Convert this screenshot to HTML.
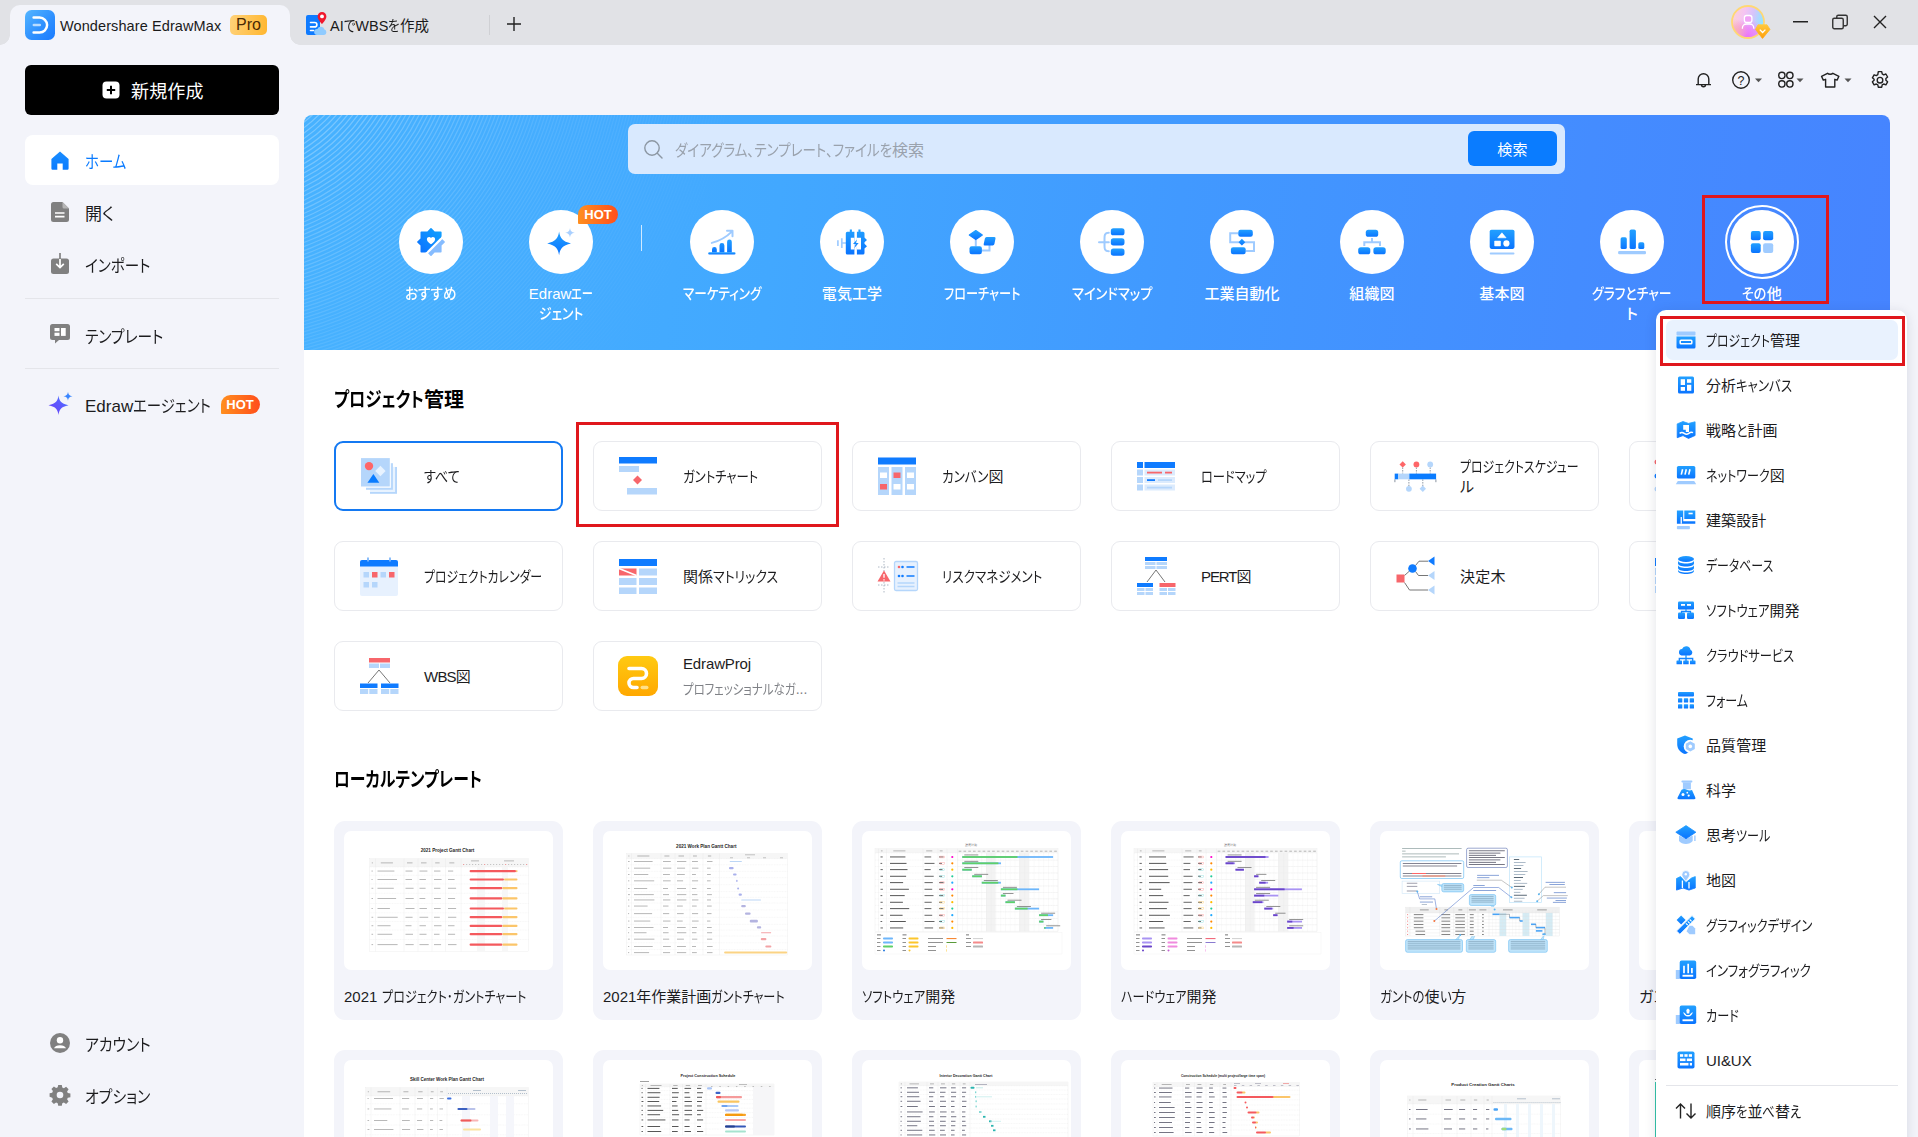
<!DOCTYPE html>
<html lang="ja">
<head>
<meta charset="utf-8">
<title>EdrawMax</title>
<style>
*{box-sizing:border-box;margin:0;padding:0}
html,body{width:1918px;height:1137px;overflow:hidden}
body{background:#f3f4fa;font-family:"Liberation Sans","Noto Sans CJK JP",sans-serif;color:#1c1c1e;position:relative;font-feature-settings:"palt" 1;-webkit-font-smoothing:antialiased}
.abs{position:absolute}
.jp{font-family:"Noto Sans CJK JP","Liberation Sans",sans-serif}
svg{display:block;overflow:visible}

/* ---------- title bar ---------- */
#titlebar{position:absolute;left:0;top:0;width:1918px;height:45px;background:#e1e2e6}
#tab1{position:absolute;left:10px;top:5px;width:280px;height:40px;background:#f3f4fa;border-radius:10px 10px 0 0}
#tab1:before,#tab1:after{content:"";position:absolute;bottom:0;width:10px;height:10px}
#tab1:before{left:-10px;background:radial-gradient(circle at 0 0,rgba(243,244,250,0) 9.5px,#f3f4fa 10px)}
#tab1:after{right:-10px;background:radial-gradient(circle at 100% 0,rgba(243,244,250,0) 9.5px,#f3f4fa 10px)}
.ttext{position:absolute;font-size:14.5px;line-height:20px;color:#1a1a1a;white-space:nowrap}
#pro{position:absolute;left:230px;top:15px;width:37px;height:20px;border-radius:5px;background:linear-gradient(100deg,#ffd27a,#ffb62e);color:#4a2a05;font-size:16px;line-height:20px;text-align:center}

/* ---------- sidebar ---------- */
#newbtn{position:absolute;left:25px;top:65px;width:254px;height:50px;background:#000;border-radius:6px;color:#fff}
#newbtn .nb{position:absolute;left:106px;top:15px;font-size:18px;line-height:24px;white-space:nowrap}
.nav{position:absolute;left:25px;width:254px;height:50px;border-radius:8px}
.nav.on{background:#fff}
.nav .lbl{position:absolute;left:60px;top:16px;font-size:17px;line-height:24px;white-space:nowrap;color:#1c1c1e}
.nav.on .lbl{color:#0a7bff}
.nav svg{position:absolute;left:24px;top:14px}
.sep{position:absolute;left:25px;width:254px;height:1px;background:#e4e5ea}
.hot{display:inline-block;background:linear-gradient(90deg,#ff8f1f,#ff4e1a);color:#fff;font-weight:bold;font-size:12px;line-height:18px;height:18px;border-radius:9px 9px 9px 2px;padding:0 6px;letter-spacing:0}

/* ---------- main ---------- */
#panel{position:absolute;left:304px;top:115px;width:1586px;height:1040px;background:#fff;border-radius:8px 8px 0 0}
#banner{position:absolute;left:304px;top:115px;width:1586px;height:235px;border-radius:8px 8px 0 0;overflow:hidden;
 background:linear-gradient(97deg,#47b2ff 0%,#42a8ff 30%,#4199ff 55%,#448cff 80%,#4684ff 100%)}
#search{position:absolute;left:628px;top:124px;width:937px;height:50px;border-radius:7px;background:#d9e9fe}
#search .ph{position:absolute;left:47px;top:15px;font-size:16px;line-height:24px;color:#9aa2ad;white-space:nowrap}
#sbtn{position:absolute;left:1468px;top:131px;width:89px;height:35px;border-radius:6px;background:#0a7cff;color:#fff;font-size:15px;line-height:38px;text-align:center}
.cat{position:absolute;top:210px;width:64px;height:64px;border-radius:50%;background:#fff}
.cat svg{position:absolute;left:16px;top:16px}
.clbl{position:absolute;top:284px;width:120px;text-align:center;color:#fff;font-size:15px;line-height:20px;font-weight:500}
.redbox{position:absolute;border:3px solid #e0171c}

h2{position:absolute;left:334px;font-size:20px;line-height:28px;font-weight:700;color:#000;white-space:nowrap}
.card{position:absolute;width:229px;height:70px;border:1px solid #e9eaee;border-radius:9px;background:#fff}
.card.sel{border:2px solid #1479f2}
.card .ic{position:absolute;left:23.500px;top:13.500px;width:40px;height:40px}
.card.sel .ic{left:21px;top:11px}
.card .t{position:absolute;left:89px;top:1px;height:68px;width:128px;display:flex;align-items:center;font-size:15px;line-height:20px;color:#1c1c1e}
.card.sel .t{left:88px;top:0}
.tpl{position:absolute;width:229px;height:199px;background:#f3f4fa;border-radius:11px}
.tpl .th{position:absolute;left:10px;top:10px;width:209px;height:139px;background:#fff;border-radius:7px;overflow:hidden}
.tpl .n{position:absolute;left:10px;top:163.5px;font-size:15px;line-height:24px;white-space:nowrap;color:#1c1c1e}

/* ---------- dropdown ---------- */
#dd{position:absolute;left:1656px;top:310px;width:251px;height:840px;background:#fff;border-radius:10px;box-shadow:0 2px 12px rgba(30,40,70,.13)}
.mi{position:absolute;left:1666px;width:232px;height:40px;border-radius:7px}
.mi.on{background:#e9f2fe}
.mi svg{position:absolute;left:9px;top:9px}
.mi .t{position:absolute;left:40px;top:9px;font-size:15px;line-height:24px;white-space:nowrap;color:#1c1c1e}
</style>
</head>
<body>
<!-- TITLEBAR -->
<div id="titlebar">
  <div id="tab1"></div>
</div>

<svg class="abs" style="left:25px;top:10px" width="30" height="30" viewBox="0 0 30 30">
  <defs><linearGradient id="lg1" x1="0" y1="0" x2="1" y2="1"><stop offset="0" stop-color="#55b6ff"/><stop offset=".55" stop-color="#2f91ff"/><stop offset="1" stop-color="#1a7bff"/></linearGradient></defs>
  <rect width="30" height="30" rx="6.5" fill="url(#lg1)"/>
  <path d="M8.6 7.6H14.6A7.5 7.5 0 0 1 14.6 22.6H8.6" fill="none" stroke="#fff" stroke-width="2.5" stroke-linecap="round"/>
  <path d="M8.8 15.1H14.8" stroke="#b9dcff" stroke-width="2.5" stroke-linecap="round"/>
</svg>
<div class="ttext" style="left:60px;top:16px"><span style="white-space:nowrap"><span style="letter-spacing:0.10px">Wondershare EdrawMax</span></span></div>
<div id="pro">Pro</div>
<svg class="abs" style="left:305px;top:11px" width="24" height="25" viewBox="0 0 24 25">
  <rect x="1" y="4" width="14" height="20" rx="2" fill="#0f7bff"/>
  <path d="M5.5 11.5h4.2a2.2 2.2 0 0 1 0 4.4H5.5M5.5 15.9h5.2M5.5 19.5h3" stroke="#fff" stroke-width="1.6" fill="none" stroke-linecap="round"/>
  <path d="M12 24a3 3 0 0 1 .3-6 3.8 3.8 0 0 1 7.2.6 2.8 2.8 0 0 1-.4 5.4z" fill="#8fcbff"/>
  <path d="M17 1a4.4 4.4 0 0 1 4.4 4.4c0 3-4.4 7.6-4.4 7.6s-4.4-4.6-4.4-7.6A4.400 4.400 0 0 1 17 1z" fill="#f0182d"/>
  <circle cx="17" cy="5.400" r="1.900" fill="#fff"/>
</svg>
<div class="ttext" style="left:330px;top:16px"><span style="white-space:nowrap">AI<span style="display:inline-block;white-space:nowrap;width:11.59px;transform:scaleX(0.864);transform-origin:0 50%">で</span>WBS<span style="display:inline-block;white-space:nowrap;width:11.58px;transform:scaleX(0.864);transform-origin:0 50%">を</span>作成</span></div>
<div class="abs" style="left:489px;top:15px;width:1px;height:20px;background:#cfd0d4"></div>
<svg class="abs" style="left:506px;top:16px" width="16" height="16" viewBox="0 0 16 16"><path d="M8 1v14M1 8h14" stroke="#222" stroke-width="1.400"/></svg>

<!-- avatar -->
<svg class="abs" style="left:1731px;top:5px" width="40" height="36" viewBox="0 0 40 36">
  <defs><linearGradient id="av" x1="0" y1="0.300" x2="1" y2="0.550"><stop offset="0" stop-color="#fdd3d6"/><stop offset=".35" stop-color="#f4c4f3"/><stop offset=".62" stop-color="#d6c4fb"/><stop offset=".85" stop-color="#a4dcff"/><stop offset="1" stop-color="#8fe6ff"/></linearGradient>
  <radialGradient id="av2" cx=".47" cy="1" r=".62"><stop offset="0" stop-color="#ea70f9"/><stop offset=".55" stop-color="#ee86f8" stop-opacity=".85"/><stop offset="1" stop-color="#f0a0f8" stop-opacity="0"/></radialGradient>
  <radialGradient id="av3" cx=".1" cy=".8" r=".4"><stop offset="0" stop-color="#fbb0b0"/><stop offset="1" stop-color="#fbb0b0" stop-opacity="0"/></radialGradient>
  <linearGradient id="dm" x1="0" y1="0" x2="0" y2="1"><stop offset="0" stop-color="#ffc93c"/><stop offset="1" stop-color="#ff9f0a"/></linearGradient></defs>
  <circle cx="17" cy="17" r="16" fill="url(#av)"/><circle cx="17" cy="17" r="16" fill="url(#av2)"/><circle cx="17" cy="17" r="16" fill="url(#av3)"/>
  <circle cx="17" cy="17" r="16" fill="none" stroke="#ffd874" stroke-width="1.800"/>
  <rect x="13.400" y="10.500" width="7.500" height="7" rx="2.200" fill="#f0a4f6" stroke="#fff" stroke-width="1.300"/>
  <path d="M11.400 23.800v-.8a4 4 0 0 1 4-4h3.400a4 4 0 0 1 4 4v.8" fill="none" stroke="#fff" stroke-width="1.300"/>
  <path d="M27 19.800h9l3 4.600-7.500 9-7-9z" fill="url(#dm)" stroke="url(#dm)" stroke-width=".8" stroke-linejoin="round"/>
  <path d="M28.800 24.600l2.800 2.900 2.800-2.900" fill="none" stroke="#fff" stroke-width="1.300"/>
</svg>
<svg class="abs" style="left:1793px;top:21px" width="15" height="2"><rect width="15" height="1.500" fill="#222"/></svg>
<svg class="abs" style="left:1832px;top:14px" width="16" height="16" viewBox="0 0 16 16"><rect x=".75" y="4.250" width="10.500" height="10.500" rx="1.500" fill="none" stroke="#333" stroke-width="1.400"/><path d="M4.750 4V2.700a1.500 1.500 0 0 1 1.500-1.500h7.500a1.500 1.500 0 0 1 1.500 1.500v7.500a1.500 1.500 0 0 1-1.500 1.500H11.500" fill="none" stroke="#333" stroke-width="1.400"/></svg>
<svg class="abs" style="left:1873px;top:15px" width="14" height="14" viewBox="0 0 14 14"><path d="M1 1l12 12M13 1L1 13" stroke="#222" stroke-width="1.400"/></svg>

<!-- toolbar icons -->
<svg class="abs" style="left:1694px;top:70px" width="20" height="20" viewBox="0 0 20 20"><path d="M4.200 14.500V9a5.300 5.300 0 0 1 10.600 0v5.500M2 14.600h15M7.500 14.800a2 2 0 0 0 4 0" fill="none" stroke="#222" stroke-width="1.400" stroke-linejoin="round"/></svg>
<svg class="abs" style="left:1731px;top:70px" width="34" height="20" viewBox="0 0 34 20"><circle cx="10" cy="10" r="8.300" fill="none" stroke="#222" stroke-width="1.400"/><text x="10" y="14.500" font-size="12.500" text-anchor="middle" fill="#222" font-family="Liberation Sans,sans-serif">?</text><path d="M24 8.500h7l-3.500 3.800z" fill="#555"/></svg>
<svg class="abs" style="left:1777px;top:70px" width="30" height="20" viewBox="0 0 30 20"><g fill="none" stroke="#222" stroke-width="1.400"><rect x="1.700" y="2.300" width="6.300" height="6.300" rx="3"/><rect x="9.700" y="2.300" width="6.300" height="6.300" rx="3"/><rect x="1.700" y="10.800" width="6.300" height="6.300" rx="3"/><rect x="9.700" y="10.800" width="6.300" height="6.300" rx="3"/></g><path d="M19.500 8.500h7l-3.500 3.800z" fill="#555"/></svg>
<svg class="abs" style="left:1820px;top:70px" width="34" height="20" viewBox="0 0 34 20"><path d="M6.300 2.800c1.200 1.300 4.200 1.300 5.400 0l6 3-1.800 3.800-2.300-.8v7.700H4.400V8.800l-2.300.8L.3 5.800z" transform="translate(1.200,.5)" fill="none" stroke="#222" stroke-width="1.400" stroke-linejoin="round"/><path d="M24.500 8.500h7l-3.500 3.800z" fill="#555"/></svg>
<svg class="abs" style="left:1870px;top:70px" width="20" height="20" viewBox="0 0 20 20"><path d="M8.300 1.600h3.400l.5 2.300 1.500.9 2.200-.8 1.700 3-1.700 1.500v1.800l1.700 1.500-1.700 3-2.200-.8-1.500.9-.5 2.300H8.300l-.5-2.300-1.500-.9-2.200.8-1.700-3 1.700-1.500V9.300L2.400 7.800l1.700-3 2.200.8 1.500-.9z" fill="none" stroke="#222" stroke-width="1.400" stroke-linejoin="round"/><circle cx="10" cy="10.200" r="2.800" fill="none" stroke="#222" stroke-width="1.400"/></svg>
<!--TB-CONTENT-->

<!-- SIDEBAR -->

<div id="newbtn">
  <svg class="abs" style="left:77px;top:16px" width="18" height="18" viewBox="0 0 18 18"><rect x=".5" y=".5" width="17" height="17" rx="4" fill="#fff"/><path d="M9 4.800v8.400M4.800 9h8.400" stroke="#000" stroke-width="2"/></svg>
  <div class="nb"><span style="white-space:nowrap"><span style="letter-spacing:0.18px">新規作成</span></span></div>
</div>
<div class="nav on" style="top:135px">
  <svg style="left:26px;top:16px" width="18" height="19" viewBox="0 0 18 19"><defs><linearGradient id="hm" x1="0" y1="0" x2="0" y2="1"><stop offset="0" stop-color="#1a8dff"/><stop offset="1" stop-color="#0a7bff"/></linearGradient></defs><path d="M9 .4L17.600 8V17.500a1.200 1.200 0 0 1-1.200 1.200H11.700V12.500H6.300V18.700H1.600A1.200 1.200 0 0 1 .4 17.500V8z" fill="url(#hm)"/></svg>
  <div class="lbl"><span style="white-space:nowrap"><span style="display:inline-block;white-space:nowrap;width:41.40px;transform:scaleX(0.851);transform-origin:0 50%">ホーム</span></span></div>
</div>
<div class="nav" style="top:187px">
  <svg style="left:26px;top:15px" width="18" height="20" viewBox="0 0 18 20"><path d="M2.500 0H11.500L18 6.500V17.500A2.500 2.500 0 0 1 15.500 20H2.500A2.500 2.500 0 0 1 0 17.500V2.500A2.500 2.500 0 0 1 2.500 0z" fill="#808080"/><path d="M11.500 0L18 6.500H13A1.500 1.500 0 0 1 11.500 5z" fill="#b5b5b5"/><path d="M4 11h9.500M4 14.700h9.500" stroke="#fff" stroke-width="1.700"/></svg>
  <div class="lbl"><span style="white-space:nowrap">開<span style="display:inline-block;white-space:nowrap;width:12.40px;transform:scaleX(1.061);transform-origin:0 50%">く</span></span></div>
</div>
<div class="nav" style="top:239px">
  <svg style="left:26px;top:14px" width="18" height="21" viewBox="0 0 18 21"><rect x="0" y="5.500" width="18" height="15.500" rx="2.500" fill="#808080"/><path d="M9 0v14.500" stroke="#808080" stroke-width="1.700"/><path d="M9 6v8.200M5.200 10.800L9 14.500l3.800-3.700" fill="none" stroke="#fff" stroke-width="1.700"/></svg>
  <div class="lbl"><span style="white-space:nowrap"><span style="display:inline-block;white-space:nowrap;width:65.40px;transform:scaleX(0.857);transform-origin:0 50%">インポート</span></span></div>
</div>
<div class="sep" style="top:298px"></div>
<div class="nav" style="top:310px">
  <svg style="left:25px;top:14px" width="20" height="20" viewBox="0 0 20 20"><path d="M2.500 0H17.500A2.500 2.500 0 0 1 20 2.500V13.500A2.500 2.500 0 0 1 17.500 16H9L5 19.500V16H2.500A2.500 2.500 0 0 1 0 13.500V2.500A2.500 2.500 0 0 1 2.500 0z" fill="#808080"/><rect x="4.500" y="4" width="5" height="3.200" fill="#fff"/><rect x="4.500" y="8.700" width="5" height="3.200" fill="#fff"/><rect x="11" y="4" width="4.700" height="7.900" fill="#fff"/></svg>
  <div class="lbl"><span style="white-space:nowrap"><span style="display:inline-block;white-space:nowrap;width:78.40px;transform:scaleX(0.866);transform-origin:0 50%">テンプレート</span></span></div>
</div>
<div class="sep" style="top:368px"></div>
<div class="nav" style="top:380px">
  <svg style="left:23px;top:11px" width="26" height="26" viewBox="0 0 26 26"><defs><linearGradient id="ag" x1="0" y1="1" x2="1" y2="0"><stop offset="0" stop-color="#6a3cf5"/><stop offset=".6" stop-color="#5b5cff"/><stop offset="1" stop-color="#2f8bff"/></linearGradient></defs><path d="M10.500 4.500C11.300 10 12.800 12.500 20.500 14.200 12.800 15.900 11.300 18.400 10.500 24 9.700 18.400 8.200 15.900 .5 14.200 8.200 12.500 9.700 10 10.500 4.500z" fill="url(#ag)"/><path d="M20 .8C20.400 3.500 21.200 4.600 24.500 5.300 21.200 6 20.400 7.100 20 9.800 19.600 7.100 18.800 6 15.500 5.300 18.800 4.600 19.600 3.500 20 .8z" fill="#3a86ff"/></svg>
  <div class="lbl" style="top:15px"><span style="white-space:nowrap">Edraw<span style="display:inline-block;white-space:nowrap;width:77.71px;transform:scaleX(0.849);transform-origin:0 50%">エージェント</span></span></div>
  <div class="hot" style="position:absolute;left:195.500px;top:14.500px;width:39px;height:19px;line-height:19px;font-size:13px;padding:0;text-align:center;border-radius:10px 10px 10px 1px">HOT</div>
</div>
<div class="nav" style="top:1018px">
  <svg style="left:25px;top:15px" width="20" height="20" viewBox="0 0 20 20"><circle cx="10" cy="10" r="10" fill="#808080"/><circle cx="10" cy="7.200" r="3.200" fill="#fff"/><path d="M4 15.200a6.300 4.200 0 0 1 12 0z" fill="#fff"/></svg>
  <div class="lbl" style="top:15.500px"><span style="white-space:nowrap"><span style="display:inline-block;white-space:nowrap;width:65.70px;transform:scaleX(0.875);transform-origin:0 50%">アカウント</span></span></div>
</div>
<div class="nav" style="top:1070px">
  <svg style="left:25px;top:15px" width="20" height="20" viewBox="0 0 20 20"><path d="M8.200 0h3.600l.5 2.600 1.600.7 2.200-1.500 2.500 2.500-1.500 2.200.7 1.600 2.600.5v3.600l-2.600.5-.7 1.600 1.500 2.200-2.500 2.500-2.200-1.500-1.600.7-.5 2.600H8.200l-.5-2.600-1.600-.7-2.200 1.500-2.500-2.500 1.500-2.200-.7-1.600L-.4 11.800V8.200l2.600-.5.7-1.600L1.400 3.900 3.900 1.400l2.200 1.500 1.600-.7z" fill="#808080"/><circle cx="10" cy="10" r="3.300" fill="#f3f4fa"/></svg>
  <div class="lbl"><span style="white-space:nowrap"><span style="display:inline-block;white-space:nowrap;width:65.40px;transform:scaleX(0.875);transform-origin:0 50%">オプション</span></span></div>
</div>


<!-- MAIN -->
<div id="panel"></div>
<div id="banner"></div>

<!--B0-->
<svg class="abs" style="left:304px;top:115px" width="1586" height="235" viewBox="0 0 1586 235">
 <defs>
  <linearGradient id="ib" x1="0" y1="0" x2="0" y2="1"><stop offset="0" stop-color="#22a0ff"/><stop offset="1" stop-color="#0a74ff"/></linearGradient>
  <clipPath id="bc"><path d="M0 235V8A8 8 0 0 1 8 0H1578A8 8 0 0 1 1586 8V235z"/></clipPath>
  <radialGradient id="rg" gradientUnits="userSpaceOnUse" cx="-85" cy="-100" r="540"><stop offset="0" stop-color="#fff"/><stop offset=".3" stop-color="#fff"/><stop offset=".62" stop-color="#555"/><stop offset="1" stop-color="#000"/></radialGradient>
  <mask id="rm"><rect width="1586" height="235" fill="url(#rg)"/></mask>
 </defs>
 <g clip-path="url(#bc)"><g mask="url(#rm)" fill="none" stroke="#fff" stroke-opacity=".27" stroke-width="1.250">
<circle cx="-85" cy="-100" r="128.0"/><circle cx="-85" cy="-100" r="132.4"/><circle cx="-85" cy="-100" r="136.8"/><circle cx="-85" cy="-100" r="141.2"/><circle cx="-85" cy="-100" r="145.5"/><circle cx="-85" cy="-100" r="149.8"/><circle cx="-85" cy="-100" r="154.1"/><circle cx="-85" cy="-100" r="158.4"/><circle cx="-85" cy="-100" r="162.7"/><circle cx="-85" cy="-100" r="166.9"/><circle cx="-85" cy="-100" r="171.1"/><circle cx="-85" cy="-100" r="175.3"/><circle cx="-85" cy="-100" r="179.4"/><circle cx="-85" cy="-100" r="183.5"/><circle cx="-85" cy="-100" r="187.6"/><circle cx="-85" cy="-100" r="191.7"/><circle cx="-85" cy="-100" r="195.8"/><circle cx="-85" cy="-100" r="199.8"/><circle cx="-85" cy="-100" r="203.9"/><circle cx="-85" cy="-100" r="207.9"/><circle cx="-85" cy="-100" r="211.8"/><circle cx="-85" cy="-100" r="215.8"/><circle cx="-85" cy="-100" r="219.7"/><circle cx="-85" cy="-100" r="223.6"/><circle cx="-85" cy="-100" r="227.5"/><circle cx="-85" cy="-100" r="231.4"/><circle cx="-85" cy="-100" r="235.2"/><circle cx="-85" cy="-100" r="239.0"/><circle cx="-85" cy="-100" r="242.8"/><circle cx="-85" cy="-100" r="246.6"/><circle cx="-85" cy="-100" r="250.4"/><circle cx="-85" cy="-100" r="254.1"/><circle cx="-85" cy="-100" r="257.8"/><circle cx="-85" cy="-100" r="261.5"/><circle cx="-85" cy="-100" r="265.2"/><circle cx="-85" cy="-100" r="268.8"/><circle cx="-85" cy="-100" r="272.5"/><circle cx="-85" cy="-100" r="276.1"/><circle cx="-85" cy="-100" r="279.7"/><circle cx="-85" cy="-100" r="283.3"/><circle cx="-85" cy="-100" r="286.8"/><circle cx="-85" cy="-100" r="290.3"/><circle cx="-85" cy="-100" r="293.9"/><circle cx="-85" cy="-100" r="297.4"/><circle cx="-85" cy="-100" r="300.8"/><circle cx="-85" cy="-100" r="304.3"/><circle cx="-85" cy="-100" r="307.7"/><circle cx="-85" cy="-100" r="311.1"/><circle cx="-85" cy="-100" r="314.5"/><circle cx="-85" cy="-100" r="317.9"/><circle cx="-85" cy="-100" r="321.3"/><circle cx="-85" cy="-100" r="324.6"/><circle cx="-85" cy="-100" r="327.9"/><circle cx="-85" cy="-100" r="331.3"/><circle cx="-85" cy="-100" r="334.5"/><circle cx="-85" cy="-100" r="337.8"/><circle cx="-85" cy="-100" r="341.1"/><circle cx="-85" cy="-100" r="344.3"/><circle cx="-85" cy="-100" r="347.5"/><circle cx="-85" cy="-100" r="350.7"/><circle cx="-85" cy="-100" r="353.9"/><circle cx="-85" cy="-100" r="357.0"/><circle cx="-85" cy="-100" r="360.2"/><circle cx="-85" cy="-100" r="363.3"/><circle cx="-85" cy="-100" r="366.4"/><circle cx="-85" cy="-100" r="369.5"/><circle cx="-85" cy="-100" r="372.6"/><circle cx="-85" cy="-100" r="375.7"/><circle cx="-85" cy="-100" r="378.7"/><circle cx="-85" cy="-100" r="381.7"/><circle cx="-85" cy="-100" r="384.7"/><circle cx="-85" cy="-100" r="387.7"/><circle cx="-85" cy="-100" r="390.7"/><circle cx="-85" cy="-100" r="393.6"/><circle cx="-85" cy="-100" r="396.6"/><circle cx="-85" cy="-100" r="399.5"/><circle cx="-85" cy="-100" r="402.4"/><circle cx="-85" cy="-100" r="405.3"/><circle cx="-85" cy="-100" r="408.2"/><circle cx="-85" cy="-100" r="411.1"/><circle cx="-85" cy="-100" r="414.0"/><circle cx="-85" cy="-100" r="416.9"/><circle cx="-85" cy="-100" r="419.8"/><circle cx="-85" cy="-100" r="422.7"/><circle cx="-85" cy="-100" r="425.6"/><circle cx="-85" cy="-100" r="428.5"/><circle cx="-85" cy="-100" r="431.4"/><circle cx="-85" cy="-100" r="434.3"/><circle cx="-85" cy="-100" r="437.2"/><circle cx="-85" cy="-100" r="440.1"/><circle cx="-85" cy="-100" r="443.0"/><circle cx="-85" cy="-100" r="445.9"/><circle cx="-85" cy="-100" r="448.8"/><circle cx="-85" cy="-100" r="451.7"/><circle cx="-85" cy="-100" r="454.6"/><circle cx="-85" cy="-100" r="457.5"/><circle cx="-85" cy="-100" r="460.4"/><circle cx="-85" cy="-100" r="463.3"/><circle cx="-85" cy="-100" r="466.2"/><circle cx="-85" cy="-100" r="469.1"/><circle cx="-85" cy="-100" r="472.0"/><circle cx="-85" cy="-100" r="474.9"/><circle cx="-85" cy="-100" r="477.8"/><circle cx="-85" cy="-100" r="480.7"/><circle cx="-85" cy="-100" r="483.6"/><circle cx="-85" cy="-100" r="486.5"/><circle cx="-85" cy="-100" r="489.4"/><circle cx="-85" cy="-100" r="492.3"/><circle cx="-85" cy="-100" r="495.2"/><circle cx="-85" cy="-100" r="498.1"/><circle cx="-85" cy="-100" r="501.0"/><circle cx="-85" cy="-100" r="503.9"/><circle cx="-85" cy="-100" r="506.8"/><circle cx="-85" cy="-100" r="509.7"/><circle cx="-85" cy="-100" r="512.6"/><circle cx="-85" cy="-100" r="515.5"/><circle cx="-85" cy="-100" r="518.4"/><circle cx="-85" cy="-100" r="521.3"/><circle cx="-85" cy="-100" r="524.2"/><circle cx="-85" cy="-100" r="527.1"/><circle cx="-85" cy="-100" r="530.0"/><circle cx="-85" cy="-100" r="532.9"/><circle cx="-85" cy="-100" r="535.8"/><circle cx="-85" cy="-100" r="538.7"/><circle cx="-85" cy="-100" r="541.6"/><circle cx="-85" cy="-100" r="544.5"/>
 </g></g>
</svg>
<div id="search">
  <svg class="abs" style="left:16px;top:16px" width="19" height="19" viewBox="0 0 19 19"><circle cx="8" cy="8" r="7.200" fill="none" stroke="#8c97a3" stroke-width="1.400"/><path d="M13.300 13.300L18 18" stroke="#8c97a3" stroke-width="1.400" stroke-linecap="round"/></svg>
  <div class="ph"><span style="white-space:nowrap"><span style="display:inline-block;white-space:nowrap;width:217.08px;transform:scaleX(0.846);transform-origin:0 50%">ダイアグラム、テンプレート、ファイルを</span>検索</span></div>
</div>
<div id="sbtn"><span style="white-space:nowrap"><span style="letter-spacing:0.19px">検索</span></span></div>
<div class="abs" style="left:641px;top:225px;width:1px;height:26px;background:rgba(255,255,255,.75)"></div>
<div class="cat" style="left:399px"><svg width="32" height="32" viewBox="0 0 32 32"><defs><clipPath id="ca"><path d="M-5 -5H42.300L-5 42.300z"/></clipPath><clipPath id="cb"><path d="M45.500 -5V45.500H-5z"/></clipPath><linearGradient id="ig2" x1="1" y1="0" x2="0" y2="1"><stop offset="0" stop-color="#12a6ff"/><stop offset="1" stop-color="#0a6cff"/></linearGradient></defs><path d="M16 2.900L19.400 6.300H25.800V12.700L29.100 16 25.800 19.300V25.800H19.300L16 29.100 12.700 25.800H6.300V19.300L2.900 16 6.300 12.700V6.300H12.700z" fill="url(#ig2)" stroke="url(#ig2)" stroke-width="1.600" stroke-linejoin="round" clip-path="url(#ca)"/><path d="M16 2.900L19.400 6.300H25.800V12.700L29.100 16 25.800 19.300V25.800H19.300L16 29.100 12.700 25.800H6.300V19.300L2.900 16 6.300 12.700V6.300H12.700z" fill="#86bcff" stroke="#86bcff" stroke-width="1.600" stroke-linejoin="round" clip-path="url(#cb)"/><path d="M16 18.300c-3.300-2.400-4.100-3.600-4.100-5 0-1.300 1-2.200 2.200-2.200.8 0 1.500.4 1.900 1 .4-.6 1.100-1 1.900-1 1.200 0 2.200.9 2.200 2.200 0 1.400-.8 2.600-4.100 5z" fill="#fff"/></svg></div>
<div class="clbl" style="left:371px"><span style="white-space:nowrap"><span style="display:inline-block;white-space:nowrap;width:51.40px;transform:scaleX(0.910);transform-origin:0 50%">おすすめ</span></span></div>
<div class="cat" style="left:529px"><svg width="32" height="32" viewBox="0 0 32 32"><path d="M14.100 5.600C15.200 12.800 17.500 15.400 26 17.400 17.500 19.400 15.200 22 14.100 29.200 13 22 10.700 19.400 2.200 17.400 10.700 15.400 13 12.800 14.100 5.600z" fill="url(#ib)"/><path d="M25 2C25.500 5.200 26.500 6.200 29.800 6.800 26.500 7.400 25.500 8.400 25 11.600 24.500 8.400 23.500 7.400 20.200 6.800 23.500 6.200 24.500 5.200 25 2z" fill="#a9d0ff"/></svg></div>
<div class="clbl" style="left:501px"><span style="white-space:nowrap">Edraw<span style="display:inline-block;white-space:nowrap;width:21.87px;transform:scaleX(0.749);transform-origin:0 50%">エー</span></span><br><span style="white-space:nowrap"><span style="display:inline-block;white-space:nowrap;width:44.40px;transform:scaleX(0.856);transform-origin:0 50%">ジェント</span></span></div>
<div class="cat" style="left:690px"><svg width="32" height="32" viewBox="0 0 32 32"><path d="M6 26.500v-3a2.400 2.400 0 0 1 4.800 0v3zM13.500 26.500v-7a2.450 2.450 0 0 1 4.900 0v7zM21.100 26.500V15.800a2.350 2.350 0 0 1 4.700 0v10.700z" fill="url(#ib)"/><rect x="2.2" y="26.3" width="27.3" height="2.2" rx="1.1" fill="url(#ib)"/><path d="M5.800 16.900C13 15 20 11.500 25.800 5.600M21 4.700h5.500v5.500" fill="none" stroke="#9fcbff" stroke-width="2" stroke-linecap="round" stroke-linejoin="round"/></svg></div>
<div class="clbl" style="left:662px"><span style="white-space:nowrap"><span style="display:inline-block;white-space:nowrap;width:78.40px;transform:scaleX(0.842);transform-origin:0 50%">マーケティング</span></span></div>
<div class="cat" style="left:820px"><svg width="32" height="32" viewBox="0 0 32 32"><path d="M1.900 14.300v5.600M5.800 12.300v9.600M6.500 17h3.500" stroke="#9fcbff" stroke-width="1.700" fill="none"/><path d="M11.300 5.700h2.500V3.500h2.100v2.200h2.500V28.500h-7.100a1.500 1.500 0 0 1-1.500-1.500V7.200a1.500 1.500 0 0 1 1.500-1.500z" fill="url(#ib)"/><path d="M20.900 5.700h1.500V3.500h2.100v2.200H27a1.500 1.500 0 0 1 1.500 1.500v4.300l2.500 2.500-2.500 2.200v1.600l2.500 2.400-2.500 2.300V27a1.500 1.500 0 0 1-1.500 1.500h-6.100z" fill="url(#ib)"/><path d="M14.800 11.800h3.600v11.600h-3.600zM20.900 11.800H25v11.600h-4.100z" fill="#fff"/><path d="M21 13.500l-4 4.600h2.600l-1.200 3.800 4.300-5h-2.700z" fill="url(#ib)"/></svg></div>
<div class="clbl" style="left:792px"><span style="white-space:nowrap"><span style="letter-spacing:0.10px">電気工学</span></span></div>
<div class="cat" style="left:950px"><svg width="32" height="32" viewBox="0 0 32 32"><path d="M9.800 14v6.500M15.900 24.500h7.600v-5.500" fill="none" stroke="#9fcbff" stroke-width="2"/><path d="M9.800 4.600l6.500 4.500-6.500 4.500-6.500-4.500z" fill="url(#ib)" stroke="url(#ib)" stroke-width="1.200" stroke-linejoin="round"/><rect x="3.5" y="20.2" width="12.4" height="8.1" rx="2.2" fill="url(#ib)"/><path d="M20.700 11.100h7.600a1.200 1.200 0 0 1 1.200 1.500l-1.100 5.300a1.900 1.900 0 0 1-1.800 1.500h-7.700a1.200 1.200 0 0 1-1.200-1.500l1.200-5.300a1.900 1.900 0 0 1 1.800-1.500z" fill="url(#ib)"/></svg></div>
<div class="clbl" style="left:922px"><span style="white-space:nowrap"><span style="display:inline-block;white-space:nowrap;width:76.40px;transform:scaleX(0.812);transform-origin:0 50%">フローチャート</span></span></div>
<div class="cat" style="left:1080px"><svg width="32" height="32" viewBox="0 0 32 32"><path d="M3 16.200h9.800M12.800 6.700C8.500 6.700 8.500 9.500 8.500 12.500v7c0 3 0 5.800 4.300 5.800" fill="none" stroke="#9fcbff" stroke-width="2" stroke-linecap="round"/><rect x="14.8" y="2.2" width="13.7" height="7.1" rx="2.6" fill="url(#ib)"/><rect x="14.8" y="12.3" width="13.7" height="7.1" rx="2.6" fill="url(#ib)"/><rect x="14.8" y="22.4" width="13.7" height="7.3" rx="2.6" fill="url(#ib)"/></svg></div>
<div class="clbl" style="left:1052px"><span style="white-space:nowrap"><span style="display:inline-block;white-space:nowrap;width:80.40px;transform:scaleX(0.885);transform-origin:0 50%">マインドマップ</span></span></div>
<div class="cat" style="left:1210px"><svg width="32" height="32" viewBox="0 0 32 32"><path d="M12.300 7.200H4.200v9h23.800v8.800H19.700" fill="none" stroke="#9fcbff" stroke-width="2"/><rect x="12.3" y="3.7" width="14.5" height="7.1" rx="2.2" fill="url(#ib)"/><rect x="4.9" y="21.2" width="14.8" height="7.1" rx="2.2" fill="url(#ib)"/><path d="M15.900 12.800l3.400 3.400-3.400 3.400-3.400-3.400z" fill="url(#ib)"/></svg></div>
<div class="clbl" style="left:1182px"><span style="white-space:nowrap"><span style="letter-spacing:-0.02px">工業自動化</span></span></div>
<div class="cat" style="left:1340px"><svg width="32" height="32" viewBox="0 0 32 32"><path d="M16 12v4.200M8.300 20v-3.800H24V20" fill="none" stroke="#9fcbff" stroke-width="2"/><rect x="9.8" y="3.7" width="12.4" height="7.1" rx="2.6" fill="url(#ib)"/><rect x="2.2" y="21.2" width="12.1" height="7.1" rx="2.6" fill="url(#ib)"/><rect x="17.4" y="21.2" width="12.3" height="7.1" rx="2.6" fill="url(#ib)"/></svg></div>
<div class="clbl" style="left:1312px"><span style="white-space:nowrap"><span style="letter-spacing:0.13px">組織図</span></span></div>
<div class="cat" style="left:1470px"><svg width="32" height="32" viewBox="0 0 32 32"><rect x="3.7" y="3.7" width="24.8" height="19.2" rx="1.8" fill="url(#ib)"/><path d="M15.900 6.800l4.200 5h-8.400z" fill="#fff" stroke="#fff" stroke-width=".6" stroke-linejoin="round"/><rect x="8.3" y="14.8" width="6.5" height="5.4" rx="0.6" fill="#fff"/><circle cx="20.400" cy="17.400" r="3.100" fill="#fff"/><rect x="3.7" y="26.5" width="24.8" height="2.0" rx="1" fill="#9fcbff"/></svg></div>
<div class="clbl" style="left:1442px"><span style="white-space:nowrap"><span style="letter-spacing:0.13px">基本図</span></span></div>
<div class="cat" style="left:1600px"><svg width="32" height="32" viewBox="0 0 32 32"><rect x="4.6" y="11.3" width="6.2" height="11.8" rx="1.7" fill="url(#ib)"/><rect x="13.6" y="3.6" width="6.3" height="19.5" rx="1.7" fill="url(#ib)"/><rect x="22.3" y="16.2" width="6.0" height="6.9" rx="1.7" fill="url(#ib)"/><rect x="2.1" y="25" width="27.9" height="3.2" rx="1.2" fill="#9fcbff"/></svg></div>
<div class="clbl" style="left:1572px"><span style="white-space:nowrap"><span style="display:inline-block;white-space:nowrap;width:79.40px;transform:scaleX(0.855);transform-origin:0 50%">グラフとチャー</span></span><br>ト</div>
<div class="cat" style="left:1730px"><svg width="32" height="32" viewBox="0 0 32 32"><rect x="4.9" y="5" width="9.8" height="9.3" rx="2" fill="url(#ib)"/><rect x="17.1" y="5" width="10.1" height="9.3" rx="2" fill="url(#ib)"/><rect x="4.9" y="17.2" width="9.8" height="9.7" rx="2" fill="url(#ib)"/><rect x="17.1" y="17.2" width="10.1" height="9.7" rx="2" fill="#9fcbff"/></svg></div>
<div class="clbl" style="left:1702px"><span style="white-space:nowrap"><span style="display:inline-block;white-space:nowrap;width:24.38px;transform:scaleX(0.870);transform-origin:0 50%">その</span>他</span></div>
<div class="hot" style="position:absolute;left:578px;top:205px;width:40px;height:19px;line-height:19px;font-size:13px;padding:0;text-align:center;border-radius:10px 10px 10px 1px">HOT</div>
<div class="abs" style="left:1725px;top:205px;width:74px;height:74px;border-radius:50%;border:2px solid #fff"></div>
<div class="redbox" style="left:1702px;top:195px;width:127px;height:109px"></div>
<!--B1-->


<h2 style="top:385.5px"><span style="white-space:nowrap"><span style="display:inline-block;white-space:nowrap;width:89.90px;transform:scaleX(0.811);transform-origin:0 50%">プロジェクト</span>管理</span></h2>
<div class="card sel" style="left:334px;top:441px"><svg class="ic" viewBox="0 0 40 40"><path d="M13 12.900H40V39.800H13z" fill="#e8f3ff"/><path d="M38.100 12.900H40V39.800H13V38H38.100z" fill="#b5d6fb"/><path d="M9 9.200H35.900V35.800H9z" fill="#e8f3ff"/><path d="M34.100 9.200H35.900V35.800H9V34H34.100z" fill="#b5d6fb"/><path d="M3.300 3.400H33.500V33.200H3.300z" fill="#fff"/><rect x="4" y="4.100" width="28.800" height="28.400" fill="#b5d6fb"/><circle cx="12" cy="12.100" r="4.200" fill="#fe6668"/><path d="M23.400 11.800l5.200 5.200-5.200 5.200-5.200-5.200z" fill="#e8f3ff"/><path d="M16.400 20.100l5.900 8.700H10.400z" fill="#0a7cff"/></svg><div class="t"><div><span style="white-space:nowrap"><span style="display:inline-block;white-space:nowrap;width:35.80px;transform:scaleX(0.873);transform-origin:0 50%">すべて</span></span></div></div></div>
<div class="card" style="left:593px;top:441px"><svg class="ic" viewBox="0 0 40 40"><rect x="1" y="1" width="38" height="6.500" fill="#0f7bff"/><rect x="1" y="10" width="20" height="6" fill="#b5d6fb"/><path d="M19.500 19.500l4.500 4.500-4.500 4.500-4.500-4.500z" fill="#f7666b"/><rect x="9" y="32" width="30" height="6.500" fill="#b5d6fb"/></svg><div class="t"><div><span style="white-space:nowrap"><span style="display:inline-block;white-space:nowrap;width:75.20px;transform:scaleX(0.823);transform-origin:0 50%">ガントチャート</span></span></div></div></div>
<div class="card" style="left:852px;top:441px"><svg class="ic" viewBox="0 0 40 40"><rect x="1" y="1.500" width="38" height="7" fill="#0f7bff"/><rect x="1" y="11" width="11" height="28" fill="#b5d6fb"/><rect x="14.500" y="11" width="11" height="28" fill="#b5d6fb"/><rect x="28" y="11" width="11" height="28" fill="#b5d6fb"/><rect x="3" y="16.500" width="7" height="5.500" fill="#fff"/><rect x="3" y="28" width="7" height="5.500" fill="#f7666b"/><rect x="16.500" y="16.500" width="7" height="5.500" fill="#f7666b"/><rect x="16.500" y="28" width="7" height="5.500" fill="#fff"/><rect x="30" y="16.500" width="7" height="5.500" fill="#fff"/><rect x="30" y="28" width="7" height="5.500" fill="#fff"/></svg><div class="t"><div><span style="white-space:nowrap"><span style="display:inline-block;white-space:nowrap;width:46.38px;transform:scaleX(0.836);transform-origin:0 50%">カンバン</span>図</span></div></div></div>
<div class="card" style="left:1111px;top:441px"><svg class="ic" viewBox="0 0 40 40"><rect x="1" y="6" width="6" height="6" fill="#0f7bff"/><rect x="8.500" y="6" width="30.500" height="6" fill="#0f7bff"/><rect x="1" y="13.500" width="6" height="6" fill="#b5d6fb"/><rect x="8.500" y="13.500" width="30.500" height="6" fill="#dcebfd"/><rect x="1" y="21" width="6" height="6" fill="#b5d6fb"/><rect x="8.500" y="21" width="30.500" height="6" fill="#dcebfd"/><rect x="1" y="28.500" width="6" height="6" fill="#b5d6fb"/><rect x="8.500" y="28.500" width="30.500" height="6" fill="#dcebfd"/><rect x="11" y="15.700" width="15" height="1.800" fill="#f7666b"/><rect x="29" y="15.700" width="7" height="1.800" fill="#f7666b"/><rect x="11" y="23.200" width="8" height="1.800" fill="#0f7bff"/><rect x="22" y="23.200" width="14" height="1.800" fill="#b5d6fb"/><rect x="11" y="30.700" width="25" height="1.800" fill="#b5d6fb"/></svg><div class="t"><div><span style="white-space:nowrap"><span style="display:inline-block;white-space:nowrap;width:65.60px;transform:scaleX(0.817);transform-origin:0 50%">ロードマップ</span></span></div></div></div>
<div class="card" style="left:1370px;top:441px"><svg class="ic" viewBox="0 0 40 40"><path d="M7.700 11.500v6M21.400 11.500v6M35.200 11.500v6M13.900 23.500v6.500M27.800 23.500v6.500" stroke="#7a8694" stroke-width=".9" stroke-dasharray="1.400 1.200"/><path d="M-.100 23.400v2.800M40.900 23.400v2.800" stroke="#7a8694" stroke-width=".9"/><rect x="-.3" y="17.600" width="3.600" height="5.700" fill="#0a7cff"/><rect x="3.300" y="17.600" width="11" height="5.700" fill="#b5d6fb"/><rect x="14.300" y="17.600" width="26.800" height="5.700" fill="#0a7cff"/><path d="M7.700 5.200l3.200 3.200-3.200 3.200-3.200-3.200z" fill="#fe6668"/><circle cx="21.400" cy="8.400" r="2.900" fill="#fe6668"/><circle cx="35.200" cy="8.400" r="2.900" fill="#b5d6fb"/><circle cx="13.900" cy="32.800" r="2.900" fill="#b5d6fb"/><path d="M27.800 29.600l3.200 3.200-3.200 3.200-3.200-3.200z" fill="#b5d6fb"/></svg><div class="t"><div><span style="white-space:nowrap"><span style="display:inline-block;white-space:nowrap;width:118.40px;transform:scaleX(0.795);transform-origin:0 50%">プロジェクトスケジュー</span></span><br>ル</div></div></div>
<div class="card" style="left:1629px;top:441px"><svg class="ic" viewBox="0 0 40 40"><circle cx="3" cy="6" r="2.500" fill="#f7666b"/><circle cx="3" cy="20" r="2.500" fill="#0f7bff"/><circle cx="3" cy="33" r="2.500" fill="#b5d6fb"/></svg><div class="t"><div></div></div></div>
<div class="card" style="left:334px;top:541px"><svg class="ic" viewBox="0 0 40 40"><rect x="1" y="4" width="38" height="36" rx="2" fill="#e7f1fe"/><path d="M1 6a2 2 0 0 1 2-2h34a2 2 0 0 1 2 2v4.500H1z" fill="#0f7bff"/><path d="M9 1.500v4M31 1.500v4" stroke="#7db6fa" stroke-width="1.800"/><rect x="4.500" y="16" width="5.500" height="5.500" fill="#b5d6fb"/><rect x="13" y="16" width="5.500" height="5.500" fill="#f7666b"/><rect x="21.500" y="16" width="5.500" height="5.500" fill="#b5d6fb"/><rect x="30" y="16" width="5.500" height="5.500" fill="#f7666b"/><rect x="4.500" y="26" width="5.500" height="5.500" fill="#b5d6fb"/><rect x="13" y="26" width="5.500" height="5.500" fill="#b5d6fb"/></svg><div class="t"><div><span style="white-space:nowrap"><span style="display:inline-block;white-space:nowrap;width:118.10px;transform:scaleX(0.791);transform-origin:0 50%">プロジェクトカレンダー</span></span></div></div></div>
<div class="card" style="left:593px;top:541px"><svg class="ic" viewBox="0 0 40 40"><rect x="1" y="3" width="38" height="7" fill="#0f7bff"/><rect x="1" y="12.500" width="17.500" height="7" fill="#f7666b"/><path d="M1 12.500L18.500 19.500" stroke="#fff" stroke-width="1.600"/><rect x="21" y="12.500" width="18" height="7" fill="#b5d6fb"/><rect x="1" y="22" width="17.500" height="7" fill="#b5d6fb"/><rect x="21" y="22" width="18" height="7" fill="#b5d6fb"/><rect x="1" y="31.500" width="17.500" height="6.500" fill="#b5d6fb"/><rect x="21" y="31.500" width="18" height="6.500" fill="#b5d6fb"/></svg><div class="t"><div><span style="white-space:nowrap">関係<span style="display:inline-block;white-space:nowrap;width:65.18px;transform:scaleX(0.862);transform-origin:0 50%">マトリックス</span></span></div></div></div>
<div class="card" style="left:852px;top:541px"><svg class="ic" viewBox="0 0 40 40"><path d="M7 2v36M1 11h12M1 29h12" stroke="#9aa6b5" stroke-width=".8" stroke-dasharray="1.500 1.500" fill="none"/><rect x="17.500" y="5.500" width="23" height="29" rx="1.500" fill="#e7f1fe" stroke="#b5d6fb" stroke-width="1.300"/><circle cx="22" cy="11" r="1.300" fill="#f7666b"/><circle cx="25.500" cy="11" r="1.300" fill="#0f7bff"/><path d="M29.500 11h8" stroke="#0f7bff" stroke-width="1.500"/><circle cx="22" cy="20" r="1.300" fill="#0f7bff"/><circle cx="25.500" cy="20" r="1.300" fill="#0f7bff"/><path d="M29.500 20h8" stroke="#0f7bff" stroke-width="1.500"/><path d="M20.500 27h17M20.500 30.500h17" stroke="#b5d6fb" stroke-width="1.300"/><path d="M7 14.500l6.500 11h-13z" fill="#f7666b"/><path d="M7 18v3.800M7 23.200v1.300" stroke="#fff" stroke-width="1.300"/></svg><div class="t"><div><span style="white-space:nowrap"><span style="display:inline-block;white-space:nowrap;width:100.40px;transform:scaleX(0.839);transform-origin:0 50%">リスクマネジメント</span></span></div></div></div>
<div class="card" style="left:1111px;top:541px"><svg class="ic" viewBox="0 0 40 40"><path d="M20 14l-9 12M20 14l9 12" stroke="#666" stroke-width=".9" fill="none"/><rect x="9" y="1" width="22" height="4" fill="#0f7bff"/><g fill="#b5d6fb"><rect x="9" y="6" width="10.500" height="3"/><rect x="20.500" y="6" width="10.500" height="3"/><rect x="9" y="10" width="10.500" height="3"/><rect x="20.500" y="10" width="10.500" height="3"/></g><rect x="1" y="27" width="16" height="4" fill="#0f7bff"/><g fill="#b5d6fb"><rect x="1" y="32" width="7.500" height="3"/><rect x="9.500" y="32" width="7.500" height="3"/><rect x="1" y="36" width="7.500" height="3"/><rect x="9.500" y="36" width="7.500" height="3"/></g><rect x="23.500" y="27" width="16" height="4" fill="#f7666b"/><g fill="#b5d6fb"><rect x="23.500" y="32" width="7.500" height="3"/><rect x="32" y="32" width="7.500" height="3"/><rect x="23.500" y="36" width="7.500" height="3"/><rect x="32" y="36" width="7.500" height="3"/></g></svg><div class="t"><div><span style="white-space:nowrap"><span style="letter-spacing:-1.07px">PERT図</span></span></div></div></div>
<div class="card" style="left:1370px;top:541px"><svg class="ic" viewBox="0 0 40 40"><path d="M9.500 19.500L14.500 15M20.500 9.500L24 5.200H33M20.500 15.500L23.500 19.500H33M9.500 26.500L14.500 34H33" stroke="#666" stroke-width=".9" fill="none"/><rect x="1.500" y="18.500" width="8" height="8" fill="#f7666b"/><circle cx="17.500" cy="12.500" r="4.300" fill="#0f7bff"/><path d="M39.500 .5v9l-6.500-4.500z" fill="#0f7bff"/><path d="M39.500 15v9L33 19.500z" fill="#b5d6fb"/><path d="M39.500 29.500v9L33 34z" fill="#b5d6fb"/></svg><div class="t"><div><span style="white-space:nowrap"><span style="letter-spacing:0.23px">決定木</span></span></div></div></div>
<div class="card" style="left:1629px;top:541px"><svg class="ic" viewBox="0 0 40 40"><rect x="1" y="2" width="4" height="8" fill="#0f7bff"/><rect x="1" y="12" width="4" height="7" fill="#b5d6fb"/><rect x="1" y="21" width="4" height="7" fill="#b5d6fb"/><rect x="1" y="30" width="4" height="7" fill="#b5d6fb"/></svg><div class="t"><div></div></div></div>
<div class="card" style="left:334px;top:641px"><svg class="ic" viewBox="0 0 40 40"><path d="M20 14l-11 13M20 14l11 13" stroke="#666" stroke-width=".9" fill="none"/><rect x="10" y="2" width="21" height="4.500" fill="#f7666b"/><g fill="#b5d6fb"><rect x="10" y="7.500" width="10" height="4.500"/><rect x="21" y="7.500" width="10" height="4.500"/></g><rect x="1" y="27.500" width="17.500" height="4.500" fill="#0f7bff"/><g fill="#b5d6fb"><rect x="1" y="33" width="8.200" height="5"/><rect x="10.300" y="33" width="8.200" height="5"/></g><rect x="22" y="27.500" width="17.500" height="4.500" fill="#0f7bff"/><g fill="#b5d6fb"><rect x="22" y="33" width="8.200" height="5"/><rect x="31.300" y="33" width="8.200" height="5"/></g></svg><div class="t"><div><span style="white-space:nowrap"><span style="letter-spacing:-0.77px">WBS図</span></span></div></div></div>
<div class="card" style="left:593px;top:641px"><svg class="ic" viewBox="0 0 40 40"><defs><linearGradient id="pj" x1="0" y1="0" x2="0" y2="1"><stop offset="0" stop-color="#ffca12"/><stop offset="1" stop-color="#ffa800"/></linearGradient></defs><rect width="40" height="40" rx="9" fill="url(#pj)"/><path d="M11 12.500h12.500a5 5 0 0 1 0 10H15.500a4.500 4.500 0 0 0 0 9H19" fill="none" stroke="#fff" stroke-width="3.600" stroke-linecap="round"/><rect x="22.500" y="29.700" width="8" height="3.600" rx="1.800" fill="#ffe08a"/></svg><div class="abs" style="left:89px;top:12px;font-size:15px;line-height:20px;white-space:nowrap"><span style="white-space:nowrap"><span style="letter-spacing:-0.13px">EdrawProj</span></span></div><div class="abs" style="left:89px;top:37px;font-size:14px;line-height:20px;white-space:nowrap;color:#7f8186"><span style="white-space:nowrap"><span style="display:inline-block;white-space:nowrap;width:112.73px;transform:scaleX(0.819);transform-origin:0 50%">プロフェッショナルなガ</span>...</span></div></div>
<div class="redbox" style="left:576px;top:422px;width:263px;height:105px"></div>


<!--T0-->
<h2 style="top:765.5px"><span style="white-space:nowrap"><span style="display:inline-block;white-space:nowrap;width:148.00px;transform:scaleX(0.791);transform-origin:0 50%">ローカルテンプレート</span></span></h2>
<div class="tpl" style="left:334px;top:821px"><div class="th"><svg width="209" height="139" viewBox="0 0 209 139"><text x="103.5" y="20.5" font-size="4.6" font-weight="bold" text-anchor="middle" fill="#1f1f1f" font-family="Liberation Sans,sans-serif">2021 Project Gantt Chart</text><rect x="25.6" y="27.7" width="159.0" height="92.6" fill="#fff" stroke="#e3e3e3" stroke-width=".3"/><rect x="25.6" y="27.7" width="159.0" height="8.3" fill="#f6f6f6"/><path d="M31.5 27.7L31.5 120.3" stroke="#e3e3e3" stroke-width="0.3"/><path d="M60.0 27.7L60.0 120.3" stroke="#e3e3e3" stroke-width="0.3"/><path d="M74.0 27.7L74.0 120.3" stroke="#e3e3e3" stroke-width="0.3"/><path d="M88.0 27.7L88.0 120.3" stroke="#e3e3e3" stroke-width="0.3"/><path d="M101.5 27.7L101.5 120.3" stroke="#e3e3e3" stroke-width="0.3"/><path d="M117.2 27.7L117.2 120.3" stroke="#e3e3e3" stroke-width="0.3"/><path d="M25.6 36.0L184.6 36.0" stroke="#e3e3e3" stroke-width="0.3" stroke-dasharray="1 .6"/><path d="M25.6 44.3L184.6 44.3" stroke="#e3e3e3" stroke-width="0.3" stroke-dasharray="1 .6"/><path d="M25.6 52.9L184.6 52.9" stroke="#e3e3e3" stroke-width="0.3" stroke-dasharray="1 .6"/><path d="M25.6 62.3L184.6 62.3" stroke="#e3e3e3" stroke-width="0.3" stroke-dasharray="1 .6"/><path d="M25.6 72.5L184.6 72.5" stroke="#e3e3e3" stroke-width="0.3" stroke-dasharray="1 .6"/><path d="M25.6 81.8L184.6 81.8" stroke="#e3e3e3" stroke-width="0.3" stroke-dasharray="1 .6"/><path d="M25.6 90.5L184.6 90.5" stroke="#e3e3e3" stroke-width="0.3" stroke-dasharray="1 .6"/><path d="M25.6 99.0L184.6 99.0" stroke="#e3e3e3" stroke-width="0.3" stroke-dasharray="1 .6"/><path d="M25.6 108.5L184.6 108.5" stroke="#e3e3e3" stroke-width="0.3" stroke-dasharray="1 .6"/><rect x="27.8" y="31.5" width="1.1" height="0.8" fill="#a5a5a5"/><rect x="36.8" y="31.5" width="12.1" height="0.8" fill="#a5a5a5"/><rect x="63.0" y="31.5" width="5.5" height="0.8" fill="#a5a5a5"/><rect x="77.0" y="31.5" width="5.5" height="0.8" fill="#a5a5a5"/><rect x="91.2" y="31.5" width="4.4" height="0.8" fill="#a5a5a5"/><rect x="105.3" y="31.5" width="5.0" height="0.8" fill="#a5a5a5"/><rect x="27.5" y="39.6" width="1.3" height="0.9" fill="#b0b0b0"/><rect x="33.5" y="39.6" width="16.9" height="0.9" fill="#b0b0b0"/><rect x="61.5" y="39.6" width="7.0" height="0.9" fill="#b0b0b0"/><rect x="75.5" y="39.6" width="7.9" height="0.9" fill="#b0b0b0"/><rect x="90.0" y="39.6" width="6.4" height="0.9" fill="#b0b0b0"/><rect x="104.0" y="39.6" width="5.2" height="0.9" fill="#b0b0b0"/><rect x="27.5" y="48.0" width="1.1" height="0.9" fill="#b0b0b0"/><rect x="33.5" y="48.0" width="19.5" height="0.9" fill="#b0b0b0"/><rect x="61.5" y="48.0" width="6.5" height="0.9" fill="#b0b0b0"/><rect x="75.5" y="48.0" width="6.4" height="0.9" fill="#b0b0b0"/><rect x="90.0" y="48.0" width="7.6" height="0.9" fill="#b0b0b0"/><rect x="104.0" y="48.0" width="6.6" height="0.9" fill="#b0b0b0"/><rect x="27.5" y="56.8" width="1.8" height="0.9" fill="#b0b0b0"/><rect x="33.5" y="56.8" width="16.3" height="0.9" fill="#b0b0b0"/><rect x="61.5" y="56.8" width="8.1" height="0.9" fill="#b0b0b0"/><rect x="75.5" y="56.8" width="6.1" height="0.9" fill="#b0b0b0"/><rect x="90.0" y="56.8" width="6.4" height="0.9" fill="#b0b0b0"/><rect x="104.0" y="56.8" width="8.1" height="0.9" fill="#b0b0b0"/><rect x="27.5" y="67.0" width="1.5" height="0.9" fill="#b0b0b0"/><rect x="33.5" y="67.0" width="18.6" height="0.9" fill="#b0b0b0"/><rect x="61.5" y="67.0" width="8.2" height="0.9" fill="#b0b0b0"/><rect x="75.5" y="67.0" width="5.8" height="0.9" fill="#b0b0b0"/><rect x="90.0" y="67.0" width="6.8" height="0.9" fill="#b0b0b0"/><rect x="104.0" y="67.0" width="7.1" height="0.9" fill="#b0b0b0"/><rect x="27.5" y="77.0" width="1.3" height="0.9" fill="#b0b0b0"/><rect x="33.5" y="77.0" width="12.4" height="0.9" fill="#b0b0b0"/><rect x="61.5" y="77.0" width="9.0" height="0.9" fill="#b0b0b0"/><rect x="75.5" y="77.0" width="7.4" height="0.9" fill="#b0b0b0"/><rect x="90.0" y="77.0" width="6.7" height="0.9" fill="#b0b0b0"/><rect x="104.0" y="77.0" width="8.1" height="0.9" fill="#b0b0b0"/><rect x="27.5" y="85.8" width="1.7" height="0.9" fill="#b0b0b0"/><rect x="33.5" y="85.8" width="20.2" height="0.9" fill="#b0b0b0"/><rect x="61.5" y="85.8" width="7.1" height="0.9" fill="#b0b0b0"/><rect x="75.5" y="85.8" width="8.7" height="0.9" fill="#b0b0b0"/><rect x="90.0" y="85.8" width="5.8" height="0.9" fill="#b0b0b0"/><rect x="104.0" y="85.8" width="8.3" height="0.9" fill="#b0b0b0"/><rect x="27.5" y="94.3" width="1.8" height="0.9" fill="#b0b0b0"/><rect x="33.5" y="94.3" width="13.0" height="0.9" fill="#b0b0b0"/><rect x="61.5" y="94.3" width="6.0" height="0.9" fill="#b0b0b0"/><rect x="75.5" y="94.3" width="6.4" height="0.9" fill="#b0b0b0"/><rect x="90.0" y="94.3" width="7.5" height="0.9" fill="#b0b0b0"/><rect x="104.0" y="94.3" width="6.5" height="0.9" fill="#b0b0b0"/><rect x="27.5" y="102.8" width="1.6" height="0.9" fill="#b0b0b0"/><rect x="33.5" y="102.8" width="14.7" height="0.9" fill="#b0b0b0"/><rect x="61.5" y="102.8" width="7.5" height="0.9" fill="#b0b0b0"/><rect x="75.5" y="102.8" width="7.0" height="0.9" fill="#b0b0b0"/><rect x="90.0" y="102.8" width="5.5" height="0.9" fill="#b0b0b0"/><rect x="104.0" y="102.8" width="7.1" height="0.9" fill="#b0b0b0"/><rect x="27.5" y="113.2" width="1.6" height="0.9" fill="#b0b0b0"/><rect x="33.5" y="113.2" width="20.1" height="0.9" fill="#b0b0b0"/><rect x="61.5" y="113.2" width="8.2" height="0.9" fill="#b0b0b0"/><rect x="75.5" y="113.2" width="9.2" height="0.9" fill="#b0b0b0"/><rect x="90.0" y="113.2" width="7.1" height="0.9" fill="#b0b0b0"/><rect x="104.0" y="113.2" width="8.5" height="0.9" fill="#b0b0b0"/><rect x="119.0" y="33.2" width="1.2" height="0.8" fill="#e88"/><rect x="122.0" y="33.2" width="1.2" height="0.8" fill="#b9b9b9"/><rect x="125.0" y="33.2" width="1.2" height="0.8" fill="#b9b9b9"/><rect x="128.0" y="33.2" width="1.2" height="0.8" fill="#b9b9b9"/><rect x="131.0" y="33.2" width="1.2" height="0.8" fill="#b9b9b9"/><rect x="134.0" y="33.2" width="1.2" height="0.8" fill="#b9b9b9"/><rect x="137.0" y="33.2" width="1.2" height="0.8" fill="#b9b9b9"/><rect x="140.0" y="33.2" width="1.2" height="0.8" fill="#e88"/><rect x="143.0" y="33.2" width="1.2" height="0.8" fill="#b9b9b9"/><rect x="146.0" y="33.2" width="1.2" height="0.8" fill="#b9b9b9"/><rect x="149.0" y="33.2" width="1.2" height="0.8" fill="#b9b9b9"/><rect x="152.0" y="33.2" width="1.2" height="0.8" fill="#b9b9b9"/><rect x="155.0" y="33.2" width="1.2" height="0.8" fill="#b9b9b9"/><rect x="158.0" y="33.2" width="1.2" height="0.8" fill="#b9b9b9"/><rect x="161.0" y="33.2" width="1.2" height="0.8" fill="#e88"/><rect x="164.0" y="33.2" width="1.2" height="0.8" fill="#b9b9b9"/><rect x="167.0" y="33.2" width="1.2" height="0.8" fill="#b9b9b9"/><rect x="170.0" y="33.2" width="1.2" height="0.8" fill="#b9b9b9"/><rect x="173.0" y="33.2" width="1.2" height="0.8" fill="#b9b9b9"/><rect x="176.0" y="33.2" width="1.2" height="0.8" fill="#b9b9b9"/><rect x="179.0" y="33.2" width="1.2" height="0.8" fill="#b9b9b9"/><rect x="182.0" y="33.2" width="1.2" height="0.8" fill="#e88"/><rect x="127.0" y="29.5" width="8.0" height="0.8" fill="#aaa"/><rect x="160.0" y="29.5" width="10.0" height="0.8" fill="#aaa"/><rect x="133.0" y="36.0" width="8.0" height="84.0" fill="#f7f7f7"/><rect x="158.0" y="36.0" width="6.0" height="84.0" fill="#f7f7f7"/><rect x="125.6" y="39.0" width="46.4" height="2.2" rx="1" fill="#f4595d"/><rect x="172.0" y="39.0" width="1.5" height="2.2" rx="1" fill="#fbc56a"/><rect x="125.6" y="47.4" width="34.4" height="2.2" rx="1" fill="#f4595d"/><rect x="160.0" y="47.4" width="13.5" height="2.2" rx="1" fill="#fbc56a"/><rect x="125.6" y="56.1" width="32.8" height="2.2" rx="1" fill="#f4595d"/><rect x="158.4" y="56.1" width="15.1" height="2.2" rx="1" fill="#fbc56a"/><rect x="125.6" y="66.3" width="32.8" height="2.2" rx="1" fill="#f4595d"/><rect x="158.4" y="66.3" width="15.1" height="2.2" rx="1" fill="#fbc56a"/><rect x="125.6" y="76.4" width="34.4" height="2.2" rx="1" fill="#f4595d"/><rect x="160.0" y="76.4" width="13.5" height="2.2" rx="1" fill="#fbc56a"/><rect x="125.6" y="85.1" width="32.8" height="2.2" rx="1" fill="#f4595d"/><rect x="158.4" y="85.1" width="15.1" height="2.2" rx="1" fill="#fbc56a"/><rect x="125.6" y="93.7" width="32.8" height="2.2" rx="1" fill="#f4595d"/><rect x="158.4" y="93.7" width="15.1" height="2.2" rx="1" fill="#fbc56a"/><rect x="125.6" y="102.1" width="32.8" height="2.2" rx="1" fill="#f4595d"/><rect x="158.4" y="102.1" width="15.1" height="2.2" rx="1" fill="#fbc56a"/><rect x="125.6" y="112.6" width="32.8" height="2.2" rx="1" fill="#f4595d"/><rect x="158.4" y="112.6" width="15.1" height="2.2" rx="1" fill="#fbc56a"/></svg></div><div class="n"><span style="white-space:nowrap">2021 <span style="display:inline-block;white-space:nowrap;width:144.45px;transform:scaleX(0.806);transform-origin:0 50%">プロジェクト･ガントチャート</span></span></div></div>
<div class="tpl" style="left:593px;top:821px"><div class="th"><svg width="209" height="139" viewBox="0 0 209 139"><text x="103.3" y="17.2" font-size="4.6" font-weight="bold" text-anchor="middle" fill="#1f1f1f" font-family="Liberation Sans,sans-serif">2021 Work Plan Gantt Chart</text><rect x="23.7" y="22.4" width="160.8" height="101.6" fill="#fff" stroke="#e3e3e3" stroke-width=".3"/><rect x="23.7" y="22.4" width="160.8" height="5.3" fill="#f6f6f6"/><path d="M28.5 22.4L28.5 124.0" stroke="#e3e3e3" stroke-width="0.3"/><path d="M58.0 22.4L58.0 124.0" stroke="#e3e3e3" stroke-width="0.3"/><path d="M72.0 22.4L72.0 124.0" stroke="#e3e3e3" stroke-width="0.3"/><path d="M87.0 22.4L87.0 124.0" stroke="#e3e3e3" stroke-width="0.3"/><path d="M100.0 22.4L100.0 124.0" stroke="#e3e3e3" stroke-width="0.3"/><path d="M116.5 22.4L116.5 124.0" stroke="#e3e3e3" stroke-width="0.3"/><path d="M23.7 27.7L184.5 27.7" stroke="#e3e3e3" stroke-width="0.3" stroke-dasharray="1 .6"/><path d="M23.7 33.8L184.5 33.8" stroke="#e3e3e3" stroke-width="0.3" stroke-dasharray="1 .6"/><path d="M23.7 40.3L184.5 40.3" stroke="#e3e3e3" stroke-width="0.3" stroke-dasharray="1 .6"/><path d="M23.7 46.7L184.5 46.7" stroke="#e3e3e3" stroke-width="0.3" stroke-dasharray="1 .6"/><path d="M23.7 53.7L184.5 53.7" stroke="#e3e3e3" stroke-width="0.3" stroke-dasharray="1 .6"/><path d="M23.7 60.6L184.5 60.6" stroke="#e3e3e3" stroke-width="0.3" stroke-dasharray="1 .6"/><path d="M23.7 66.3L184.5 66.3" stroke="#e3e3e3" stroke-width="0.3" stroke-dasharray="1 .6"/><path d="M23.7 72.0L184.5 72.0" stroke="#e3e3e3" stroke-width="0.3" stroke-dasharray="1 .6"/><path d="M23.7 78.9L184.5 78.9" stroke="#e3e3e3" stroke-width="0.3" stroke-dasharray="1 .6"/><path d="M23.7 86.4L184.5 86.4" stroke="#e3e3e3" stroke-width="0.3" stroke-dasharray="1 .6"/><path d="M23.7 93.3L184.5 93.3" stroke="#e3e3e3" stroke-width="0.3" stroke-dasharray="1 .6"/><path d="M23.7 99.1L184.5 99.1" stroke="#e3e3e3" stroke-width="0.3" stroke-dasharray="1 .6"/><path d="M23.7 105.0L184.5 105.0" stroke="#e3e3e3" stroke-width="0.3" stroke-dasharray="1 .6"/><path d="M23.7 111.8L184.5 111.8" stroke="#e3e3e3" stroke-width="0.3" stroke-dasharray="1 .6"/><path d="M23.7 118.6L184.5 118.6" stroke="#e3e3e3" stroke-width="0.3" stroke-dasharray="1 .6"/><rect x="25.3" y="24.6" width="1.1" height="0.8" fill="#a5a5a5"/><rect x="34.3" y="24.6" width="12.1" height="0.8" fill="#a5a5a5"/><rect x="61.4" y="24.6" width="5.0" height="0.8" fill="#a5a5a5"/><rect x="75.5" y="24.6" width="5.5" height="0.8" fill="#a5a5a5"/><rect x="90.0" y="24.6" width="3.9" height="0.8" fill="#a5a5a5"/><rect x="104.9" y="24.6" width="3.3" height="0.8" fill="#a5a5a5"/><rect x="25.0" y="30.1" width="1.6" height="0.9" fill="#b0b0b0"/><rect x="31.0" y="30.1" width="18.6" height="0.9" fill="#b0b0b0"/><rect x="60.0" y="30.1" width="7.8" height="0.9" fill="#b0b0b0"/><rect x="74.0" y="30.1" width="9.3" height="0.9" fill="#b0b0b0"/><rect x="89.0" y="30.1" width="5.9" height="0.9" fill="#b0b0b0"/><rect x="104.0" y="30.1" width="5.5" height="0.9" fill="#b0b0b0"/><rect x="25.0" y="36.7" width="1.1" height="0.9" fill="#b0b0b0"/><rect x="31.0" y="36.7" width="16.2" height="0.9" fill="#b0b0b0"/><rect x="60.0" y="36.7" width="8.3" height="0.9" fill="#b0b0b0"/><rect x="74.0" y="36.7" width="8.1" height="0.9" fill="#b0b0b0"/><rect x="89.0" y="36.7" width="6.4" height="0.9" fill="#b0b0b0"/><rect x="104.0" y="36.7" width="3.6" height="0.9" fill="#b0b0b0"/><rect x="25.0" y="43.1" width="1.5" height="0.9" fill="#b0b0b0"/><rect x="31.0" y="43.1" width="14.3" height="0.9" fill="#b0b0b0"/><rect x="60.0" y="43.1" width="6.9" height="0.9" fill="#b0b0b0"/><rect x="74.0" y="43.1" width="7.8" height="0.9" fill="#b0b0b0"/><rect x="89.0" y="43.1" width="3.9" height="0.9" fill="#b0b0b0"/><rect x="104.0" y="43.1" width="3.8" height="0.9" fill="#b0b0b0"/><rect x="25.0" y="49.4" width="1.3" height="0.9" fill="#b0b0b0"/><rect x="31.0" y="49.4" width="20.2" height="0.9" fill="#b0b0b0"/><rect x="60.0" y="49.4" width="7.7" height="0.9" fill="#b0b0b0"/><rect x="74.0" y="49.4" width="6.1" height="0.9" fill="#b0b0b0"/><rect x="89.0" y="49.4" width="6.1" height="0.9" fill="#b0b0b0"/><rect x="104.0" y="49.4" width="3.6" height="0.9" fill="#b0b0b0"/><rect x="25.0" y="57.1" width="1.6" height="0.9" fill="#b0b0b0"/><rect x="31.0" y="57.1" width="13.2" height="0.9" fill="#b0b0b0"/><rect x="60.0" y="57.1" width="5.0" height="0.9" fill="#b0b0b0"/><rect x="74.0" y="57.1" width="9.0" height="0.9" fill="#b0b0b0"/><rect x="89.0" y="57.1" width="4.4" height="0.9" fill="#b0b0b0"/><rect x="104.0" y="57.1" width="3.8" height="0.9" fill="#b0b0b0"/><rect x="25.0" y="63.2" width="1.9" height="0.9" fill="#b0b0b0"/><rect x="31.0" y="63.2" width="19.8" height="0.9" fill="#b0b0b0"/><rect x="60.0" y="63.2" width="6.0" height="0.9" fill="#b0b0b0"/><rect x="74.0" y="63.2" width="9.3" height="0.9" fill="#b0b0b0"/><rect x="89.0" y="63.2" width="5.4" height="0.9" fill="#b0b0b0"/><rect x="104.0" y="63.2" width="4.9" height="0.9" fill="#b0b0b0"/><rect x="25.0" y="68.5" width="1.3" height="0.9" fill="#b0b0b0"/><rect x="31.0" y="68.5" width="20.4" height="0.9" fill="#b0b0b0"/><rect x="60.0" y="68.5" width="7.4" height="0.9" fill="#b0b0b0"/><rect x="74.0" y="68.5" width="9.4" height="0.9" fill="#b0b0b0"/><rect x="89.0" y="68.5" width="6.4" height="0.9" fill="#b0b0b0"/><rect x="104.0" y="68.5" width="4.0" height="0.9" fill="#b0b0b0"/><rect x="25.0" y="74.6" width="1.4" height="0.9" fill="#b0b0b0"/><rect x="31.0" y="74.6" width="13.6" height="0.9" fill="#b0b0b0"/><rect x="60.0" y="74.6" width="5.5" height="0.9" fill="#b0b0b0"/><rect x="74.0" y="74.6" width="5.8" height="0.9" fill="#b0b0b0"/><rect x="89.0" y="74.6" width="4.7" height="0.9" fill="#b0b0b0"/><rect x="104.0" y="74.6" width="4.7" height="0.9" fill="#b0b0b0"/><rect x="25.0" y="82.2" width="1.1" height="0.9" fill="#b0b0b0"/><rect x="31.0" y="82.2" width="18.1" height="0.9" fill="#b0b0b0"/><rect x="60.0" y="82.2" width="6.2" height="0.9" fill="#b0b0b0"/><rect x="74.0" y="82.2" width="6.7" height="0.9" fill="#b0b0b0"/><rect x="89.0" y="82.2" width="6.1" height="0.9" fill="#b0b0b0"/><rect x="104.0" y="82.2" width="4.5" height="0.9" fill="#b0b0b0"/><rect x="25.0" y="89.6" width="1.4" height="0.9" fill="#b0b0b0"/><rect x="31.0" y="89.6" width="16.3" height="0.9" fill="#b0b0b0"/><rect x="60.0" y="89.6" width="7.5" height="0.9" fill="#b0b0b0"/><rect x="74.0" y="89.6" width="5.7" height="0.9" fill="#b0b0b0"/><rect x="89.0" y="89.6" width="6.6" height="0.9" fill="#b0b0b0"/><rect x="104.0" y="89.6" width="3.4" height="0.9" fill="#b0b0b0"/><rect x="25.0" y="96.0" width="1.7" height="0.9" fill="#b0b0b0"/><rect x="31.0" y="96.0" width="19.5" height="0.9" fill="#b0b0b0"/><rect x="60.0" y="96.0" width="5.0" height="0.9" fill="#b0b0b0"/><rect x="74.0" y="96.0" width="8.7" height="0.9" fill="#b0b0b0"/><rect x="89.0" y="96.0" width="4.9" height="0.9" fill="#b0b0b0"/><rect x="104.0" y="96.0" width="4.7" height="0.9" fill="#b0b0b0"/><rect x="25.0" y="101.3" width="1.1" height="0.9" fill="#b0b0b0"/><rect x="31.0" y="101.3" width="12.5" height="0.9" fill="#b0b0b0"/><rect x="60.0" y="101.3" width="5.6" height="0.9" fill="#b0b0b0"/><rect x="74.0" y="101.3" width="9.3" height="0.9" fill="#b0b0b0"/><rect x="89.0" y="101.3" width="4.4" height="0.9" fill="#b0b0b0"/><rect x="104.0" y="101.3" width="5.1" height="0.9" fill="#b0b0b0"/><rect x="25.0" y="107.7" width="1.8" height="0.9" fill="#b0b0b0"/><rect x="31.0" y="107.7" width="20.4" height="0.9" fill="#b0b0b0"/><rect x="60.0" y="107.7" width="6.2" height="0.9" fill="#b0b0b0"/><rect x="74.0" y="107.7" width="6.9" height="0.9" fill="#b0b0b0"/><rect x="89.0" y="107.7" width="5.3" height="0.9" fill="#b0b0b0"/><rect x="104.0" y="107.7" width="5.2" height="0.9" fill="#b0b0b0"/><rect x="25.0" y="115.1" width="1.2" height="0.9" fill="#b0b0b0"/><rect x="31.0" y="115.1" width="18.7" height="0.9" fill="#b0b0b0"/><rect x="60.0" y="115.1" width="7.8" height="0.9" fill="#b0b0b0"/><rect x="74.0" y="115.1" width="8.9" height="0.9" fill="#b0b0b0"/><rect x="89.0" y="115.1" width="4.0" height="0.9" fill="#b0b0b0"/><rect x="104.0" y="115.1" width="5.6" height="0.9" fill="#b0b0b0"/><rect x="25.0" y="121.2" width="1.2" height="0.9" fill="#b0b0b0"/><rect x="31.0" y="121.2" width="15.1" height="0.9" fill="#b0b0b0"/><rect x="60.0" y="121.2" width="7.1" height="0.9" fill="#b0b0b0"/><rect x="74.0" y="121.2" width="9.2" height="0.9" fill="#b0b0b0"/><rect x="89.0" y="121.2" width="4.8" height="0.9" fill="#b0b0b0"/><rect x="104.0" y="121.2" width="5.5" height="0.9" fill="#b0b0b0"/><rect x="127.0" y="26.5" width="3.0" height="0.7" fill="#aaa"/><rect x="144.0" y="26.5" width="3.0" height="0.7" fill="#aaa"/><rect x="160.0" y="26.5" width="3.0" height="0.7" fill="#aaa"/><rect x="177.0" y="26.5" width="3.0" height="0.7" fill="#aaa"/><rect x="142.0" y="23.5" width="10.0" height="0.7" fill="#aaa"/><rect x="126.7" y="30.0" width="12.2" height="1" rx="0.5" fill="#bcd6f5"/><rect x="126.0" y="36.1" width="4.6" height="2.2" rx="1.0" fill="#aab1ec"/><rect x="130.0" y="42.4" width="3.6" height="2.2" rx="1.0" fill="#aab1ec"/><rect x="133.1" y="48.8" width="1.5" height="2.2" rx="1.0" fill="#aab1ec"/><rect x="134.1" y="56.4" width="2.0" height="2.2" rx="1.0" fill="#aab1ec"/><rect x="135.6" y="62.5" width="3.3" height="2.2" rx="1.0" fill="#aab1ec"/><rect x="138.2" y="68.5" width="19.8" height="1" rx="0.5" fill="#bcd6f5"/><rect x="138.2" y="74.0" width="4.6" height="2.2" rx="1.0" fill="#b4b4e0"/><rect x="142.0" y="81.6" width="5.6" height="2.2" rx="1.0" fill="#b4b4e0"/><rect x="146.8" y="88.8" width="8.1" height="2.6" rx="1.0" fill="#b4b4e0"/><rect x="153.9" y="95.3" width="4.3" height="2.2" rx="1.0" fill="#b4b4e0"/><rect x="158.0" y="101.3" width="10.2" height="1" rx="0.5" fill="#f3a3a6"/><rect x="157.8" y="107.0" width="5.6" height="2.2" rx="1.0" fill="#f3a3a6"/><rect x="162.3" y="114.4" width="6.1" height="2.2" rx="1.0" fill="#f3a3a6"/><rect x="121.1" y="120.6" width="63.1" height="2" rx="1.0" fill="#fbd384"/></svg></div><div class="n"><span style="white-space:nowrap">2021年作業計画<span style="display:inline-block;white-space:nowrap;width:73.72px;transform:scaleX(0.807);transform-origin:0 50%">ガントチャート</span></span></div></div>
<div class="tpl" style="left:852px;top:821px"><div class="th"><svg width="209" height="139" viewBox="0 0 209 139"><text x="109" y="15.2" font-size="2.6" font-weight="normal" text-anchor="middle" fill="#666" font-family="Liberation Sans,sans-serif">进度计划</text><rect x="13.0" y="17.8" width="183.0" height="82.7" fill="#fff" stroke="#e3e3e3" stroke-width=".3"/><rect x="13.0" y="17.8" width="183.0" height="4.2" fill="#f6f6f6"/><path d="M16.5 17.8L16.5 100.5" stroke="#e3e3e3" stroke-width="0.3"/><path d="M24.5 17.8L24.5 100.5" stroke="#e3e3e3" stroke-width="0.3"/><path d="M61.0 17.8L61.0 100.5" stroke="#e3e3e3" stroke-width="0.3"/><path d="M76.0 17.8L76.0 100.5" stroke="#e3e3e3" stroke-width="0.3"/><path d="M85.0 17.8L85.0 100.5" stroke="#e3e3e3" stroke-width="0.3"/><path d="M95.5 17.8L95.5 100.5" stroke="#e3e3e3" stroke-width="0.3"/><path d="M13.0 22.0L196.0 22.0" stroke="#e3e3e3" stroke-width="0.3" stroke-dasharray="1 .6"/><path d="M13.0 29.1L196.0 29.1" stroke="#e3e3e3" stroke-width="0.3" stroke-dasharray="1 .6"/><path d="M13.0 35.5L196.0 35.5" stroke="#e3e3e3" stroke-width="0.3" stroke-dasharray="1 .6"/><path d="M13.0 42.0L196.0 42.0" stroke="#e3e3e3" stroke-width="0.3" stroke-dasharray="1 .6"/><path d="M13.0 48.5L196.0 48.5" stroke="#e3e3e3" stroke-width="0.3" stroke-dasharray="1 .6"/><path d="M13.0 55.0L196.0 55.0" stroke="#e3e3e3" stroke-width="0.3" stroke-dasharray="1 .6"/><path d="M13.0 61.5L196.0 61.5" stroke="#e3e3e3" stroke-width="0.3" stroke-dasharray="1 .6"/><path d="M13.0 67.9L196.0 67.9" stroke="#e3e3e3" stroke-width="0.3" stroke-dasharray="1 .6"/><path d="M13.0 74.4L196.0 74.4" stroke="#e3e3e3" stroke-width="0.3" stroke-dasharray="1 .6"/><path d="M13.0 80.9L196.0 80.9" stroke="#e3e3e3" stroke-width="0.3" stroke-dasharray="1 .6"/><path d="M13.0 87.4L196.0 87.4" stroke="#e3e3e3" stroke-width="0.3" stroke-dasharray="1 .6"/><path d="M13.0 93.8L196.0 93.8" stroke="#e3e3e3" stroke-width="0.3" stroke-dasharray="1 .6"/><rect x="18.9" y="19.5" width="1.7" height="0.8" fill="#a5a5a5"/><rect x="31.3" y="19.5" width="12.1" height="0.8" fill="#a5a5a5"/><rect x="64.2" y="19.5" width="6.1" height="0.8" fill="#a5a5a5"/><rect x="77.8" y="19.5" width="2.8" height="0.8" fill="#a5a5a5"/><rect x="18.5" y="25.5" width="2.2" height="0.9" fill="#555"/><rect x="28.0" y="25.5" width="15.4" height="0.9" fill="#444"/><rect x="62.5" y="25.5" width="6.7" height="0.9" fill="#555"/><rect x="77.0" y="25.5" width="4.5" height="0.9" fill="#555"/><rect x="18.5" y="31.9" width="1.7" height="0.9" fill="#555"/><rect x="28.0" y="31.9" width="16.5" height="0.9" fill="#444"/><rect x="62.5" y="31.9" width="10.0" height="0.9" fill="#555"/><rect x="77.0" y="31.9" width="2.9" height="0.9" fill="#555"/><rect x="18.5" y="38.2" width="2.3" height="0.9" fill="#555"/><rect x="28.0" y="38.2" width="17.5" height="0.9" fill="#444"/><rect x="62.5" y="38.2" width="6.2" height="0.9" fill="#555"/><rect x="77.0" y="38.2" width="3.5" height="0.9" fill="#555"/><rect x="18.5" y="44.8" width="2.5" height="0.9" fill="#555"/><rect x="28.0" y="44.8" width="16.1" height="0.9" fill="#444"/><rect x="62.5" y="44.8" width="9.2" height="0.9" fill="#555"/><rect x="77.0" y="44.8" width="3.1" height="0.9" fill="#555"/><rect x="18.5" y="51.2" width="1.9" height="0.9" fill="#555"/><rect x="28.0" y="51.2" width="13.1" height="0.9" fill="#444"/><rect x="62.5" y="51.2" width="8.3" height="0.9" fill="#555"/><rect x="77.0" y="51.2" width="4.6" height="0.9" fill="#555"/><rect x="18.5" y="57.8" width="2.4" height="0.9" fill="#555"/><rect x="28.0" y="57.8" width="18.9" height="0.9" fill="#444"/><rect x="62.5" y="57.8" width="7.7" height="0.9" fill="#555"/><rect x="77.0" y="57.8" width="4.2" height="0.9" fill="#555"/><rect x="18.5" y="64.2" width="1.8" height="0.9" fill="#555"/><rect x="28.0" y="64.2" width="14.7" height="0.9" fill="#444"/><rect x="62.5" y="64.2" width="9.0" height="0.9" fill="#555"/><rect x="77.0" y="64.2" width="4.2" height="0.9" fill="#555"/><rect x="18.5" y="70.8" width="2.2" height="0.9" fill="#555"/><rect x="28.0" y="70.8" width="12.9" height="0.9" fill="#444"/><rect x="62.5" y="70.8" width="7.2" height="0.9" fill="#555"/><rect x="77.0" y="70.8" width="3.2" height="0.9" fill="#555"/><rect x="18.5" y="77.2" width="2.0" height="0.9" fill="#555"/><rect x="28.0" y="77.2" width="19.2" height="0.9" fill="#444"/><rect x="62.5" y="77.2" width="6.9" height="0.9" fill="#555"/><rect x="77.0" y="77.2" width="4.5" height="0.9" fill="#555"/><rect x="18.5" y="83.8" width="2.7" height="0.9" fill="#555"/><rect x="28.0" y="83.8" width="12.6" height="0.9" fill="#444"/><rect x="62.5" y="83.8" width="7.7" height="0.9" fill="#555"/><rect x="77.0" y="83.8" width="3.7" height="0.9" fill="#555"/><rect x="18.5" y="90.1" width="1.7" height="0.9" fill="#555"/><rect x="28.0" y="90.1" width="15.8" height="0.9" fill="#444"/><rect x="62.5" y="90.1" width="10.0" height="0.9" fill="#555"/><rect x="77.0" y="90.1" width="3.0" height="0.9" fill="#555"/><rect x="18.5" y="96.5" width="2.4" height="0.9" fill="#555"/><rect x="28.0" y="96.5" width="13.2" height="0.9" fill="#444"/><rect x="62.5" y="96.5" width="8.6" height="0.9" fill="#555"/><rect x="77.0" y="96.5" width="4.5" height="0.9" fill="#555"/><rect x="78.0" y="25.1" width="4.5" height="1.8" fill="none" stroke="#f99" stroke-width=".4"/><circle cx="90.3" cy="26.0" r="1.1" fill="#f0c"/><rect x="78.0" y="31.4" width="4.5" height="1.8" fill="none" stroke="#f99" stroke-width=".4"/><circle cx="90.3" cy="32.3" r="1.1" fill="#f80"/><rect x="78.0" y="37.8" width="4.5" height="1.8" fill="none" stroke="#8dd" stroke-width=".4"/><circle cx="90.3" cy="38.7" r="1.1" fill="#fb0"/><rect x="78.0" y="44.4" width="4.5" height="1.8" fill="none" stroke="#8dd" stroke-width=".4"/><circle cx="90.3" cy="45.3" r="1.1" fill="#2c9"/><rect x="78.0" y="50.8" width="4.5" height="1.8" fill="none" stroke="#f99" stroke-width=".4"/><circle cx="90.3" cy="51.7" r="1.1" fill="#2af"/><rect x="78.0" y="57.4" width="4.5" height="1.8" fill="none" stroke="#f99" stroke-width=".4"/><circle cx="90.3" cy="58.3" r="1.1" fill="#f0c"/><rect x="78.0" y="63.7" width="4.5" height="1.8" fill="none" stroke="#8dd" stroke-width=".4"/><circle cx="90.3" cy="64.6" r="1.1" fill="#f80"/><rect x="78.0" y="70.3" width="4.5" height="1.8" fill="none" stroke="#fc6" stroke-width=".4"/><circle cx="90.3" cy="71.2" r="1.1" fill="#fb0"/><rect x="78.0" y="76.7" width="4.5" height="1.8" fill="none" stroke="#fc6" stroke-width=".4"/><circle cx="90.3" cy="77.6" r="1.1" fill="#2c9"/><rect x="78.0" y="83.3" width="4.5" height="1.8" fill="none" stroke="#f99" stroke-width=".4"/><circle cx="90.3" cy="84.2" r="1.1" fill="#2af"/><rect x="78.0" y="89.7" width="4.5" height="1.8" fill="none" stroke="#8dd" stroke-width=".4"/><circle cx="90.3" cy="90.6" r="1.1" fill="#f80"/><rect x="78.0" y="96.0" width="4.5" height="1.8" fill="none" stroke="#fc6" stroke-width=".4"/><circle cx="90.3" cy="96.9" r="1.1" fill="#fb0"/><rect x="124.0" y="22.0" width="9.5" height="78.5" fill="#f3f3f3"/><rect x="157.0" y="22.0" width="10.0" height="78.5" fill="#f3f3f3"/><path d="M95.7 22.0L95.7 100.5" stroke="#ececec" stroke-width="0.25"/><path d="M100.5 22.0L100.5 100.5" stroke="#ececec" stroke-width="0.25"/><path d="M105.3 22.0L105.3 100.5" stroke="#ececec" stroke-width="0.25"/><path d="M110.0 22.0L110.0 100.5" stroke="#ececec" stroke-width="0.25"/><path d="M114.8 22.0L114.8 100.5" stroke="#ececec" stroke-width="0.25"/><path d="M119.6 22.0L119.6 100.5" stroke="#ececec" stroke-width="0.25"/><path d="M124.4 22.0L124.4 100.5" stroke="#ececec" stroke-width="0.25"/><path d="M129.1 22.0L129.1 100.5" stroke="#ececec" stroke-width="0.25"/><path d="M133.9 22.0L133.9 100.5" stroke="#ececec" stroke-width="0.25"/><path d="M138.7 22.0L138.7 100.5" stroke="#ececec" stroke-width="0.25"/><path d="M143.5 22.0L143.5 100.5" stroke="#ececec" stroke-width="0.25"/><path d="M148.2 22.0L148.2 100.5" stroke="#ececec" stroke-width="0.25"/><path d="M153.0 22.0L153.0 100.5" stroke="#ececec" stroke-width="0.25"/><path d="M157.8 22.0L157.8 100.5" stroke="#ececec" stroke-width="0.25"/><path d="M162.6 22.0L162.6 100.5" stroke="#ececec" stroke-width="0.25"/><path d="M167.3 22.0L167.3 100.5" stroke="#ececec" stroke-width="0.25"/><path d="M172.1 22.0L172.1 100.5" stroke="#ececec" stroke-width="0.25"/><path d="M176.9 22.0L176.9 100.5" stroke="#ececec" stroke-width="0.25"/><path d="M181.7 22.0L181.7 100.5" stroke="#ececec" stroke-width="0.25"/><path d="M186.4 22.0L186.4 100.5" stroke="#ececec" stroke-width="0.25"/><path d="M191.2 22.0L191.2 100.5" stroke="#ececec" stroke-width="0.25"/><path d="M196.0 22.0L196.0 100.5" stroke="#ececec" stroke-width="0.25"/><path d="M95.7 29.2L196.0 29.2" stroke="#ececec" stroke-width="0.25"/><path d="M95.7 35.5L196.0 35.5" stroke="#ececec" stroke-width="0.25"/><path d="M95.7 41.9L196.0 41.9" stroke="#ececec" stroke-width="0.25"/><path d="M95.7 48.5L196.0 48.5" stroke="#ececec" stroke-width="0.25"/><path d="M95.7 54.9L196.0 54.9" stroke="#ececec" stroke-width="0.25"/><path d="M95.7 61.5L196.0 61.5" stroke="#ececec" stroke-width="0.25"/><path d="M95.7 67.8L196.0 67.8" stroke="#ececec" stroke-width="0.25"/><path d="M95.7 74.4L196.0 74.4" stroke="#ececec" stroke-width="0.25"/><path d="M95.7 80.8L196.0 80.8" stroke="#ececec" stroke-width="0.25"/><path d="M95.7 87.4L196.0 87.4" stroke="#ececec" stroke-width="0.25"/><path d="M95.7 93.8L196.0 93.8" stroke="#ececec" stroke-width="0.25"/><path d="M95.7 100.1L196.0 100.1" stroke="#ececec" stroke-width="0.25"/><rect x="96.7" y="19.8" width="2.6" height="0.7" fill="#999"/><rect x="101.5" y="19.8" width="2.6" height="0.7" fill="#999"/><rect x="106.3" y="19.8" width="2.6" height="0.7" fill="#999"/><rect x="111.0" y="19.8" width="2.6" height="0.7" fill="#999"/><rect x="115.8" y="19.8" width="2.6" height="0.7" fill="#999"/><rect x="120.6" y="19.8" width="2.6" height="0.7" fill="#999"/><rect x="125.4" y="19.8" width="2.6" height="0.7" fill="#999"/><rect x="130.1" y="19.8" width="2.6" height="0.7" fill="#999"/><rect x="134.9" y="19.8" width="2.6" height="0.7" fill="#999"/><rect x="139.7" y="19.8" width="2.6" height="0.7" fill="#999"/><rect x="144.5" y="19.8" width="2.6" height="0.7" fill="#999"/><rect x="149.2" y="19.8" width="2.6" height="0.7" fill="#999"/><rect x="154.0" y="19.8" width="2.6" height="0.7" fill="#999"/><rect x="158.8" y="19.8" width="2.6" height="0.7" fill="#999"/><rect x="163.6" y="19.8" width="2.6" height="0.7" fill="#999"/><rect x="168.3" y="19.8" width="2.6" height="0.7" fill="#999"/><rect x="173.1" y="19.8" width="2.6" height="0.7" fill="#999"/><rect x="177.9" y="19.8" width="2.6" height="0.7" fill="#999"/><rect x="182.7" y="19.8" width="2.6" height="0.7" fill="#999"/><rect x="187.4" y="19.8" width="2.6" height="0.7" fill="#999"/><rect x="192.2" y="19.8" width="2.6" height="0.7" fill="#999"/><rect x="100.3" y="25.1" width="90.8" height="1.8" fill="#6db6fb"/><rect x="100.3" y="25.1" width="55.2" height="1.8" fill="#5fd068"/><rect x="102.3" y="23.6" width="14.0" height="0.7" fill="#666"/><rect x="100.3" y="31.4" width="38.7" height="1.8" fill="#6db6fb"/><rect x="100.3" y="31.4" width="36.1" height="1.8" fill="#5fd068"/><rect x="102.3" y="29.9" width="14.0" height="0.7" fill="#666"/><rect x="100.3" y="37.8" width="9.4" height="1.8" fill="#6db6fb"/><rect x="100.3" y="37.8" width="9.4" height="1.8" fill="#5fd068"/><rect x="102.3" y="36.3" width="14.0" height="0.7" fill="#666"/><rect x="110.2" y="44.4" width="9.7" height="1.8" fill="#6db6fb"/><rect x="110.2" y="44.4" width="9.7" height="1.8" fill="#5fd068"/><rect x="112.2" y="42.9" width="14.0" height="0.7" fill="#666"/><rect x="119.8" y="50.8" width="19.1" height="1.8" fill="#6db6fb"/><rect x="119.8" y="50.8" width="16.5" height="1.8" fill="#5fd068"/><rect x="121.8" y="49.3" width="14.0" height="0.7" fill="#666"/><rect x="138.9" y="57.4" width="38.2" height="1.8" fill="#6db6fb"/><rect x="138.9" y="57.4" width="16.5" height="1.8" fill="#5fd068"/><rect x="140.9" y="55.9" width="14.0" height="0.7" fill="#666"/><rect x="138.9" y="63.7" width="4.6" height="1.8" fill="#6db6fb"/><rect x="138.9" y="63.7" width="4.6" height="1.8" fill="#5fd068"/><rect x="140.9" y="62.2" width="10.6" height="0.7" fill="#666"/><rect x="143.5" y="70.3" width="9.4" height="1.8" fill="#6db6fb"/><rect x="143.5" y="70.3" width="9.4" height="1.8" fill="#5fd068"/><rect x="145.5" y="68.8" width="14.0" height="0.7" fill="#666"/><rect x="152.9" y="76.7" width="24.2" height="1.8" fill="#6db6fb"/><rect x="152.9" y="76.7" width="12.7" height="1.8" fill="#5fd068"/><rect x="154.9" y="75.2" width="14.0" height="0.7" fill="#666"/><rect x="177.1" y="83.3" width="14.0" height="1.8" fill="#6db6fb"/><rect x="177.1" y="83.3" width="8.9" height="1.8" fill="#5fd068"/><rect x="179.1" y="81.8" width="14.0" height="0.7" fill="#666"/><rect x="177.1" y="89.7" width="4.3" height="1.8" fill="#6db6fb"/><rect x="177.1" y="89.7" width="4.3" height="1.8" fill="#5fd068"/><rect x="179.1" y="88.2" width="10.3" height="0.7" fill="#666"/><rect x="182.2" y="96.0" width="8.9" height="1.8" fill="#6db6fb"/><rect x="182.2" y="96.0" width="1.3" height="1.8" fill="#5fd068"/><rect x="184.2" y="94.5" width="14.0" height="0.7" fill="#666"/><rect x="13.0" y="101.5" width="187.0" height="21.5" fill="#fff" stroke="#ececec" stroke-width=".3"/><rect x="15.0" y="107.2" width="3.5" height="0.8" fill="#777"/><rect x="21" y="106.6" width="10" height="2" rx=".8" fill="#6db6fb"/><rect x="40.5" y="107.2" width="3.5" height="0.8" fill="#777"/><rect x="46.500" y="106.6" width="10" height="2" rx=".8" fill="#fcc62c"/><rect x="66.0" y="107.2" width="15.0" height="0.8" fill="#777"/><rect x="84.5" y="107.1" width="10.0" height="1.0" fill="#f57c1f"/><rect x="104.0" y="107.2" width="5.0" height="0.8" fill="#777"/><path d="M111.0 107.6L121.0 107.6" stroke="#888" stroke-width="0.4"/><rect x="15.0" y="111.1" width="3.5" height="0.8" fill="#777"/><rect x="21" y="110.5" width="10" height="2" rx=".8" fill="#6db6fb"/><rect x="40.5" y="111.1" width="3.5" height="0.8" fill="#777"/><rect x="46.500" y="110.5" width="10" height="2" rx=".8" fill="#fcc62c"/><rect x="66.0" y="111.1" width="15.0" height="0.8" fill="#777"/><rect x="84.5" y="111.0" width="10.0" height="1.0" fill="#5a9a3a"/><rect x="104.0" y="111.1" width="5.0" height="0.8" fill="#777"/><rect x="111" y="110.5" width="10" height="2" rx=".6" fill="#f58a8a"/><rect x="15.0" y="115.1" width="3.5" height="0.8" fill="#777"/><rect x="21" y="114.5" width="10" height="2" rx=".8" fill="#5fd068"/><rect x="40.5" y="115.1" width="3.5" height="0.8" fill="#777"/><rect x="46.500" y="114.5" width="10" height="2" rx=".8" fill="#fcc62c"/><rect x="66.0" y="115.1" width="8.0" height="0.8" fill="#777"/><rect x="84.5" y="114.3" width="0.5" height="2.4" fill="#fcc62c"/><rect x="104.0" y="115.1" width="5.0" height="0.8" fill="#777"/><rect x="111" y="114.5" width="10" height="2" rx=".6" fill="#b5b5b5"/><rect x="15.0" y="119.0" width="3.5" height="0.8" fill="#777"/><rect x="21" y="118.4" width="2" height="2" rx=".8" fill="#2a7de0"/><rect x="40.5" y="119.0" width="3.5" height="0.8" fill="#777"/><rect x="46.500" y="118.4" width="2" height="2" rx=".8" fill="#fcc62c"/><rect x="66.0" y="119.0" width="8.0" height="0.8" fill="#777"/><rect x="84.5" y="118.2" width="0.5" height="2.4" fill="#fcc62c"/><rect x="15.0" y="103.5" width="4.0" height="0.8" fill="#555"/><rect x="40.5" y="103.5" width="4.0" height="0.8" fill="#555"/><rect x="104.0" y="103.5" width="3.0" height="0.8" fill="#555"/></svg></div><div class="n"><span style="white-space:nowrap"><span style="display:inline-block;white-space:nowrap;width:63.28px;transform:scaleX(0.830);transform-origin:0 50%">ソフトウェア</span>開発</span></div></div>
<div class="tpl" style="left:1111px;top:821px"><div class="th"><svg width="209" height="139" viewBox="0 0 209 139"><text x="109" y="15.2" font-size="2.6" font-weight="normal" text-anchor="middle" fill="#666" font-family="Liberation Sans,sans-serif">进度计划</text><rect x="13.0" y="17.8" width="183.0" height="82.7" fill="#fff" stroke="#e3e3e3" stroke-width=".3"/><rect x="13.0" y="17.8" width="183.0" height="4.2" fill="#f6f6f6"/><path d="M16.5 17.8L16.5 100.5" stroke="#e3e3e3" stroke-width="0.3"/><path d="M24.5 17.8L24.5 100.5" stroke="#e3e3e3" stroke-width="0.3"/><path d="M61.0 17.8L61.0 100.5" stroke="#e3e3e3" stroke-width="0.3"/><path d="M76.0 17.8L76.0 100.5" stroke="#e3e3e3" stroke-width="0.3"/><path d="M85.0 17.8L85.0 100.5" stroke="#e3e3e3" stroke-width="0.3"/><path d="M95.5 17.8L95.5 100.5" stroke="#e3e3e3" stroke-width="0.3"/><path d="M13.0 22.0L196.0 22.0" stroke="#e3e3e3" stroke-width="0.3" stroke-dasharray="1 .6"/><path d="M13.0 29.1L196.0 29.1" stroke="#e3e3e3" stroke-width="0.3" stroke-dasharray="1 .6"/><path d="M13.0 35.5L196.0 35.5" stroke="#e3e3e3" stroke-width="0.3" stroke-dasharray="1 .6"/><path d="M13.0 42.0L196.0 42.0" stroke="#e3e3e3" stroke-width="0.3" stroke-dasharray="1 .6"/><path d="M13.0 48.5L196.0 48.5" stroke="#e3e3e3" stroke-width="0.3" stroke-dasharray="1 .6"/><path d="M13.0 55.0L196.0 55.0" stroke="#e3e3e3" stroke-width="0.3" stroke-dasharray="1 .6"/><path d="M13.0 61.5L196.0 61.5" stroke="#e3e3e3" stroke-width="0.3" stroke-dasharray="1 .6"/><path d="M13.0 67.9L196.0 67.9" stroke="#e3e3e3" stroke-width="0.3" stroke-dasharray="1 .6"/><path d="M13.0 74.4L196.0 74.4" stroke="#e3e3e3" stroke-width="0.3" stroke-dasharray="1 .6"/><path d="M13.0 80.9L196.0 80.9" stroke="#e3e3e3" stroke-width="0.3" stroke-dasharray="1 .6"/><path d="M13.0 87.4L196.0 87.4" stroke="#e3e3e3" stroke-width="0.3" stroke-dasharray="1 .6"/><path d="M13.0 93.8L196.0 93.8" stroke="#e3e3e3" stroke-width="0.3" stroke-dasharray="1 .6"/><rect x="18.9" y="19.5" width="1.7" height="0.8" fill="#a5a5a5"/><rect x="31.3" y="19.5" width="12.1" height="0.8" fill="#a5a5a5"/><rect x="64.2" y="19.5" width="6.1" height="0.8" fill="#a5a5a5"/><rect x="77.8" y="19.5" width="2.8" height="0.8" fill="#a5a5a5"/><rect x="18.5" y="25.5" width="2.2" height="0.9" fill="#555"/><rect x="28.0" y="25.5" width="17.0" height="0.9" fill="#444"/><rect x="62.5" y="25.5" width="10.1" height="0.9" fill="#555"/><rect x="77.0" y="25.5" width="3.7" height="0.9" fill="#555"/><rect x="18.5" y="31.9" width="2.3" height="0.9" fill="#555"/><rect x="28.0" y="31.9" width="17.3" height="0.9" fill="#444"/><rect x="62.5" y="31.9" width="6.9" height="0.9" fill="#555"/><rect x="77.0" y="31.9" width="3.8" height="0.9" fill="#555"/><rect x="18.5" y="38.2" width="2.4" height="0.9" fill="#555"/><rect x="28.0" y="38.2" width="19.1" height="0.9" fill="#444"/><rect x="62.5" y="38.2" width="6.5" height="0.9" fill="#555"/><rect x="77.0" y="38.2" width="3.4" height="0.9" fill="#555"/><rect x="18.5" y="44.8" width="1.8" height="0.9" fill="#555"/><rect x="28.0" y="44.8" width="19.2" height="0.9" fill="#444"/><rect x="62.5" y="44.8" width="9.1" height="0.9" fill="#555"/><rect x="77.0" y="44.8" width="2.8" height="0.9" fill="#555"/><rect x="18.5" y="51.2" width="2.8" height="0.9" fill="#555"/><rect x="28.0" y="51.2" width="20.6" height="0.9" fill="#444"/><rect x="62.5" y="51.2" width="8.9" height="0.9" fill="#555"/><rect x="77.0" y="51.2" width="4.0" height="0.9" fill="#555"/><rect x="18.5" y="57.8" width="1.8" height="0.9" fill="#555"/><rect x="28.0" y="57.8" width="12.2" height="0.9" fill="#444"/><rect x="62.5" y="57.8" width="8.4" height="0.9" fill="#555"/><rect x="77.0" y="57.8" width="2.9" height="0.9" fill="#555"/><rect x="18.5" y="64.2" width="1.9" height="0.9" fill="#555"/><rect x="28.0" y="64.2" width="14.2" height="0.9" fill="#444"/><rect x="62.5" y="64.2" width="6.2" height="0.9" fill="#555"/><rect x="77.0" y="64.2" width="3.7" height="0.9" fill="#555"/><rect x="18.5" y="70.8" width="2.2" height="0.9" fill="#555"/><rect x="28.0" y="70.8" width="19.5" height="0.9" fill="#444"/><rect x="62.5" y="70.8" width="8.3" height="0.9" fill="#555"/><rect x="77.0" y="70.8" width="4.0" height="0.9" fill="#555"/><rect x="18.5" y="77.2" width="2.2" height="0.9" fill="#555"/><rect x="28.0" y="77.2" width="17.9" height="0.9" fill="#444"/><rect x="62.5" y="77.2" width="8.1" height="0.9" fill="#555"/><rect x="77.0" y="77.2" width="3.3" height="0.9" fill="#555"/><rect x="18.5" y="83.8" width="2.8" height="0.9" fill="#555"/><rect x="28.0" y="83.8" width="20.9" height="0.9" fill="#444"/><rect x="62.5" y="83.8" width="9.7" height="0.9" fill="#555"/><rect x="77.0" y="83.8" width="4.2" height="0.9" fill="#555"/><rect x="18.5" y="90.1" width="2.0" height="0.9" fill="#555"/><rect x="28.0" y="90.1" width="14.1" height="0.9" fill="#444"/><rect x="62.5" y="90.1" width="7.3" height="0.9" fill="#555"/><rect x="77.0" y="90.1" width="2.9" height="0.9" fill="#555"/><rect x="18.5" y="96.5" width="2.6" height="0.9" fill="#555"/><rect x="28.0" y="96.5" width="15.6" height="0.9" fill="#444"/><rect x="62.5" y="96.5" width="9.8" height="0.9" fill="#555"/><rect x="77.0" y="96.5" width="3.5" height="0.9" fill="#555"/><rect x="78.0" y="25.1" width="4.5" height="1.8" fill="none" stroke="#f99" stroke-width=".4"/><circle cx="90.3" cy="26.0" r="1.1" fill="#f0c"/><rect x="78.0" y="31.4" width="4.5" height="1.8" fill="none" stroke="#f99" stroke-width=".4"/><circle cx="90.3" cy="32.3" r="1.1" fill="#f80"/><rect x="78.0" y="37.8" width="4.5" height="1.8" fill="none" stroke="#8dd" stroke-width=".4"/><circle cx="90.3" cy="38.7" r="1.1" fill="#fb0"/><rect x="78.0" y="44.4" width="4.5" height="1.8" fill="none" stroke="#8dd" stroke-width=".4"/><circle cx="90.3" cy="45.3" r="1.1" fill="#2c9"/><rect x="78.0" y="50.8" width="4.5" height="1.8" fill="none" stroke="#f99" stroke-width=".4"/><circle cx="90.3" cy="51.7" r="1.1" fill="#2af"/><rect x="78.0" y="57.4" width="4.5" height="1.8" fill="none" stroke="#f99" stroke-width=".4"/><circle cx="90.3" cy="58.3" r="1.1" fill="#f0c"/><rect x="78.0" y="63.7" width="4.5" height="1.8" fill="none" stroke="#8dd" stroke-width=".4"/><circle cx="90.3" cy="64.6" r="1.1" fill="#f80"/><rect x="78.0" y="70.3" width="4.5" height="1.8" fill="none" stroke="#fc6" stroke-width=".4"/><circle cx="90.3" cy="71.2" r="1.1" fill="#fb0"/><rect x="78.0" y="76.7" width="4.5" height="1.8" fill="none" stroke="#fc6" stroke-width=".4"/><circle cx="90.3" cy="77.6" r="1.1" fill="#2c9"/><rect x="78.0" y="83.3" width="4.5" height="1.8" fill="none" stroke="#f99" stroke-width=".4"/><circle cx="90.3" cy="84.2" r="1.1" fill="#2af"/><rect x="78.0" y="89.7" width="4.5" height="1.8" fill="none" stroke="#8dd" stroke-width=".4"/><circle cx="90.3" cy="90.6" r="1.1" fill="#f80"/><rect x="78.0" y="96.0" width="4.5" height="1.8" fill="none" stroke="#fc6" stroke-width=".4"/><circle cx="90.3" cy="96.9" r="1.1" fill="#fb0"/><rect x="124.0" y="22.0" width="9.5" height="78.5" fill="#f3f3f3"/><rect x="157.0" y="22.0" width="10.0" height="78.5" fill="#f3f3f3"/><path d="M95.7 22.0L95.7 100.5" stroke="#ececec" stroke-width="0.25"/><path d="M100.5 22.0L100.5 100.5" stroke="#ececec" stroke-width="0.25"/><path d="M105.3 22.0L105.3 100.5" stroke="#ececec" stroke-width="0.25"/><path d="M110.0 22.0L110.0 100.5" stroke="#ececec" stroke-width="0.25"/><path d="M114.8 22.0L114.8 100.5" stroke="#ececec" stroke-width="0.25"/><path d="M119.6 22.0L119.6 100.5" stroke="#ececec" stroke-width="0.25"/><path d="M124.4 22.0L124.4 100.5" stroke="#ececec" stroke-width="0.25"/><path d="M129.1 22.0L129.1 100.5" stroke="#ececec" stroke-width="0.25"/><path d="M133.9 22.0L133.9 100.5" stroke="#ececec" stroke-width="0.25"/><path d="M138.7 22.0L138.7 100.5" stroke="#ececec" stroke-width="0.25"/><path d="M143.5 22.0L143.5 100.5" stroke="#ececec" stroke-width="0.25"/><path d="M148.2 22.0L148.2 100.5" stroke="#ececec" stroke-width="0.25"/><path d="M153.0 22.0L153.0 100.5" stroke="#ececec" stroke-width="0.25"/><path d="M157.8 22.0L157.8 100.5" stroke="#ececec" stroke-width="0.25"/><path d="M162.6 22.0L162.6 100.5" stroke="#ececec" stroke-width="0.25"/><path d="M167.3 22.0L167.3 100.5" stroke="#ececec" stroke-width="0.25"/><path d="M172.1 22.0L172.1 100.5" stroke="#ececec" stroke-width="0.25"/><path d="M176.9 22.0L176.9 100.5" stroke="#ececec" stroke-width="0.25"/><path d="M181.7 22.0L181.7 100.5" stroke="#ececec" stroke-width="0.25"/><path d="M186.4 22.0L186.4 100.5" stroke="#ececec" stroke-width="0.25"/><path d="M191.2 22.0L191.2 100.5" stroke="#ececec" stroke-width="0.25"/><path d="M196.0 22.0L196.0 100.5" stroke="#ececec" stroke-width="0.25"/><path d="M95.7 29.2L196.0 29.2" stroke="#ececec" stroke-width="0.25"/><path d="M95.7 35.5L196.0 35.5" stroke="#ececec" stroke-width="0.25"/><path d="M95.7 41.9L196.0 41.9" stroke="#ececec" stroke-width="0.25"/><path d="M95.7 48.5L196.0 48.5" stroke="#ececec" stroke-width="0.25"/><path d="M95.7 54.9L196.0 54.9" stroke="#ececec" stroke-width="0.25"/><path d="M95.7 61.5L196.0 61.5" stroke="#ececec" stroke-width="0.25"/><path d="M95.7 67.8L196.0 67.8" stroke="#ececec" stroke-width="0.25"/><path d="M95.7 74.4L196.0 74.4" stroke="#ececec" stroke-width="0.25"/><path d="M95.7 80.8L196.0 80.8" stroke="#ececec" stroke-width="0.25"/><path d="M95.7 87.4L196.0 87.4" stroke="#ececec" stroke-width="0.25"/><path d="M95.7 93.8L196.0 93.8" stroke="#ececec" stroke-width="0.25"/><path d="M95.7 100.1L196.0 100.1" stroke="#ececec" stroke-width="0.25"/><rect x="96.7" y="19.8" width="2.6" height="0.7" fill="#999"/><rect x="101.5" y="19.8" width="2.6" height="0.7" fill="#999"/><rect x="106.3" y="19.8" width="2.6" height="0.7" fill="#999"/><rect x="111.0" y="19.8" width="2.6" height="0.7" fill="#999"/><rect x="115.8" y="19.8" width="2.6" height="0.7" fill="#999"/><rect x="120.6" y="19.8" width="2.6" height="0.7" fill="#999"/><rect x="125.4" y="19.8" width="2.6" height="0.7" fill="#999"/><rect x="130.1" y="19.8" width="2.6" height="0.7" fill="#999"/><rect x="134.9" y="19.8" width="2.6" height="0.7" fill="#999"/><rect x="139.7" y="19.8" width="2.6" height="0.7" fill="#999"/><rect x="144.5" y="19.8" width="2.6" height="0.7" fill="#999"/><rect x="149.2" y="19.8" width="2.6" height="0.7" fill="#999"/><rect x="154.0" y="19.8" width="2.6" height="0.7" fill="#999"/><rect x="158.8" y="19.8" width="2.6" height="0.7" fill="#999"/><rect x="163.6" y="19.8" width="2.6" height="0.7" fill="#999"/><rect x="168.3" y="19.8" width="2.6" height="0.7" fill="#999"/><rect x="173.1" y="19.8" width="2.6" height="0.7" fill="#999"/><rect x="177.9" y="19.8" width="2.6" height="0.7" fill="#999"/><rect x="182.7" y="19.8" width="2.6" height="0.7" fill="#999"/><rect x="187.4" y="19.8" width="2.6" height="0.7" fill="#999"/><rect x="192.2" y="19.8" width="2.6" height="0.7" fill="#999"/><rect x="104.6" y="25.1" width="43.0" height="1.8" fill="#a993f3"/><rect x="104.6" y="25.1" width="39.9" height="1.8" fill="#6a45c9"/><rect x="106.6" y="23.6" width="14.0" height="0.7" fill="#666"/><rect x="104.6" y="31.4" width="9.4" height="1.8" fill="#a993f3"/><rect x="104.6" y="31.4" width="8.1" height="1.8" fill="#6a45c9"/><rect x="106.6" y="29.9" width="14.0" height="0.7" fill="#666"/><rect x="114.5" y="37.8" width="8.4" height="1.8" fill="#a993f3"/><rect x="114.5" y="37.8" width="8.4" height="1.8" fill="#6a45c9"/><rect x="116.5" y="36.3" width="14.0" height="0.7" fill="#666"/><rect x="133.1" y="44.4" width="4.3" height="1.8" fill="#a993f3"/><rect x="133.1" y="44.4" width="4.3" height="1.8" fill="#6a45c9"/><rect x="135.1" y="42.9" width="10.3" height="0.7" fill="#666"/><rect x="138.2" y="50.8" width="8.9" height="1.8" fill="#a993f3"/><rect x="138.2" y="50.8" width="6.4" height="1.8" fill="#6a45c9"/><rect x="140.2" y="49.3" width="14.0" height="0.7" fill="#666"/><rect x="133.1" y="57.4" width="47.8" height="1.8" fill="#a993f3"/><rect x="133.1" y="57.4" width="30.5" height="1.8" fill="#6a45c9"/><rect x="135.1" y="55.9" width="14.0" height="0.7" fill="#666"/><rect x="133.1" y="63.7" width="24.2" height="1.8" fill="#a993f3"/><rect x="133.1" y="63.7" width="10.2" height="1.8" fill="#6a45c9"/><rect x="135.1" y="62.2" width="14.0" height="0.7" fill="#666"/><rect x="131.8" y="70.3" width="10.7" height="1.8" fill="#a993f3"/><rect x="131.8" y="70.3" width="9.4" height="1.8" fill="#6a45c9"/><rect x="133.8" y="68.8" width="14.0" height="0.7" fill="#666"/><rect x="143.3" y="76.7" width="8.9" height="1.8" fill="#a993f3"/><rect x="143.3" y="76.7" width="7.6" height="1.8" fill="#6a45c9"/><rect x="145.3" y="75.2" width="14.0" height="0.7" fill="#666"/><rect x="152.2" y="83.3" width="4.3" height="1.8" fill="#a993f3"/><rect x="152.2" y="83.3" width="4.3" height="1.8" fill="#6a45c9"/><rect x="154.2" y="81.8" width="10.3" height="0.7" fill="#666"/><rect x="166.2" y="89.7" width="14.8" height="1.8" fill="#a993f3"/><rect x="166.2" y="89.7" width="5.1" height="1.8" fill="#6a45c9"/><rect x="168.2" y="88.2" width="14.0" height="0.7" fill="#666"/><rect x="166.2" y="96.0" width="14.8" height="1.8" fill="#a993f3"/><rect x="166.2" y="96.0" width="6.4" height="1.8" fill="#6a45c9"/><rect x="168.2" y="94.5" width="14.0" height="0.7" fill="#666"/><rect x="13.0" y="101.5" width="187.0" height="21.5" fill="#fff" stroke="#ececec" stroke-width=".3"/><rect x="15.0" y="107.2" width="3.5" height="0.8" fill="#777"/><rect x="21" y="106.6" width="10" height="2" rx=".8" fill="#a993f3"/><rect x="40.5" y="107.2" width="3.5" height="0.8" fill="#777"/><rect x="46.500" y="106.6" width="10" height="2" rx=".8" fill="#f08ade"/><rect x="66.0" y="107.2" width="15.0" height="0.8" fill="#777"/><rect x="84.5" y="107.1" width="10.0" height="1.0" fill="#f05a6e"/><rect x="104.0" y="107.2" width="5.0" height="0.8" fill="#777"/><path d="M111.0 107.6L121.0 107.6" stroke="#888" stroke-width="0.4"/><rect x="15.0" y="111.1" width="3.5" height="0.8" fill="#777"/><rect x="21" y="110.5" width="10" height="2" rx=".8" fill="#a993f3"/><rect x="40.5" y="111.1" width="3.5" height="0.8" fill="#777"/><rect x="46.500" y="110.5" width="10" height="2" rx=".8" fill="#f08ade"/><rect x="66.0" y="111.1" width="15.0" height="0.8" fill="#777"/><rect x="84.5" y="111.0" width="10.0" height="1.0" fill="#8a7ad0"/><rect x="104.0" y="111.1" width="5.0" height="0.8" fill="#777"/><rect x="111" y="110.5" width="10" height="2" rx=".6" fill="#f58a8a"/><rect x="15.0" y="115.1" width="3.5" height="0.8" fill="#777"/><rect x="21" y="114.5" width="10" height="2" rx=".8" fill="#6a45c9"/><rect x="40.5" y="115.1" width="3.5" height="0.8" fill="#777"/><rect x="46.500" y="114.5" width="10" height="2" rx=".8" fill="#f08ade"/><rect x="66.0" y="115.1" width="8.0" height="0.8" fill="#777"/><rect x="84.5" y="114.3" width="0.5" height="2.4" fill="#f08ade"/><rect x="104.0" y="115.1" width="5.0" height="0.8" fill="#777"/><rect x="111" y="114.5" width="10" height="2" rx=".6" fill="#b5b5b5"/><rect x="15.0" y="119.0" width="3.5" height="0.8" fill="#777"/><rect x="21" y="118.4" width="2" height="2" rx=".8" fill="#6a45c9"/><rect x="40.5" y="119.0" width="3.5" height="0.8" fill="#777"/><rect x="46.500" y="118.4" width="2" height="2" rx=".8" fill="#c060d0"/><rect x="66.0" y="119.0" width="8.0" height="0.8" fill="#777"/><rect x="84.5" y="118.2" width="0.5" height="2.4" fill="#f08ade"/><rect x="15.0" y="103.5" width="4.0" height="0.8" fill="#555"/><rect x="40.5" y="103.5" width="4.0" height="0.8" fill="#555"/><rect x="104.0" y="103.5" width="3.0" height="0.8" fill="#555"/></svg></div><div class="n"><span style="white-space:nowrap"><span style="display:inline-block;white-space:nowrap;width:65.58px;transform:scaleX(0.811);transform-origin:0 50%">ハードウェア</span>開発</span></div></div>
<div class="tpl" style="left:1370px;top:821px"><div class="th"><svg width="209" height="139" viewBox="0 0 209 139"><rect x="22.1" y="17.1" width="59.5" height="0.8" fill="#9aa"/><rect x="22.1" y="19.7" width="3.5" height="0.8" fill="#9aa"/><rect x="22.1" y="22.5" width="56.9" height="0.8" fill="#9aa"/><rect x="22.1" y="25.5" width="43.8" height="0.8" fill="#9aa"/><rect x="20.3" y="29.8" width="63.4" height="17.7" rx="1.500" fill="#fff" stroke="#5bb5f0" stroke-width=".6"/><rect x="22.8" y="32.2" width="58.6" height="0.8" fill="#667"/><rect x="22.8" y="34.6" width="54.3" height="0.8" fill="#667"/><rect x="22.8" y="42.1" width="58.6" height="0.8" fill="#667"/><rect x="22.8" y="44.6" width="58.6" height="0.8" fill="#667"/><rect x="32.0" y="42.0" width="14.0" height="1.0" fill="#f66"/><rect x="42.5" y="44.5" width="22.8" height="1.0" fill="#f86"/><rect x="86.6" y="17.2" width="40.8" height="19.3" rx="1.500" fill="#fff" stroke="#5a6fb0" stroke-width=".6"/><rect x="88.9" y="19.4" width="35.9" height="0.8" fill="#556"/><rect x="88.9" y="21.7" width="31.5" height="0.8" fill="#556"/><rect x="88.9" y="23.9" width="27.1" height="0.8" fill="#556"/><rect x="88.9" y="26.2" width="35.9" height="0.8" fill="#556"/><rect x="88.9" y="28.5" width="31.5" height="0.8" fill="#556"/><rect x="88.9" y="30.9" width="27.1" height="0.8" fill="#556"/><rect x="88.9" y="33.2" width="35.9" height="0.8" fill="#556"/><rect x="129.5" y="25.9" width="32.0" height="45.5" fill="#fff" stroke="#bfe4fa" stroke-width=".7"/><rect x="133.9" y="28.1" width="5.3" height="0.8" fill="#345"/><rect x="133.9" y="31.1" width="11.7" height="0.8" fill="#9ab"/><rect x="133.9" y="34.1" width="9.5" height="0.8" fill="#9ab"/><rect x="133.9" y="37.1" width="7.2" height="0.8" fill="#345"/><rect x="133.9" y="40.0" width="13.7" height="0.8" fill="#9ab"/><rect x="133.9" y="43.0" width="11.4" height="0.8" fill="#9ab"/><rect x="133.9" y="46.0" width="9.1" height="0.8" fill="#345"/><rect x="133.9" y="49.0" width="6.8" height="0.8" fill="#9ab"/><rect x="133.9" y="51.9" width="13.3" height="0.8" fill="#9ab"/><rect x="133.9" y="54.9" width="11.0" height="0.8" fill="#345"/><rect x="133.9" y="57.9" width="8.8" height="0.8" fill="#9ab"/><rect x="133.9" y="60.9" width="6.5" height="0.8" fill="#9ab"/><rect x="133.9" y="63.8" width="13.0" height="0.8" fill="#345"/><rect x="133.9" y="66.8" width="10.7" height="0.8" fill="#9ab"/><rect x="133.9" y="69.8" width="8.4" height="0.8" fill="#9ab"/><rect x="22.1" y="50.1" width="37.6" height="12.3" fill="#fff" stroke="#cfe6f7" stroke-width=".6"/><rect x="26.8" y="51.8" width="10.5" height="0.8" fill="#889"/><rect x="26.8" y="54.9" width="10.5" height="0.8" fill="#889"/><rect x="26.8" y="59.6" width="10.5" height="0.8" fill="#889"/><rect x="61.8" y="52.5" width="21.9" height="8.4" rx="1.800" fill="#bfe4fa" stroke="#5bb5f0" stroke-width=".5"/><rect x="63.9" y="53.9" width="17.7" height="0.7" fill="#7d9db5"/><rect x="63.9" y="55.8" width="17.7" height="0.7" fill="#7d9db5"/><rect x="63.9" y="57.8" width="17.7" height="0.7" fill="#7d9db5"/><rect x="89.4" y="63.5" width="26.3" height="11.0" rx="1.800" fill="#bfe4fa" stroke="#5bb5f0" stroke-width=".5"/><rect x="91.5" y="64.9" width="22.1" height="0.7" fill="#7d9db5"/><rect x="91.5" y="66.9" width="22.1" height="0.7" fill="#7d9db5"/><rect x="91.5" y="68.8" width="22.1" height="0.7" fill="#7d9db5"/><rect x="91.5" y="70.7" width="22.1" height="0.7" fill="#7d9db5"/><rect x="25.6" y="108.5" width="56.9" height="12.8" rx="1.800" fill="#bfe4fa" stroke="#5bb5f0" stroke-width=".5"/><rect x="27.7" y="109.9" width="52.7" height="0.7" fill="#7d9db5"/><rect x="27.7" y="111.8" width="52.7" height="0.7" fill="#7d9db5"/><rect x="27.7" y="113.8" width="52.7" height="0.7" fill="#7d9db5"/><rect x="27.7" y="115.7" width="52.7" height="0.7" fill="#7d9db5"/><rect x="27.7" y="117.6" width="52.7" height="0.7" fill="#7d9db5"/><rect x="86.3" y="108.5" width="29.4" height="12.8" rx="1.800" fill="#bfe4fa" stroke="#5bb5f0" stroke-width=".5"/><rect x="88.4" y="109.9" width="25.2" height="0.7" fill="#7d9db5"/><rect x="88.4" y="111.8" width="25.2" height="0.7" fill="#7d9db5"/><rect x="88.4" y="113.8" width="25.2" height="0.7" fill="#7d9db5"/><rect x="88.4" y="115.7" width="25.2" height="0.7" fill="#7d9db5"/><rect x="88.4" y="117.6" width="25.2" height="0.7" fill="#7d9db5"/><rect x="128.6" y="108.5" width="38.7" height="12.8" rx="1.800" fill="#bfe4fa" stroke="#5bb5f0" stroke-width=".5"/><rect x="130.7" y="109.9" width="34.5" height="0.7" fill="#7d9db5"/><rect x="130.7" y="111.8" width="34.5" height="0.7" fill="#7d9db5"/><rect x="130.7" y="113.8" width="34.5" height="0.7" fill="#7d9db5"/><rect x="130.7" y="115.7" width="34.5" height="0.7" fill="#7d9db5"/><rect x="130.7" y="117.6" width="34.5" height="0.7" fill="#7d9db5"/><path d="M61.8 55.7L57.4 53.4L61.8 53.9zM110.8 74.6L114.6 78.4L113.4 74.6zM75.8 108.5L80.2 103.8L78.4 108.5zM89.8 108.5L99.4 94.2L93.3 108.5zM160.7 108.5L164.2 103.8L163.3 108.5z" fill="#bfe4fa" stroke="#5bb5f0" stroke-width=".4"/><rect x="25.6" y="76.1" width="153.8" height="28.9" fill="#fff" stroke="#dcdcdc" stroke-width=".3"/><rect x="25.6" y="76.1" width="153.8" height="5.8" fill="#f0f0f0"/><rect x="119.5" y="81.9" width="6.7" height="23.1" fill="#d5ecf5"/><rect x="142.6" y="81.9" width="6.7" height="23.1" fill="#d5ecf5"/><rect x="165.9" y="81.9" width="6.7" height="23.1" fill="#d5ecf5"/><path d="M29.9 76.1L29.9 105.0" stroke="#d8d8d8" stroke-width="0.3"/><path d="M59.7 76.1L59.7 105.0" stroke="#d8d8d8" stroke-width="0.3"/><path d="M73.7 76.1L73.7 105.0" stroke="#d8d8d8" stroke-width="0.3"/><path d="M87.5 76.1L87.5 105.0" stroke="#d8d8d8" stroke-width="0.3"/><path d="M98.0 76.1L98.0 105.0" stroke="#d8d8d8" stroke-width="0.3"/><path d="M109.0 76.1L109.0 105.0" stroke="#d8d8d8" stroke-width="0.3"/><path d="M25.6 81.9L179.4 81.9" stroke="#d8d8d8" stroke-width="0.3"/><path d="M25.6 85.2L179.4 85.2" stroke="#d8d8d8" stroke-width="0.3"/><path d="M25.6 88.6L179.4 88.6" stroke="#d8d8d8" stroke-width="0.3"/><path d="M25.6 91.9L179.4 91.9" stroke="#d8d8d8" stroke-width="0.3"/><path d="M25.6 95.2L179.4 95.2" stroke="#d8d8d8" stroke-width="0.3"/><path d="M25.6 98.5L179.4 98.5" stroke="#d8d8d8" stroke-width="0.3"/><path d="M25.6 101.9L179.4 101.9" stroke="#d8d8d8" stroke-width="0.3"/><path d="M112.5 79.3L112.5 105.0" stroke="#e6e6e6" stroke-width="0.2"/><path d="M115.9 79.3L115.9 105.0" stroke="#e6e6e6" stroke-width="0.2"/><path d="M119.2 79.3L119.2 105.0" stroke="#e6e6e6" stroke-width="0.2"/><path d="M122.5 79.3L122.5 105.0" stroke="#e6e6e6" stroke-width="0.2"/><path d="M125.8 79.3L125.8 105.0" stroke="#e6e6e6" stroke-width="0.2"/><path d="M129.2 79.3L129.2 105.0" stroke="#e6e6e6" stroke-width="0.2"/><path d="M132.5 79.3L132.5 105.0" stroke="#e6e6e6" stroke-width="0.2"/><path d="M135.8 79.3L135.8 105.0" stroke="#e6e6e6" stroke-width="0.2"/><path d="M139.1 79.3L139.1 105.0" stroke="#e6e6e6" stroke-width="0.2"/><path d="M142.5 79.3L142.5 105.0" stroke="#e6e6e6" stroke-width="0.2"/><path d="M145.8 79.3L145.8 105.0" stroke="#e6e6e6" stroke-width="0.2"/><path d="M149.1 79.3L149.1 105.0" stroke="#e6e6e6" stroke-width="0.2"/><path d="M152.4 79.3L152.4 105.0" stroke="#e6e6e6" stroke-width="0.2"/><path d="M155.8 79.3L155.8 105.0" stroke="#e6e6e6" stroke-width="0.2"/><path d="M159.1 79.3L159.1 105.0" stroke="#e6e6e6" stroke-width="0.2"/><path d="M162.4 79.3L162.4 105.0" stroke="#e6e6e6" stroke-width="0.2"/><path d="M165.7 79.3L165.7 105.0" stroke="#e6e6e6" stroke-width="0.2"/><path d="M169.1 79.3L169.1 105.0" stroke="#e6e6e6" stroke-width="0.2"/><path d="M172.4 79.3L172.4 105.0" stroke="#e6e6e6" stroke-width="0.2"/><path d="M175.7 79.3L175.7 105.0" stroke="#e6e6e6" stroke-width="0.2"/><rect x="27.1" y="83.3" width="1.0" height="0.8" fill="#e66"/><rect x="33.8" y="83.2" width="9.6" height="0.9" fill="#777"/><rect x="61.4" y="83.2" width="8.8" height="0.9" fill="#777"/><rect x="75.3" y="83.2" width="9.6" height="0.9" fill="#777"/><rect x="89.8" y="83.2" width="3.9" height="0.9" fill="#777"/><rect x="102.0" y="83.2" width="1.8" height="0.9" fill="#777"/><rect x="27.1" y="86.4" width="1.0" height="0.8" fill="#e66"/><rect x="33.8" y="86.4" width="9.6" height="0.9" fill="#777"/><rect x="61.4" y="86.4" width="8.8" height="0.9" fill="#777"/><rect x="75.3" y="86.4" width="9.6" height="0.9" fill="#777"/><rect x="89.8" y="86.4" width="3.9" height="0.9" fill="#777"/><rect x="102.0" y="86.4" width="1.8" height="0.9" fill="#777"/><rect x="27.1" y="89.7" width="1.0" height="0.8" fill="#e66"/><rect x="33.8" y="89.7" width="9.6" height="0.9" fill="#777"/><rect x="61.4" y="89.7" width="8.8" height="0.9" fill="#777"/><rect x="75.3" y="89.7" width="9.6" height="0.9" fill="#777"/><rect x="89.8" y="89.7" width="3.9" height="0.9" fill="#777"/><rect x="102.0" y="89.7" width="1.8" height="0.9" fill="#777"/><rect x="27.1" y="93.1" width="1.0" height="0.8" fill="#e66"/><rect x="33.8" y="93.0" width="9.6" height="0.9" fill="#777"/><rect x="61.4" y="93.0" width="8.8" height="0.9" fill="#777"/><rect x="75.3" y="93.0" width="9.6" height="0.9" fill="#777"/><rect x="89.8" y="93.0" width="3.9" height="0.9" fill="#777"/><rect x="102.0" y="93.0" width="1.8" height="0.9" fill="#777"/><rect x="27.1" y="96.4" width="1.0" height="0.8" fill="#e66"/><rect x="33.8" y="96.3" width="9.6" height="0.9" fill="#777"/><rect x="61.4" y="96.3" width="8.8" height="0.9" fill="#777"/><rect x="75.3" y="96.3" width="9.6" height="0.9" fill="#777"/><rect x="89.8" y="96.3" width="3.9" height="0.9" fill="#777"/><rect x="102.0" y="96.3" width="1.8" height="0.9" fill="#777"/><rect x="27.1" y="99.7" width="1.0" height="0.8" fill="#e66"/><rect x="35.5" y="99.7" width="9.6" height="0.9" fill="#777"/><rect x="61.4" y="99.7" width="8.8" height="0.9" fill="#777"/><rect x="75.3" y="99.7" width="9.6" height="0.9" fill="#777"/><rect x="89.8" y="99.7" width="3.9" height="0.9" fill="#777"/><rect x="102.0" y="99.7" width="1.8" height="0.9" fill="#777"/><rect x="27.1" y="103.0" width="1.0" height="0.8" fill="#e66"/><rect x="35.5" y="103.0" width="9.6" height="0.9" fill="#777"/><rect x="61.4" y="103.0" width="8.8" height="0.9" fill="#777"/><rect x="75.3" y="103.0" width="9.6" height="0.9" fill="#777"/><rect x="89.8" y="103.0" width="3.9" height="0.9" fill="#777"/><rect x="102.0" y="103.0" width="1.8" height="0.9" fill="#777"/><rect x="39.9" y="78.5" width="8.8" height="0.8" fill="#888"/><rect x="64.4" y="78.5" width="3.5" height="0.8" fill="#888"/><rect x="78.4" y="78.5" width="3.9" height="0.8" fill="#888"/><rect x="88.9" y="78.5" width="7.0" height="0.8" fill="#888"/><rect x="99.4" y="78.5" width="7.0" height="0.8" fill="#888"/><rect x="123.0" y="78.5" width="9.6" height="0.8" fill="#888"/><rect x="157.2" y="78.5" width="9.6" height="0.8" fill="#888"/><rect x="112.5" y="82.5" width="7.0" height="1.6" fill="#4aa3f5"/><rect x="129.5" y="85.8" width="10.2" height="1.6" fill="#4aa3f5"/><rect x="139.7" y="89.2" width="3.0" height="1.6" fill="#4aa3f5"/><rect x="151.0" y="92.5" width="4.9" height="1.6" fill="#4aa3f5"/><rect x="155.9" y="95.8" width="9.1" height="1.6" fill="#4aa3f5"/><rect x="155.9" y="99.1" width="6.5" height="1.6" fill="#4aa3f5"/><rect x="162.4" y="102.5" width="3.2" height="1.6" fill="#4aa3f5"/><path d="M119.5 83.3H129.5V86.6M139.7 86.6V90.0M155.9 93.3V96.6M165.0 96.6V103.3" fill="none" stroke="#456" stroke-width=".4"/><path d="M37.3 60.6L39.6 67.9H54.8L56.5 78.1M54.3 90.1L93.6 56.5H118.7L131.4 66.3" fill="none" stroke="#3f66c4" stroke-width=".5"/><path d="M96.8 49.2H121.3L131.8 56.5M186.0 56.2H165.0L158.9 63.2M187.8 64.6H163.3L157.2 70.2" fill="none" stroke="#8a8a8a" stroke-width=".5"/><circle cx="37.3" cy="60.6" r="1" fill="#5bb5f0"/><circle cx="56.5" cy="78.1" r="1" fill="#f7733a"/><circle cx="54.3" cy="90.1" r="1" fill="#f7733a"/><circle cx="131.8" cy="56.5" r="1" fill="#5bb5f0"/><circle cx="131.4" cy="66.3" r="1" fill="#5bb5f0"/><circle cx="158.9" cy="63.2" r="1" fill="#5bb5f0"/><circle cx="157.2" cy="70.2" r="1" fill="#5bb5f0"/><circle cx="164.2" cy="103.3" r="1" fill="#5bb5f0"/><circle cx="80.2" cy="104.1" r="1" fill="#5bb5f0"/><circle cx="114.6" cy="78.4" r="1" fill="#5bb5f0"/><rect x="97.1" y="43.9" width="21.9" height="0.7" fill="#5a7fc8"/><rect x="97.1" y="46.4" width="12.3" height="0.7" fill="#5a7fc8"/><rect x="93.3" y="54.1" width="11.4" height="0.7" fill="#5a7fc8"/><rect x="93.3" y="59.0" width="22.8" height="0.7" fill="#5a7fc8"/><rect x="39.9" y="65.5" width="12.3" height="0.7" fill="#5a7fc8"/><rect x="39.9" y="70.7" width="13.1" height="0.7" fill="#5a7fc8"/><rect x="41.7" y="73.3" width="5.3" height="0.7" fill="#9ab"/><rect x="165.6" y="50.9" width="19.3" height="0.7" fill="#5a7fc8"/><rect x="169.4" y="53.0" width="15.4" height="0.7" fill="#5a7fc8"/><rect x="173.8" y="61.4" width="12.3" height="0.7" fill="#5a7fc8"/><rect x="166.8" y="66.7" width="20.1" height="0.7" fill="#5a7fc8"/><rect x="175.5" y="69.0" width="10.5" height="0.7" fill="#5a7fc8"/><rect x="172.9" y="70.9" width="13.1" height="0.7" fill="#5a7fc8"/></svg></div><div class="n"><span style="white-space:nowrap"><span style="display:inline-block;white-space:nowrap;width:44.59px;transform:scaleX(0.831);transform-origin:0 50%">ガントの</span>使<span style="display:inline-block;white-space:nowrap;width:11.78px;transform:scaleX(0.831);transform-origin:0 50%">い</span>方</span></div></div>
<div class="tpl" style="left:1629px;top:821px"><div class="th"><svg width="209" height="139" viewBox="0 0 209 139"></svg></div><div class="n">ガント</div></div>
<div class="tpl" style="left:334px;top:1050px"><div class="th"><svg width="209" height="139" viewBox="0 0 209 139"><text x="103" y="20.8" font-size="4.5" font-weight="bold" text-anchor="middle" fill="#1f1f1f" font-family="Liberation Sans,sans-serif">Skill Center Work Plan Gantt Chart</text><rect x="21.5" y="27.5" width="163.0" height="62.5" fill="#fff" stroke="#e3e3e3" stroke-width=".3"/><rect x="21.5" y="27.5" width="163.0" height="8.5" fill="#f6f6f6"/><path d="M27.0 27.5L27.0 90.0" stroke="#e3e3e3" stroke-width="0.3"/><path d="M56.0 27.5L56.0 90.0" stroke="#e3e3e3" stroke-width="0.3"/><path d="M71.0 27.5L71.0 90.0" stroke="#e3e3e3" stroke-width="0.3"/><path d="M84.0 27.5L84.0 90.0" stroke="#e3e3e3" stroke-width="0.3"/><path d="M93.5 27.5L93.5 90.0" stroke="#e3e3e3" stroke-width="0.3"/><path d="M103.0 27.5L103.0 90.0" stroke="#e3e3e3" stroke-width="0.3"/><path d="M21.5 36.0L184.5 36.0" stroke="#e3e3e3" stroke-width="0.3" stroke-dasharray="1 .6"/><path d="M21.5 43.8L184.5 43.8" stroke="#e3e3e3" stroke-width="0.3" stroke-dasharray="1 .6"/><path d="M21.5 54.8L184.5 54.8" stroke="#e3e3e3" stroke-width="0.3" stroke-dasharray="1 .6"/><path d="M21.5 65.0L184.5 65.0" stroke="#e3e3e3" stroke-width="0.3" stroke-dasharray="1 .6"/><path d="M21.5 74.8L184.5 74.8" stroke="#e3e3e3" stroke-width="0.3" stroke-dasharray="1 .6"/><rect x="23.8" y="31.4" width="1.1" height="0.8" fill="#a5a5a5"/><rect x="33.5" y="31.4" width="12.7" height="0.8" fill="#a5a5a5"/><rect x="59.4" y="31.4" width="5.0" height="0.8" fill="#a5a5a5"/><rect x="74.2" y="31.4" width="4.4" height="0.8" fill="#a5a5a5"/><rect x="86.8" y="31.4" width="2.8" height="0.8" fill="#a5a5a5"/><rect x="96.2" y="31.4" width="2.8" height="0.8" fill="#a5a5a5"/><rect x="23.5" y="38.0" width="1.2" height="0.9" fill="#b0b0b0"/><rect x="30.0" y="38.0" width="19.0" height="0.9" fill="#b0b0b0"/><rect x="58.0" y="38.0" width="7.2" height="0.9" fill="#b0b0b0"/><rect x="73.0" y="38.0" width="5.9" height="0.9" fill="#b0b0b0"/><rect x="86.0" y="38.0" width="3.2" height="0.9" fill="#b0b0b0"/><rect x="95.5" y="38.0" width="4.3" height="0.9" fill="#b0b0b0"/><rect x="23.5" y="48.5" width="1.7" height="0.9" fill="#b0b0b0"/><rect x="30.0" y="48.5" width="17.4" height="0.9" fill="#b0b0b0"/><rect x="58.0" y="48.5" width="6.8" height="0.9" fill="#b0b0b0"/><rect x="73.0" y="48.5" width="5.2" height="0.9" fill="#b0b0b0"/><rect x="86.0" y="48.5" width="2.8" height="0.9" fill="#b0b0b0"/><rect x="95.5" y="48.5" width="3.5" height="0.9" fill="#b0b0b0"/><rect x="23.5" y="60.0" width="1.6" height="0.9" fill="#b0b0b0"/><rect x="30.0" y="60.0" width="13.3" height="0.9" fill="#b0b0b0"/><rect x="58.0" y="60.0" width="7.8" height="0.9" fill="#b0b0b0"/><rect x="73.0" y="60.0" width="5.1" height="0.9" fill="#b0b0b0"/><rect x="86.0" y="60.0" width="3.2" height="0.9" fill="#b0b0b0"/><rect x="95.5" y="60.0" width="2.8" height="0.9" fill="#b0b0b0"/><rect x="23.5" y="69.0" width="1.9" height="0.9" fill="#b0b0b0"/><rect x="30.0" y="69.0" width="19.4" height="0.9" fill="#b0b0b0"/><rect x="58.0" y="69.0" width="8.1" height="0.9" fill="#b0b0b0"/><rect x="73.0" y="69.0" width="6.4" height="0.9" fill="#b0b0b0"/><rect x="86.0" y="69.0" width="2.8" height="0.9" fill="#b0b0b0"/><rect x="95.5" y="69.0" width="3.4" height="0.9" fill="#b0b0b0"/><rect x="23.5" y="79.5" width="1.5" height="0.9" fill="#b0b0b0"/><rect x="30.0" y="79.5" width="13.7" height="0.9" fill="#b0b0b0"/><rect x="58.0" y="79.5" width="8.4" height="0.9" fill="#b0b0b0"/><rect x="73.0" y="79.5" width="5.6" height="0.9" fill="#b0b0b0"/><rect x="86.0" y="79.5" width="3.1" height="0.9" fill="#b0b0b0"/><rect x="95.5" y="79.5" width="4.4" height="0.9" fill="#b0b0b0"/><rect x="104.0" y="33.0" width="1.0" height="0.7" fill="#9ab"/><rect x="106.0" y="33.0" width="1.0" height="0.7" fill="#9ab"/><rect x="108.0" y="33.0" width="1.0" height="0.7" fill="#9ab"/><rect x="110.0" y="33.0" width="1.0" height="0.7" fill="#9ab"/><rect x="112.0" y="33.0" width="1.0" height="0.7" fill="#9ab"/><rect x="114.0" y="33.0" width="1.0" height="0.7" fill="#9ab"/><rect x="116.0" y="33.0" width="1.0" height="0.7" fill="#9ab"/><rect x="118.0" y="33.0" width="1.0" height="0.7" fill="#9ab"/><rect x="120.0" y="33.0" width="1.0" height="0.7" fill="#9ab"/><rect x="122.0" y="33.0" width="1.0" height="0.7" fill="#9ab"/><rect x="124.0" y="33.0" width="1.0" height="0.7" fill="#9ab"/><rect x="126.0" y="33.0" width="1.0" height="0.7" fill="#9ab"/><rect x="128.0" y="33.0" width="1.0" height="0.7" fill="#9ab"/><rect x="130.0" y="33.0" width="1.0" height="0.7" fill="#9ab"/><rect x="132.0" y="33.0" width="1.0" height="0.7" fill="#9ab"/><rect x="134.0" y="33.0" width="1.0" height="0.7" fill="#9ab"/><rect x="136.0" y="33.0" width="1.0" height="0.7" fill="#9ab"/><rect x="138.0" y="33.0" width="1.0" height="0.7" fill="#9ab"/><rect x="140.0" y="33.0" width="1.0" height="0.7" fill="#9ab"/><rect x="142.0" y="33.0" width="1.0" height="0.7" fill="#9ab"/><rect x="144.0" y="33.0" width="1.0" height="0.7" fill="#9ab"/><rect x="146.0" y="33.0" width="1.0" height="0.7" fill="#9ab"/><rect x="148.0" y="33.0" width="1.0" height="0.7" fill="#9ab"/><rect x="150.0" y="33.0" width="1.0" height="0.7" fill="#9ab"/><rect x="152.0" y="33.0" width="1.0" height="0.7" fill="#9ab"/><rect x="154.0" y="33.0" width="1.0" height="0.7" fill="#9ab"/><rect x="156.0" y="33.0" width="1.0" height="0.7" fill="#9ab"/><rect x="158.0" y="33.0" width="1.0" height="0.7" fill="#9ab"/><rect x="160.0" y="33.0" width="1.0" height="0.7" fill="#9ab"/><rect x="162.0" y="33.0" width="1.0" height="0.7" fill="#9ab"/><rect x="164.0" y="33.0" width="1.0" height="0.7" fill="#9ab"/><rect x="166.0" y="33.0" width="1.0" height="0.7" fill="#9ab"/><rect x="168.0" y="33.0" width="1.0" height="0.7" fill="#9ab"/><rect x="170.0" y="33.0" width="1.0" height="0.7" fill="#9ab"/><rect x="172.0" y="33.0" width="1.0" height="0.7" fill="#9ab"/><rect x="174.0" y="33.0" width="1.0" height="0.7" fill="#9ab"/><rect x="176.0" y="33.0" width="1.0" height="0.7" fill="#9ab"/><rect x="178.0" y="33.0" width="1.0" height="0.7" fill="#9ab"/><rect x="180.0" y="33.0" width="1.0" height="0.7" fill="#9ab"/><rect x="182.0" y="33.0" width="1.0" height="0.7" fill="#9ab"/><rect x="129.0" y="30.0" width="8.0" height="0.7" fill="#9ab"/><rect x="174.0" y="30.0" width="8.0" height="0.7" fill="#9ab"/><rect x="118.0" y="36.0" width="8.0" height="54.0" fill="#f5f6fb"/><rect x="146.0" y="36.0" width="8.0" height="54.0" fill="#f5f6fb"/><rect x="162.0" y="36.0" width="8.0" height="54.0" fill="#f5f6fb"/><rect x="103" y="37.400" width="4.500" height="2.200" rx="1" fill="#3c6fe0"/><rect x="113.500" y="47.900" width="18" height="2.200" rx="1" fill="#b9c2ea"/><rect x="113.500" y="47.900" width="10" height="2.200" rx="1" fill="#3a5fc0"/><rect x="116.500" y="59.400" width="18" height="2.200" rx="1" fill="#f8b5b5"/><rect x="116.500" y="59.400" width="11" height="2.200" rx="1" fill="#ee5a5a"/><rect x="119" y="68.400" width="18" height="2.200" rx="1" fill="#fbe3a0"/></svg></div></div>
<div class="tpl" style="left:593px;top:1050px"><div class="th"><svg width="209" height="139" viewBox="0 0 209 139"><text x="105" y="17" font-size="3.75" font-weight="bold" text-anchor="middle" fill="#1f1f1f" font-family="Liberation Sans,sans-serif">Project Construction Schedule</text><rect x="37.0" y="21.3" width="9.0" height="0.7" fill="#777"/><rect x="37.0" y="24.0" width="134.0" height="51.0" fill="#fff" stroke="#e3e3e3" stroke-width=".3"/><rect x="37.0" y="24.0" width="134.0" height="3.0" fill="#f6f6f6"/><path d="M42.5 24.0L42.5 75.0" stroke="#e3e3e3" stroke-width="0.3"/><path d="M67.0 24.0L67.0 75.0" stroke="#e3e3e3" stroke-width="0.3"/><path d="M79.5 24.0L79.5 75.0" stroke="#e3e3e3" stroke-width="0.3"/><path d="M92.0 24.0L92.0 75.0" stroke="#e3e3e3" stroke-width="0.3"/><path d="M103.0 24.0L103.0 75.0" stroke="#e3e3e3" stroke-width="0.3"/><path d="M37.0 27.0L171.0 27.0" stroke="#e3e3e3" stroke-width="0.3" stroke-dasharray="1 .6"/><path d="M37.0 30.6L171.0 30.6" stroke="#e3e3e3" stroke-width="0.3" stroke-dasharray="1 .6"/><path d="M37.0 35.0L171.0 35.0" stroke="#e3e3e3" stroke-width="0.3" stroke-dasharray="1 .6"/><path d="M37.0 39.4L171.0 39.4" stroke="#e3e3e3" stroke-width="0.3" stroke-dasharray="1 .6"/><path d="M37.0 43.8L171.0 43.8" stroke="#e3e3e3" stroke-width="0.3" stroke-dasharray="1 .6"/><path d="M37.0 48.2L171.0 48.2" stroke="#e3e3e3" stroke-width="0.3" stroke-dasharray="1 .6"/><path d="M37.0 52.6L171.0 52.6" stroke="#e3e3e3" stroke-width="0.3" stroke-dasharray="1 .6"/><path d="M37.0 57.4L171.0 57.4" stroke="#e3e3e3" stroke-width="0.3" stroke-dasharray="1 .6"/><path d="M37.0 63.2L171.0 63.2" stroke="#e3e3e3" stroke-width="0.3" stroke-dasharray="1 .6"/><path d="M37.0 69.0L171.0 69.0" stroke="#e3e3e3" stroke-width="0.3" stroke-dasharray="1 .6"/><rect x="38.8" y="25.1" width="1.1" height="0.8" fill="#a5a5a5"/><rect x="47.5" y="25.1" width="11.0" height="0.8" fill="#a5a5a5"/><rect x="70.2" y="25.1" width="4.4" height="0.8" fill="#a5a5a5"/><rect x="82.7" y="25.1" width="4.4" height="0.8" fill="#a5a5a5"/><rect x="95.0" y="25.1" width="3.9" height="0.8" fill="#a5a5a5"/><rect x="38.5" y="27.9" width="1.1" height="0.9" fill="#444"/><rect x="44.5" y="27.9" width="11.9" height="0.9" fill="#444"/><rect x="69.0" y="27.9" width="5.7" height="0.9" fill="#444"/><rect x="81.5" y="27.9" width="6.6" height="0.9" fill="#444"/><rect x="94.0" y="27.9" width="4.2" height="0.9" fill="#444"/><rect x="38.5" y="32.3" width="1.2" height="0.9" fill="#444"/><rect x="44.5" y="32.3" width="12.9" height="0.9" fill="#444"/><rect x="69.0" y="32.3" width="6.8" height="0.9" fill="#444"/><rect x="81.5" y="32.3" width="4.9" height="0.9" fill="#444"/><rect x="94.0" y="32.3" width="5.9" height="0.9" fill="#444"/><rect x="38.5" y="36.8" width="1.6" height="0.9" fill="#444"/><rect x="44.5" y="36.8" width="12.1" height="0.9" fill="#444"/><rect x="69.0" y="36.8" width="6.1" height="0.9" fill="#444"/><rect x="81.5" y="36.8" width="5.8" height="0.9" fill="#444"/><rect x="94.0" y="36.8" width="5.0" height="0.9" fill="#444"/><rect x="38.5" y="41.1" width="1.9" height="0.9" fill="#444"/><rect x="44.5" y="41.1" width="11.7" height="0.9" fill="#444"/><rect x="69.0" y="41.1" width="4.5" height="0.9" fill="#444"/><rect x="81.5" y="41.1" width="7.4" height="0.9" fill="#444"/><rect x="94.0" y="41.1" width="5.0" height="0.9" fill="#444"/><rect x="38.5" y="45.5" width="1.3" height="0.9" fill="#444"/><rect x="44.5" y="45.5" width="13.6" height="0.9" fill="#444"/><rect x="69.0" y="45.5" width="5.6" height="0.9" fill="#444"/><rect x="81.5" y="45.5" width="7.5" height="0.9" fill="#444"/><rect x="94.0" y="45.5" width="4.4" height="0.9" fill="#444"/><rect x="38.5" y="49.9" width="1.3" height="0.9" fill="#444"/><rect x="44.5" y="49.9" width="15.7" height="0.9" fill="#444"/><rect x="69.0" y="49.9" width="6.2" height="0.9" fill="#444"/><rect x="81.5" y="49.9" width="7.5" height="0.9" fill="#444"/><rect x="94.0" y="49.9" width="6.2" height="0.9" fill="#444"/><rect x="38.5" y="54.3" width="1.4" height="0.9" fill="#444"/><rect x="44.5" y="54.3" width="12.6" height="0.9" fill="#444"/><rect x="69.0" y="54.3" width="7.1" height="0.9" fill="#444"/><rect x="81.5" y="54.3" width="7.6" height="0.9" fill="#444"/><rect x="94.0" y="54.3" width="3.9" height="0.9" fill="#444"/><rect x="38.5" y="59.5" width="1.7" height="0.9" fill="#444"/><rect x="44.5" y="59.5" width="17.9" height="0.9" fill="#444"/><rect x="69.0" y="59.5" width="6.5" height="0.9" fill="#444"/><rect x="81.5" y="59.5" width="5.1" height="0.9" fill="#444"/><rect x="94.0" y="59.5" width="6.1" height="0.9" fill="#444"/><rect x="38.5" y="66.0" width="1.7" height="0.9" fill="#444"/><rect x="44.5" y="66.0" width="12.6" height="0.9" fill="#444"/><rect x="69.0" y="66.0" width="6.5" height="0.9" fill="#444"/><rect x="81.5" y="66.0" width="5.1" height="0.9" fill="#444"/><rect x="94.0" y="66.0" width="4.0" height="0.9" fill="#444"/><rect x="38.5" y="71.0" width="1.4" height="0.9" fill="#444"/><rect x="44.5" y="71.0" width="13.7" height="0.9" fill="#444"/><rect x="69.0" y="71.0" width="5.7" height="0.9" fill="#444"/><rect x="81.5" y="71.0" width="6.5" height="0.9" fill="#444"/><rect x="94.0" y="71.0" width="6.2" height="0.9" fill="#444"/><rect x="108.0" y="26.0" width="1.5" height="0.6" fill="#999"/><rect x="116.3" y="26.0" width="1.5" height="0.6" fill="#999"/><rect x="124.6" y="26.0" width="1.5" height="0.6" fill="#999"/><rect x="132.9" y="26.0" width="1.5" height="0.6" fill="#999"/><rect x="141.2" y="26.0" width="1.5" height="0.6" fill="#999"/><rect x="149.5" y="26.0" width="1.5" height="0.6" fill="#999"/><rect x="157.8" y="26.0" width="1.5" height="0.6" fill="#999"/><rect x="166.1" y="26.0" width="1.5" height="0.6" fill="#999"/><rect x="136.0" y="24.4" width="8.0" height="0.6" fill="#999"/><rect x="150.0" y="27.0" width="21.0" height="48.0" fill="#f6f6f8"/><rect x="104" y="27.3" width="5" height="2.200" rx="1" fill="#a9c4f5"/><rect x="112.5" y="31.7" width="5" height="2.200" rx="1" fill="#3a63c8"/><rect x="113" y="36.1" width="26" height="2.200" rx="1" fill="#f59a9a"/><rect x="114.5" y="40.5" width="22" height="2.200" rx="1" fill="#f9c560"/><rect x="118.5" y="44.9" width="17" height="2.200" rx="1" fill="#a9c9f7"/><rect x="122" y="49.3" width="14" height="2.200" rx="1" fill="#b4c6f5"/><rect x="122" y="53.7" width="21" height="2.200" rx="1" fill="#f7a428"/><rect x="122" y="58.9" width="21" height="2.200" rx="1" fill="#f9a5a5"/><rect x="122" y="65.4" width="21" height="2.200" rx="1" fill="#3458b8"/><rect x="122" y="70.4" width="21" height="2.200" rx="1" fill="#a6e3cf"/><rect x="113" y="36.100" width="5" height="2.200" rx="1" fill="#ee5a5a"/><rect x="118.500" y="44.900" width="6" height="2.200" rx="1" fill="#6ea3f0"/><rect x="122" y="65.400" width="10" height="2.200" rx="1" fill="#24408f"/><rect x="122" y="53.700" width="18" height="2.200" rx="1" fill="#f59a10"/></svg></div></div>
<div class="tpl" style="left:852px;top:1050px"><div class="th"><svg width="209" height="139" viewBox="0 0 209 139"><g transform="translate(-9,0)"><text x="113" y="16.8" font-size="3.6" font-weight="bold" text-anchor="middle" fill="#1f1f1f" font-family="Liberation Sans,sans-serif">Interior Decoration Gantt Chart</text><rect x="46.0" y="22.0" width="169.0" height="58.0" fill="#fff" stroke="#e3e3e3" stroke-width=".3"/><rect x="46.0" y="22.0" width="169.0" height="3.8" fill="#f6f6f6"/><path d="M52.0 22.0L52.0 80.0" stroke="#e3e3e3" stroke-width="0.3"/><path d="M74.0 22.0L74.0 80.0" stroke="#e3e3e3" stroke-width="0.3"/><path d="M85.0 22.0L85.0 80.0" stroke="#e3e3e3" stroke-width="0.3"/><path d="M96.0 22.0L96.0 80.0" stroke="#e3e3e3" stroke-width="0.3"/><path d="M107.0 22.0L107.0 80.0" stroke="#e3e3e3" stroke-width="0.3"/><path d="M117.0 22.0L117.0 80.0" stroke="#e3e3e3" stroke-width="0.3"/><path d="M46.0 25.8L215.0 25.8" stroke="#e3e3e3" stroke-width="0.3" stroke-dasharray="1 .6"/><path d="M46.0 30.0L215.0 30.0" stroke="#e3e3e3" stroke-width="0.3" stroke-dasharray="1 .6"/><path d="M46.0 34.5L215.0 34.5" stroke="#e3e3e3" stroke-width="0.3" stroke-dasharray="1 .6"/><path d="M46.0 39.0L215.0 39.0" stroke="#e3e3e3" stroke-width="0.3" stroke-dasharray="1 .6"/><path d="M46.0 43.9L215.0 43.9" stroke="#e3e3e3" stroke-width="0.3" stroke-dasharray="1 .6"/><path d="M46.0 49.2L215.0 49.2" stroke="#e3e3e3" stroke-width="0.3" stroke-dasharray="1 .6"/><path d="M46.0 54.4L215.0 54.4" stroke="#e3e3e3" stroke-width="0.3" stroke-dasharray="1 .6"/><path d="M46.0 59.0L215.0 59.0" stroke="#e3e3e3" stroke-width="0.3" stroke-dasharray="1 .6"/><path d="M46.0 63.5L215.0 63.5" stroke="#e3e3e3" stroke-width="0.3" stroke-dasharray="1 .6"/><path d="M46.0 68.0L215.0 68.0" stroke="#e3e3e3" stroke-width="0.3" stroke-dasharray="1 .6"/><path d="M46.0 72.7L215.0 72.7" stroke="#e3e3e3" stroke-width="0.3" stroke-dasharray="1 .6"/><rect x="47.8" y="23.5" width="1.1" height="0.8" fill="#a5a5a5"/><rect x="56.5" y="23.5" width="9.4" height="0.8" fill="#a5a5a5"/><rect x="77.0" y="23.5" width="3.9" height="0.8" fill="#a5a5a5"/><rect x="88.0" y="23.5" width="3.9" height="0.8" fill="#a5a5a5"/><rect x="98.9" y="23.5" width="3.3" height="0.8" fill="#a5a5a5"/><rect x="109.8" y="23.5" width="2.8" height="0.8" fill="#a5a5a5"/><rect x="47.5" y="27.4" width="1.4" height="0.9" fill="#667"/><rect x="54.0" y="27.4" width="10.9" height="0.9" fill="#667"/><rect x="76.0" y="27.4" width="4.3" height="0.9" fill="#667"/><rect x="87.0" y="27.4" width="6.4" height="0.9" fill="#667"/><rect x="98.0" y="27.4" width="4.7" height="0.9" fill="#667"/><rect x="109.0" y="27.4" width="4.1" height="0.9" fill="#667"/><rect x="47.5" y="31.8" width="1.5" height="0.9" fill="#667"/><rect x="54.0" y="31.8" width="12.0" height="0.9" fill="#667"/><rect x="76.0" y="31.8" width="5.9" height="0.9" fill="#667"/><rect x="87.0" y="31.8" width="5.5" height="0.9" fill="#667"/><rect x="98.0" y="31.8" width="5.2" height="0.9" fill="#667"/><rect x="109.0" y="31.8" width="4.1" height="0.9" fill="#667"/><rect x="47.5" y="36.3" width="1.8" height="0.9" fill="#667"/><rect x="54.0" y="36.3" width="12.3" height="0.9" fill="#667"/><rect x="76.0" y="36.3" width="4.3" height="0.9" fill="#667"/><rect x="87.0" y="36.3" width="4.3" height="0.9" fill="#667"/><rect x="98.0" y="36.3" width="5.0" height="0.9" fill="#667"/><rect x="109.0" y="36.3" width="3.1" height="0.9" fill="#667"/><rect x="47.5" y="40.8" width="1.6" height="0.9" fill="#667"/><rect x="54.0" y="40.8" width="13.6" height="0.9" fill="#667"/><rect x="76.0" y="40.8" width="4.0" height="0.9" fill="#667"/><rect x="87.0" y="40.8" width="6.0" height="0.9" fill="#667"/><rect x="98.0" y="40.8" width="3.4" height="0.9" fill="#667"/><rect x="109.0" y="40.8" width="4.5" height="0.9" fill="#667"/><rect x="47.5" y="46.0" width="1.8" height="0.9" fill="#667"/><rect x="54.0" y="46.0" width="10.8" height="0.9" fill="#667"/><rect x="76.0" y="46.0" width="5.9" height="0.9" fill="#667"/><rect x="87.0" y="46.0" width="5.9" height="0.9" fill="#667"/><rect x="98.0" y="46.0" width="3.6" height="0.9" fill="#667"/><rect x="109.0" y="46.0" width="4.1" height="0.9" fill="#667"/><rect x="47.5" y="51.5" width="1.2" height="0.9" fill="#667"/><rect x="54.0" y="51.5" width="15.6" height="0.9" fill="#667"/><rect x="76.0" y="51.5" width="5.8" height="0.9" fill="#667"/><rect x="87.0" y="51.5" width="6.6" height="0.9" fill="#667"/><rect x="98.0" y="51.5" width="3.4" height="0.9" fill="#667"/><rect x="109.0" y="51.5" width="3.4" height="0.9" fill="#667"/><rect x="47.5" y="56.3" width="1.6" height="0.9" fill="#667"/><rect x="54.0" y="56.3" width="13.5" height="0.9" fill="#667"/><rect x="76.0" y="56.3" width="4.4" height="0.9" fill="#667"/><rect x="87.0" y="56.3" width="6.3" height="0.9" fill="#667"/><rect x="98.0" y="56.3" width="5.3" height="0.9" fill="#667"/><rect x="109.0" y="56.3" width="3.4" height="0.9" fill="#667"/><rect x="47.5" y="60.8" width="1.2" height="0.9" fill="#667"/><rect x="54.0" y="60.8" width="13.9" height="0.9" fill="#667"/><rect x="76.0" y="60.8" width="5.0" height="0.9" fill="#667"/><rect x="87.0" y="60.8" width="5.7" height="0.9" fill="#667"/><rect x="98.0" y="60.8" width="4.5" height="0.9" fill="#667"/><rect x="109.0" y="60.8" width="3.5" height="0.9" fill="#667"/><rect x="47.5" y="65.3" width="1.1" height="0.9" fill="#667"/><rect x="54.0" y="65.3" width="10.3" height="0.9" fill="#667"/><rect x="76.0" y="65.3" width="5.1" height="0.9" fill="#667"/><rect x="87.0" y="65.3" width="5.9" height="0.9" fill="#667"/><rect x="98.0" y="65.3" width="4.3" height="0.9" fill="#667"/><rect x="109.0" y="65.3" width="4.2" height="0.9" fill="#667"/><rect x="47.5" y="69.8" width="1.5" height="0.9" fill="#667"/><rect x="54.0" y="69.8" width="15.3" height="0.9" fill="#667"/><rect x="76.0" y="69.8" width="5.7" height="0.9" fill="#667"/><rect x="87.0" y="69.8" width="4.8" height="0.9" fill="#667"/><rect x="98.0" y="69.8" width="3.6" height="0.9" fill="#667"/><rect x="109.0" y="69.8" width="2.9" height="0.9" fill="#667"/><rect x="47.5" y="74.5" width="1.1" height="0.9" fill="#667"/><rect x="54.0" y="74.5" width="15.2" height="0.9" fill="#667"/><rect x="76.0" y="74.5" width="6.3" height="0.9" fill="#667"/><rect x="87.0" y="74.5" width="6.0" height="0.9" fill="#667"/><rect x="98.0" y="74.5" width="3.6" height="0.9" fill="#667"/><rect x="109.0" y="74.5" width="4.1" height="0.9" fill="#667"/><rect x="122.0" y="24.0" width="12.0" height="0.7" fill="#99a"/><rect x="117.500" y="26.800" width="4" height="2" rx=".8" fill="#2bb5b0"/><path d="M123.0 27.8L130.0 27.8" stroke="#8fd8d5" stroke-width="0.5"/><rect x="122.0" y="31.4" width="1.3" height="1.8" fill="#7fd6d2"/><rect x="122.0" y="35.9" width="1.3" height="1.8" fill="#7fd6d2"/><rect x="122.5" y="40.4" width="1.3" height="1.8" fill="#7fd6d2"/><rect x="122.5" y="45.6" width="1.3" height="1.8" fill="#7fd6d2"/><rect x="126.0" y="51.1" width="2.5" height="1.8" fill="#7fd6d2"/><rect x="130.0" y="55.9" width="2.5" height="1.8" fill="#2bb5b0"/><rect x="136.0" y="60.4" width="2.5" height="1.8" fill="#2bb5b0"/><rect x="138.0" y="64.9" width="2.5" height="1.8" fill="#2bb5b0"/><rect x="140.0" y="69.4" width="2.5" height="1.8" fill="#2bb5b0"/><path d="M124.0 36.8L139.0 36.8" stroke="#9fe0dc" stroke-width="0.5"/><path d="M137.0 61.3L148.0 61.3" stroke="#9fe0dc" stroke-width="0.5"/></g></svg></div></div>
<div class="tpl" style="left:1111px;top:1050px"><div class="th"><svg width="209" height="139" viewBox="0 0 209 139"><text x="102" y="16.8" font-size="3.3" font-weight="bold" text-anchor="middle" fill="#1f1f1f" font-family="Liberation Sans,sans-serif">Construction Schedule (multi project/large time span)</text><rect x="32.0" y="22.5" width="146.5" height="53.5" fill="#fff" stroke="#e3e3e3" stroke-width=".3"/><rect x="32.0" y="22.5" width="146.5" height="4.0" fill="#f6f6f6"/><path d="M36.0 22.5L36.0 76.0" stroke="#e3e3e3" stroke-width="0.3"/><path d="M62.0 22.5L62.0 76.0" stroke="#e3e3e3" stroke-width="0.3"/><path d="M73.5 22.5L73.5 76.0" stroke="#e3e3e3" stroke-width="0.3"/><path d="M85.0 22.5L85.0 76.0" stroke="#e3e3e3" stroke-width="0.3"/><path d="M99.0 22.5L99.0 76.0" stroke="#e3e3e3" stroke-width="0.3"/><path d="M110.0 22.5L110.0 76.0" stroke="#e3e3e3" stroke-width="0.3"/><path d="M32.0 26.5L178.5 26.5" stroke="#e3e3e3" stroke-width="0.3" stroke-dasharray="1 .6"/><path d="M32.0 30.2L178.5 30.2" stroke="#e3e3e3" stroke-width="0.3" stroke-dasharray="1 .6"/><path d="M32.0 34.8L178.5 34.8" stroke="#e3e3e3" stroke-width="0.3" stroke-dasharray="1 .6"/><path d="M32.0 39.8L178.5 39.8" stroke="#e3e3e3" stroke-width="0.3" stroke-dasharray="1 .6"/><path d="M32.0 45.0L178.5 45.0" stroke="#e3e3e3" stroke-width="0.3" stroke-dasharray="1 .6"/><path d="M32.0 50.0L178.5 50.0" stroke="#e3e3e3" stroke-width="0.3" stroke-dasharray="1 .6"/><path d="M32.0 55.0L178.5 55.0" stroke="#e3e3e3" stroke-width="0.3" stroke-dasharray="1 .6"/><path d="M32.0 60.0L178.5 60.0" stroke="#e3e3e3" stroke-width="0.3" stroke-dasharray="1 .6"/><path d="M32.0 65.0L178.5 65.0" stroke="#e3e3e3" stroke-width="0.3" stroke-dasharray="1 .6"/><path d="M32.0 70.0L178.5 70.0" stroke="#e3e3e3" stroke-width="0.3" stroke-dasharray="1 .6"/><rect x="33.3" y="24.1" width="1.1" height="0.8" fill="#a5a5a5"/><rect x="40.7" y="24.1" width="9.9" height="0.8" fill="#a5a5a5"/><rect x="65.0" y="24.1" width="3.9" height="0.8" fill="#a5a5a5"/><rect x="76.5" y="24.1" width="3.9" height="0.8" fill="#a5a5a5"/><rect x="88.9" y="24.1" width="3.3" height="0.8" fill="#a5a5a5"/><rect x="102.2" y="24.1" width="2.8" height="0.8" fill="#a5a5a5"/><rect x="33.0" y="27.6" width="1.3" height="0.9" fill="#667"/><rect x="38.0" y="27.6" width="13.5" height="0.9" fill="#667"/><rect x="64.0" y="27.6" width="4.3" height="0.9" fill="#667"/><rect x="75.5" y="27.6" width="6.1" height="0.9" fill="#667"/><rect x="88.0" y="27.6" width="3.9" height="0.9" fill="#667"/><rect x="101.5" y="27.6" width="3.9" height="0.9" fill="#667"/><rect x="33.0" y="32.0" width="1.8" height="0.9" fill="#667"/><rect x="38.0" y="32.0" width="12.8" height="0.9" fill="#667"/><rect x="64.0" y="32.0" width="6.6" height="0.9" fill="#667"/><rect x="75.5" y="32.0" width="5.9" height="0.9" fill="#667"/><rect x="88.0" y="32.0" width="4.6" height="0.9" fill="#667"/><rect x="101.5" y="32.0" width="4.0" height="0.9" fill="#667"/><rect x="33.0" y="36.5" width="1.6" height="0.9" fill="#667"/><rect x="38.0" y="36.5" width="12.5" height="0.9" fill="#667"/><rect x="64.0" y="36.5" width="6.6" height="0.9" fill="#667"/><rect x="75.5" y="36.5" width="5.0" height="0.9" fill="#667"/><rect x="88.0" y="36.5" width="5.7" height="0.9" fill="#667"/><rect x="101.5" y="36.5" width="4.5" height="0.9" fill="#667"/><rect x="33.0" y="42.0" width="1.1" height="0.9" fill="#667"/><rect x="38.0" y="42.0" width="11.8" height="0.9" fill="#667"/><rect x="64.0" y="42.0" width="5.2" height="0.9" fill="#667"/><rect x="75.5" y="42.0" width="6.1" height="0.9" fill="#667"/><rect x="88.0" y="42.0" width="3.7" height="0.9" fill="#667"/><rect x="101.5" y="42.0" width="4.0" height="0.9" fill="#667"/><rect x="33.0" y="47.0" width="1.4" height="0.9" fill="#667"/><rect x="38.0" y="47.0" width="15.6" height="0.9" fill="#667"/><rect x="64.0" y="47.0" width="6.4" height="0.9" fill="#667"/><rect x="75.5" y="47.0" width="6.0" height="0.9" fill="#667"/><rect x="88.0" y="47.0" width="3.8" height="0.9" fill="#667"/><rect x="101.5" y="47.0" width="4.3" height="0.9" fill="#667"/><rect x="33.0" y="52.0" width="1.5" height="0.9" fill="#667"/><rect x="38.0" y="52.0" width="15.9" height="0.9" fill="#667"/><rect x="64.0" y="52.0" width="5.2" height="0.9" fill="#667"/><rect x="75.5" y="52.0" width="6.4" height="0.9" fill="#667"/><rect x="88.0" y="52.0" width="5.7" height="0.9" fill="#667"/><rect x="101.5" y="52.0" width="4.4" height="0.9" fill="#667"/><rect x="33.0" y="57.0" width="1.8" height="0.9" fill="#667"/><rect x="38.0" y="57.0" width="15.8" height="0.9" fill="#667"/><rect x="64.0" y="57.0" width="5.5" height="0.9" fill="#667"/><rect x="75.5" y="57.0" width="4.3" height="0.9" fill="#667"/><rect x="88.0" y="57.0" width="5.7" height="0.9" fill="#667"/><rect x="101.5" y="57.0" width="3.7" height="0.9" fill="#667"/><rect x="33.0" y="62.0" width="1.1" height="0.9" fill="#667"/><rect x="38.0" y="62.0" width="13.0" height="0.9" fill="#667"/><rect x="64.0" y="62.0" width="5.0" height="0.9" fill="#667"/><rect x="75.5" y="62.0" width="4.4" height="0.9" fill="#667"/><rect x="88.0" y="62.0" width="5.6" height="0.9" fill="#667"/><rect x="101.5" y="62.0" width="3.0" height="0.9" fill="#667"/><rect x="33.0" y="67.0" width="1.8" height="0.9" fill="#667"/><rect x="38.0" y="67.0" width="13.9" height="0.9" fill="#667"/><rect x="64.0" y="67.0" width="4.4" height="0.9" fill="#667"/><rect x="75.5" y="67.0" width="4.9" height="0.9" fill="#667"/><rect x="88.0" y="67.0" width="4.4" height="0.9" fill="#667"/><rect x="101.5" y="67.0" width="3.0" height="0.9" fill="#667"/><rect x="33.0" y="72.0" width="1.7" height="0.9" fill="#667"/><rect x="38.0" y="72.0" width="14.6" height="0.9" fill="#667"/><rect x="64.0" y="72.0" width="6.6" height="0.9" fill="#667"/><rect x="75.5" y="72.0" width="6.2" height="0.9" fill="#667"/><rect x="88.0" y="72.0" width="5.2" height="0.9" fill="#667"/><rect x="101.5" y="72.0" width="4.7" height="0.9" fill="#667"/><rect x="113.0" y="25.3" width="2.5" height="0.6" fill="#99a"/><rect x="120.8" y="25.3" width="2.5" height="0.6" fill="#99a"/><rect x="128.6" y="25.3" width="2.5" height="0.6" fill="#99a"/><rect x="136.4" y="25.3" width="2.5" height="0.6" fill="#99a"/><rect x="144.2" y="25.3" width="2.5" height="0.6" fill="#99a"/><rect x="152.0" y="25.3" width="2.5" height="0.6" fill="#99a"/><rect x="159.8" y="25.3" width="2.5" height="0.6" fill="#99a"/><rect x="167.6" y="25.3" width="2.5" height="0.6" fill="#99a"/><rect x="175.4" y="25.3" width="2.5" height="0.6" fill="#99a"/><rect x="113.0" y="23.2" width="6.0" height="0.6" fill="#99a"/><rect x="134.0" y="23.2" width="6.0" height="0.6" fill="#99a"/><rect x="162.0" y="23.2" width="6.0" height="0.6" fill="#e77"/><rect x="112.5" y="26.9" width="3" height="2.200" rx="1" fill="#f4595d"/><rect x="120.5" y="31.4" width="4.0" height="2.200" rx="1" fill="#fbc56a"/><rect x="115.5" y="31.4" width="6" height="2.200" rx="1" fill="#f4595d"/><rect x="151.5" y="35.9" width="18.0" height="2.200" rx="1" fill="#fbc56a"/><rect x="115.5" y="35.9" width="37" height="2.200" rx="1" fill="#f4595d"/><rect x="123.5" y="41.4" width="2" height="2.200" rx="1" fill="#f4595d"/><rect x="125" y="46.4" width="2" height="2.200" rx="1" fill="#f4595d"/><rect x="134.5" y="51.4" width="4.0" height="2.200" rx="1" fill="#fbc56a"/><rect x="126.5" y="51.4" width="9" height="2.200" rx="1" fill="#f4595d"/><rect x="132.0" y="56.4" width="2.0" height="2.200" rx="1" fill="#fbc56a"/><rect x="130" y="56.4" width="3" height="2.200" rx="1" fill="#f4595d"/><rect x="134.0" y="61.4" width="3.0" height="2.200" rx="1" fill="#fbc56a"/><rect x="131" y="61.4" width="4" height="2.200" rx="1" fill="#f4595d"/><rect x="134.0" y="66.4" width="1.8" height="2.200" rx="1" fill="#fbc56a"/><rect x="134" y="66.4" width="1" height="2.200" rx="1" fill="#f4595d"/><rect x="144.0" y="71.4" width="6.0" height="2.200" rx="1" fill="#fbc56a"/><rect x="135" y="71.4" width="10" height="2.200" rx="1" fill="#f4595d"/></svg></div></div>
<div class="tpl" style="left:1370px;top:1050px"><div class="th"><svg width="209" height="139" viewBox="0 0 209 139"><text x="103" y="26" font-size="4.4" font-weight="bold" text-anchor="middle" fill="#1f1f1f" font-family="Liberation Sans,sans-serif">Product Creation Gantt  Charts</text><rect x="27.5" y="36.0" width="153.0" height="54.0" fill="#fff" stroke="#e3e3e3" stroke-width=".3"/><rect x="27.5" y="36.0" width="153.0" height="8.0" fill="#f6f6f6"/><path d="M33.0 36.0L33.0 90.0" stroke="#e3e3e3" stroke-width="0.3"/><path d="M62.0 36.0L62.0 90.0" stroke="#e3e3e3" stroke-width="0.3"/><path d="M77.0 36.0L77.0 90.0" stroke="#e3e3e3" stroke-width="0.3"/><path d="M91.0 36.0L91.0 90.0" stroke="#e3e3e3" stroke-width="0.3"/><path d="M104.0 36.0L104.0 90.0" stroke="#e3e3e3" stroke-width="0.3"/><path d="M112.0 36.0L112.0 90.0" stroke="#e3e3e3" stroke-width="0.3"/><path d="M27.5 44.0L180.5 44.0" stroke="#e3e3e3" stroke-width="0.3" stroke-dasharray="1 .6"/><path d="M27.5 54.2L180.5 54.2" stroke="#e3e3e3" stroke-width="0.3" stroke-dasharray="1 .6"/><path d="M27.5 64.0L180.5 64.0" stroke="#e3e3e3" stroke-width="0.3" stroke-dasharray="1 .6"/><path d="M27.5 73.5L180.5 73.5" stroke="#e3e3e3" stroke-width="0.3" stroke-dasharray="1 .6"/><rect x="29.3" y="39.6" width="1.1" height="0.8" fill="#a5a5a5"/><rect x="38.2" y="39.6" width="8.2" height="0.8" fill="#a5a5a5"/><rect x="65.5" y="39.6" width="5.5" height="0.8" fill="#a5a5a5"/><rect x="80.3" y="39.6" width="5.0" height="0.8" fill="#a5a5a5"/><rect x="93.9" y="39.6" width="3.3" height="0.8" fill="#a5a5a5"/><rect x="106.6" y="39.6" width="2.2" height="0.8" fill="#a5a5a5"/><rect x="29.0" y="49.0" width="1.5" height="0.9" fill="#667"/><rect x="36.0" y="49.0" width="11.6" height="0.9" fill="#667"/><rect x="64.0" y="49.0" width="8.7" height="0.9" fill="#667"/><rect x="79.0" y="49.0" width="6.1" height="0.9" fill="#667"/><rect x="93.0" y="49.0" width="4.1" height="0.9" fill="#667"/><rect x="106.0" y="49.0" width="3.3" height="0.9" fill="#667"/><rect x="29.0" y="58.5" width="1.5" height="0.9" fill="#667"/><rect x="36.0" y="58.5" width="10.4" height="0.9" fill="#667"/><rect x="64.0" y="58.5" width="7.1" height="0.9" fill="#667"/><rect x="79.0" y="58.5" width="6.1" height="0.9" fill="#667"/><rect x="93.0" y="58.5" width="3.7" height="0.9" fill="#667"/><rect x="106.0" y="58.5" width="3.2" height="0.9" fill="#667"/><rect x="29.0" y="68.5" width="1.8" height="0.9" fill="#667"/><rect x="36.0" y="68.5" width="12.4" height="0.9" fill="#667"/><rect x="64.0" y="68.5" width="8.0" height="0.9" fill="#667"/><rect x="79.0" y="68.5" width="6.2" height="0.9" fill="#667"/><rect x="93.0" y="68.5" width="4.3" height="0.9" fill="#667"/><rect x="106.0" y="68.5" width="2.4" height="0.9" fill="#667"/><rect x="29.0" y="77.5" width="1.7" height="0.9" fill="#667"/><rect x="36.0" y="77.5" width="10.0" height="0.9" fill="#667"/><rect x="64.0" y="77.5" width="6.7" height="0.9" fill="#667"/><rect x="79.0" y="77.5" width="8.5" height="0.9" fill="#667"/><rect x="93.0" y="77.5" width="4.1" height="0.9" fill="#667"/><rect x="106.0" y="77.5" width="3.8" height="0.9" fill="#667"/><rect x="113.5" y="42.0" width="0.9" height="0.7" fill="#9ab"/><rect x="115.5" y="42.0" width="0.9" height="0.7" fill="#9ab"/><rect x="117.5" y="42.0" width="0.9" height="0.7" fill="#9ab"/><rect x="119.5" y="42.0" width="0.9" height="0.7" fill="#9ab"/><rect x="121.5" y="42.0" width="0.9" height="0.7" fill="#9ab"/><rect x="123.5" y="42.0" width="0.9" height="0.7" fill="#9ab"/><rect x="125.5" y="42.0" width="0.9" height="0.7" fill="#9ab"/><rect x="127.5" y="42.0" width="0.9" height="0.7" fill="#9ab"/><rect x="129.5" y="42.0" width="0.9" height="0.7" fill="#9ab"/><rect x="131.5" y="42.0" width="0.9" height="0.7" fill="#9ab"/><rect x="133.5" y="42.0" width="0.9" height="0.7" fill="#9ab"/><rect x="135.5" y="42.0" width="0.9" height="0.7" fill="#9ab"/><rect x="137.5" y="42.0" width="0.9" height="0.7" fill="#9ab"/><rect x="139.5" y="42.0" width="0.9" height="0.7" fill="#9ab"/><rect x="141.5" y="42.0" width="0.9" height="0.7" fill="#9ab"/><rect x="143.5" y="42.0" width="0.9" height="0.7" fill="#9ab"/><rect x="145.5" y="42.0" width="0.9" height="0.7" fill="#9ab"/><rect x="147.5" y="42.0" width="0.9" height="0.7" fill="#9ab"/><rect x="149.5" y="42.0" width="0.9" height="0.7" fill="#9ab"/><rect x="151.5" y="42.0" width="0.9" height="0.7" fill="#9ab"/><rect x="153.5" y="42.0" width="0.9" height="0.7" fill="#9ab"/><rect x="155.5" y="42.0" width="0.9" height="0.7" fill="#9ab"/><rect x="157.5" y="42.0" width="0.9" height="0.7" fill="#9ab"/><rect x="159.5" y="42.0" width="0.9" height="0.7" fill="#9ab"/><rect x="161.5" y="42.0" width="0.9" height="0.7" fill="#9ab"/><rect x="163.5" y="42.0" width="0.9" height="0.7" fill="#9ab"/><rect x="165.5" y="42.0" width="0.9" height="0.7" fill="#9ab"/><rect x="167.5" y="42.0" width="0.9" height="0.7" fill="#9ab"/><rect x="169.5" y="42.0" width="0.9" height="0.7" fill="#9ab"/><rect x="171.5" y="42.0" width="0.9" height="0.7" fill="#9ab"/><rect x="173.5" y="42.0" width="0.9" height="0.7" fill="#9ab"/><rect x="175.5" y="42.0" width="0.9" height="0.7" fill="#9ab"/><rect x="177.5" y="42.0" width="0.9" height="0.7" fill="#9ab"/><rect x="179.5" y="42.0" width="0.9" height="0.7" fill="#9ab"/><rect x="137.0" y="38.5" width="9.0" height="0.7" fill="#9ab"/><rect x="172.0" y="38.5" width="8.0" height="0.7" fill="#9ab"/><rect x="124.0" y="44.0" width="3.0" height="46.0" fill="#eef6fc"/><rect x="136.0" y="44.0" width="3.0" height="46.0" fill="#eef6fc"/><rect x="148.0" y="44.0" width="3.0" height="46.0" fill="#eef6fc"/><rect x="160.0" y="44.0" width="3.0" height="46.0" fill="#eef6fc"/><rect x="172.0" y="44.0" width="3.0" height="46.0" fill="#eef6fc"/><rect x="113.500" y="48.300" width="4.500" height="2.400" rx="1" fill="#4aa3f5"/><rect x="115" y="57.800" width="16.500" height="2.400" rx="1" fill="#6bb8f7"/><rect x="121.500" y="67.800" width="11" height="2.400" rx="1" fill="#6bb8f7"/><rect x="121.500" y="67.800" width="5" height="2.400" rx="1" fill="#9fdc7a"/></svg></div></div>
<div class="tpl" style="left:1629px;top:1050px"><div class="th"><svg width="209" height="139" viewBox="0 0 209 139"><rect x="16" y="22" width="5" height="60" fill="#35c4a8"/><rect x="16" y="19" width="8" height="1" fill="#666"/></svg></div></div>
<!--T1-->

<!--D0-->
<div id="dd"></div>
<div class="mi on" style="top:320px"><svg width="20" height="20" viewBox="0 0 20 20" style="left:10px;top:10px"><rect x="0.500" y="1.500" width="19" height="4" rx="1" fill="#9fcbff"/><path d="M.5 6.500h19V17a1.500 1.500 0 0 1-1.500 1.500H2A1.500 1.500 0 0 1 .5 17z" fill="url(#ib)"/><rect x="4.200" y="10.200" width="11.600" height="3.600" rx=".8" fill="none" stroke="#fff" stroke-width="1.500"/></svg><div class="t"><div><span style="white-space:nowrap"><span style="display:inline-block;white-space:nowrap;width:63.88px;transform:scaleX(0.794);transform-origin:0 50%">プロジェクト</span>管理</span></div></div></div>
<div class="mi" style="top:365px"><svg width="20" height="20" viewBox="0 0 20 20" style="left:10px;top:10px"><rect x="2" y="1.500" width="16" height="17" rx="1.500" fill="url(#ib)"/><rect x="4.700" y="4.200" width="4.300" height="5.800" fill="#fff"/><rect x="11" y="4.200" width="4.300" height="3.600" fill="#fff"/><rect x="4.700" y="12" width="4.300" height="3.800" fill="#fff"/><rect x="11" y="9.800" width="4.300" height="6" fill="#fff"/></svg><div class="t"><div><span style="white-space:nowrap">分析<span style="display:inline-block;white-space:nowrap;width:56.08px;transform:scaleX(0.833);transform-origin:0 50%">キャンバス</span></span></div></div></div>
<div class="mi" style="top:410px"><svg width="20" height="20" viewBox="0 0 20 20" style="left:10px;top:10px"><path d="M1.200 3.900L7 1.500 12.500 3.400 19.100 1.800V15.500L12.500 18.400 7 15.600 1.200 17.700z" fill="url(#ib)" stroke="url(#ib)" stroke-width=".8" stroke-linejoin="round"/><path d="M7.200 5h5.800v7H9.800V9.800H7.200z" fill="#fff"/><path d="M3.600 13.300q2.300-1.800 4.600 0t4.600 0 4.200-.6" fill="none" stroke="#fff" stroke-width="1.500"/></svg><div class="t"><div><span style="white-space:nowrap">戦略<span style="display:inline-block;white-space:nowrap;width:11.37px;transform:scaleX(0.860);transform-origin:0 50%">と</span>計画</span></div></div></div>
<div class="mi" style="top:455px"><svg width="20" height="20" viewBox="0 0 20 20" style="left:10px;top:10px"><rect x=".9" y=".9" width="18.400" height="12.700" rx="1.600" fill="url(#ib)"/><path d="M6.600 4.300L5.300 9.600M10.300 4.300L9 9.600M14 4.300l-1.300 5.300" stroke="#fff" stroke-width="1.600"/><path d="M1.800 16h16.400l2 3.200H-.2z" fill="#9fcbff"/></svg><div class="t"><div><span style="white-space:nowrap"><span style="display:inline-block;white-space:nowrap;width:63.78px;transform:scaleX(0.804);transform-origin:0 50%">ネットワーク</span>図</span></div></div></div>
<div class="mi" style="top:500px"><svg width="20" height="20" viewBox="0 0 20 20" style="left:10px;top:10px"><path d="M.9.600h6.300v13.200H.9zM8.300.600h11v8.400h-11zM5.900 11.200h13.400v2.600H5.900z" fill="url(#ib)"/><path d="M5.250 6.900v6.900" stroke="#fff" stroke-width="1.300"/><rect x="12.500" y="2.700" width="4.200" height="1.600" fill="#fff"/><rect x=".9" y="15.900" width="13" height="3.400" rx=".8" fill="#9fcbff"/></svg><div class="t"><div><span style="white-space:nowrap"><span style="letter-spacing:0.10px">建築設計</span></span></div></div></div>
<div class="mi" style="top:545px"><svg width="20" height="20" viewBox="0 0 20 20" style="left:10px;top:10px"><ellipse cx="10" cy="4" rx="8" ry="3" fill="url(#ib)"/><path d="M2 5.500c0 1.700 3.600 3 8 3s8-1.300 8-3v3c0 1.700-3.600 3-8 3s-8-1.300-8-3z" fill="url(#ib)"/><path d="M2 10c0 1.700 3.600 3 8 3s8-1.300 8-3v3c0 1.700-3.600 3-8 3s-8-1.300-8-3z" fill="url(#ib)"/><path d="M2 14.500c0 1.700 3.600 3 8 3s8-1.300 8-3V16c0 1.700-3.600 3-8 3s-8-1.300-8-3z" fill="url(#ib)"/></svg><div class="t"><div><span style="white-space:nowrap"><span style="display:inline-block;white-space:nowrap;width:67.20px;transform:scaleX(0.793);transform-origin:0 50%">データベース</span></span></div></div></div>
<div class="mi" style="top:590px"><svg width="20" height="20" viewBox="0 0 20 20" style="left:10px;top:10px"><rect x="2" y="1.500" width="16" height="8" rx="1.200" fill="url(#ib)"/><rect x="5" y="4" width="4" height="1.800" fill="#fff"/><rect x="11" y="4" width="4" height="1.800" fill="#fff"/><path d="M10 9v2.500M5.500 13v-1.500h9V13" stroke="url(#ib)" stroke-width="1.300" fill="none"/><rect x="2" y="12.500" width="7" height="6.500" rx="1.200" fill="url(#ib)"/><rect x="11" y="12.500" width="7" height="6.500" rx="1.200" fill="url(#ib)"/></svg><div class="t"><div><span style="white-space:nowrap"><span style="display:inline-block;white-space:nowrap;width:63.48px;transform:scaleX(0.833);transform-origin:0 50%">ソフトウェア</span>開発</span></div></div></div>
<div class="mi" style="top:635px"><svg width="20" height="20" viewBox="0 0 20 20" style="left:10px;top:10px"><path d="M5.500 10.500a3.300 3.300 0 0 1 .5-6.500 4.500 4.500 0 0 1 8.500.8 3 3 0 0 1-.5 5.700z" fill="url(#ib)"/><path d="M10 10v3.500M3.300 16v-2.500h13.400V16M10 13.500V16" stroke="url(#ib)" stroke-width="1.300" fill="none"/><rect x=".5" y="15.500" width="5.500" height="3.800" rx=".6" fill="url(#ib)"/><rect x="7.200" y="15.500" width="5.500" height="3.800" rx=".6" fill="url(#ib)"/><rect x="14" y="15.500" width="5.500" height="3.800" rx=".6" fill="url(#ib)"/></svg><div class="t"><div><span style="white-space:nowrap"><span style="display:inline-block;white-space:nowrap;width:88.10px;transform:scaleX(0.816);transform-origin:0 50%">クラウドサービス</span></span></div></div></div>
<div class="mi" style="top:680px"><svg width="20" height="20" viewBox="0 0 20 20" style="left:10px;top:10px"><rect x="2" y="2" width="16" height="4.500" rx="1" fill="url(#ib)"/><g fill="url(#ib)"><rect x="2" y="8.200" width="4.300" height="4.300" rx=".6"/><rect x="7.850" y="8.200" width="4.300" height="4.300" rx=".6"/><rect x="13.700" y="8.200" width="4.300" height="4.300" rx=".6"/><rect x="2" y="14.200" width="4.300" height="4.300" rx=".6"/><rect x="7.850" y="14.200" width="4.300" height="4.300" rx=".6"/><rect x="13.700" y="14.200" width="4.300" height="4.300" rx=".6"/></g></svg><div class="t"><div><span style="white-space:nowrap"><span style="display:inline-block;white-space:nowrap;width:42.00px;transform:scaleX(0.798);transform-origin:0 50%">フォーム</span></span></div></div></div>
<div class="mi" style="top:725px"><svg width="20" height="20" viewBox="0 0 20 20" style="left:10px;top:10px"><path d="M9 .5L16.700 3.500V9c0 5-3 8.500-7.700 10.100C4.200 17.500 1.200 14 1.200 9V3.500z" fill="url(#ib)"/><circle cx="14.300" cy="11.400" r="6.600" fill="#fff"/><path d="M14.300 6.200l4.500 2.600v5.200l-4.500 2.600-4.500-2.600V8.800z" fill="#9fcbff"/><circle cx="14.300" cy="11.400" r="1.800" fill="#fff"/></svg><div class="t"><div><span style="white-space:nowrap"><span style="letter-spacing:0.10px">品質管理</span></span></div></div></div>
<div class="mi" style="top:770px"><svg width="20" height="20" viewBox="0 0 20 20" style="left:10px;top:10px"><rect x="5.400" y=".5" width="11" height="1.900" rx=".9" fill="#9fcbff"/><rect x="6.900" y="2.300" width="8" height="7" fill="#9fcbff"/><path d="M5.600 9.700q2.700-1.300 5.300 0t5.100.300L19.300 17.500a1.200 1.200 0 0 1-1.100 1.700H2.700a1.200 1.200 0 0 1-1.100-1.700z" fill="url(#ib)"/><circle cx="7" cy="14.600" r="1.500" fill="#fff"/><circle cx="11.300" cy="12.700" r=".9" fill="#fff"/><circle cx="12.700" cy="15.600" r="1.100" fill="#fff"/></svg><div class="t"><div><span style="white-space:nowrap"><span style="letter-spacing:-0.01px">科学</span></span></div></div></div>
<div class="mi" style="top:815px"><svg width="20" height="20" viewBox="0 0 20 20" style="left:10px;top:10px"><path d="M3 10.600l7 3.400 6.700-3.400V16c-1.500 1.900-4 3-6.800 3S4.500 17.900 3 16z" fill="#9fcbff"/><path d="M10 .6l9.900 6.600L10 13.800 -.2 7.200z" fill="url(#ib)" stroke="url(#ib)" stroke-width=".8" stroke-linejoin="round"/><path d="M18.900 10.600v5.300" stroke="#9fcbff" stroke-width="1.400"/></svg><div class="t"><div><span style="white-space:nowrap">思考<span style="display:inline-block;white-space:nowrap;width:34.28px;transform:scaleX(0.804);transform-origin:0 50%">ツール</span></span></div></div></div>
<div class="mi" style="top:860px"><svg width="20" height="20" viewBox="0 0 20 20" style="left:10px;top:10px"><path d="M.5 8.500L4.500 6.600 10 12.500 15.500 8 19.300 6.600V18L13 20.100 7 18 .5 20.100z" fill="url(#ib)" stroke="url(#ib)" stroke-width=".8" stroke-linejoin="round"/><path d="M6.400 10.500V18M13 12v6.500" stroke="#fff" stroke-width="1.300"/><path d="M9.800.5a4 4 0 0 1 4 4c0 2.600-4 6.600-4 6.600s-4-4-4-6.600a4 4 0 0 1 4-4z" fill="#9fcbff" stroke="#fff" stroke-width=".8"/><circle cx="9.800" cy="4.300" r="1.200" fill="#fff"/></svg><div class="t"><div><span style="white-space:nowrap"><span style="letter-spacing:-0.01px">地図</span></span></div></div></div>
<div class="mi" style="top:905px"><svg width="20" height="20" viewBox="0 0 20 20" style="left:10px;top:10px"><path d="M5.100 .4L9.600 4.900 5.100 9.400 .6 4.900z" fill="url(#ib)"/><path d="M13.500 10.700h3l2.700 2.700v5.800h-5.700l-3-3z" fill="#9fcbff"/><path d="M.5 16L16 .6l3.300 3.300L3.900 19.300z" fill="url(#ib)" stroke="#fff" stroke-width=".9"/><path d="M11.800 6.400l1.900 1.900M13.700 4.500l1.900 1.900M9.900 8.300l1.900 1.900" stroke="#fff" stroke-width="1.100"/></svg><div class="t"><div><span style="white-space:nowrap"><span style="display:inline-block;white-space:nowrap;width:106.30px;transform:scaleX(0.814);transform-origin:0 50%">グラフィックデザイン</span></span></div></div></div>
<div class="mi" style="top:950px"><svg width="20" height="20" viewBox="0 0 20 20" style="left:10px;top:10px"><rect x="-.2" y="10" width="5" height="9" rx=".6" fill="#9fcbff"/><rect x="3.700" y=".6" width="16.500" height="18.400" rx="1.800" fill="url(#ib)"/><path d="M8 5.800v7.400M12.200 3.700v9.500M15.900 8v5.200" stroke="#fff" stroke-width="1.700"/><path d="M6.500 15.750h10.700" stroke="#fff" stroke-width="1.900"/></svg><div class="t"><div><span style="white-space:nowrap"><span style="display:inline-block;white-space:nowrap;width:104.90px;transform:scaleX(0.833);transform-origin:0 50%">インフォグラフィック</span></span></div></div></div>
<div class="mi" style="top:995px"><svg width="20" height="20" viewBox="0 0 20 20" style="left:10px;top:10px"><rect x="-.2" y="10" width="5" height="9" rx=".6" fill="#9fcbff"/><rect x="3.700" y=".6" width="16.500" height="18.400" rx="1.800" fill="url(#ib)"/><path d="M12 3.500l1.700 1.500-.5 3.500h-2.400l-.5-3.500z" fill="#fff"/><path d="M7.200 7.200c.6 2.600 2.200 4.200 4.800 4.400 2.600-.2 4.200-1.800 4.800-4.400-1.100.3-2.400 1.300-3.200 2.800h-3.200c-.8-1.500-2.100-2.500-3.200-2.800z" fill="#fff"/><path d="M6.500 15.250h10.700" stroke="#fff" stroke-width="1.900"/></svg><div class="t"><div><span style="white-space:nowrap"><span style="display:inline-block;white-space:nowrap;width:32.80px;transform:scaleX(0.809);transform-origin:0 50%">カード</span></span></div></div></div>
<div class="mi" style="top:1040px"><svg width="20" height="20" viewBox="0 0 20 20" style="left:10px;top:10px"><rect x="1.500" y="1.500" width="17" height="17" rx="1.800" fill="url(#ib)"/><g fill="#fff"><rect x="4" y="4.200" width="3.200" height="2.600"/><rect x="8.400" y="4.200" width="3.200" height="2.600"/><rect x="12.800" y="4.200" width="3.200" height="2.600"/><rect x="4" y="8.500" width="5.500" height="2.600"/><rect x="10.800" y="8.500" width="5.200" height="2.600"/><rect x="4" y="12.900" width="8.500" height="2.600"/><rect x="13.800" y="12.900" width="2.200" height="2.600"/></g></svg><div class="t"><div><span style="white-space:nowrap"><span style="letter-spacing:-0.05px">UI&amp;UX</span></span></div></div></div>
<div class="abs" style="left:1666px;top:1085px;width:232px;height:1px;background:#e4e5ea"></div>
<div class="mi" style="top:1091px"><svg width="22" height="16" viewBox="0 0 22 16" style="left:9px;top:12px"><path d="M5.500 15.500V1M1 5.500L5.500 1 10 5.500M16 .5V15M11.500 10.500L16 15l4.500-4.500" fill="none" stroke="#222" stroke-width="1.400"/></svg><div class="t"><div><span style="white-space:nowrap">順序<span style="display:inline-block;white-space:nowrap;width:11.43px;transform:scaleX(0.825);transform-origin:0 50%">を</span>並<span style="display:inline-block;white-space:nowrap;width:12.63px;transform:scaleX(0.825);transform-origin:0 50%">べ</span>替<span style="display:inline-block;white-space:nowrap;width:11.20px;transform:scaleX(0.825);transform-origin:0 50%">え</span></span></div></div></div>
<div class="redbox" style="left:1660px;top:316px;width:245px;height:50px"></div>
<!--D1-->

</body>
</html>
